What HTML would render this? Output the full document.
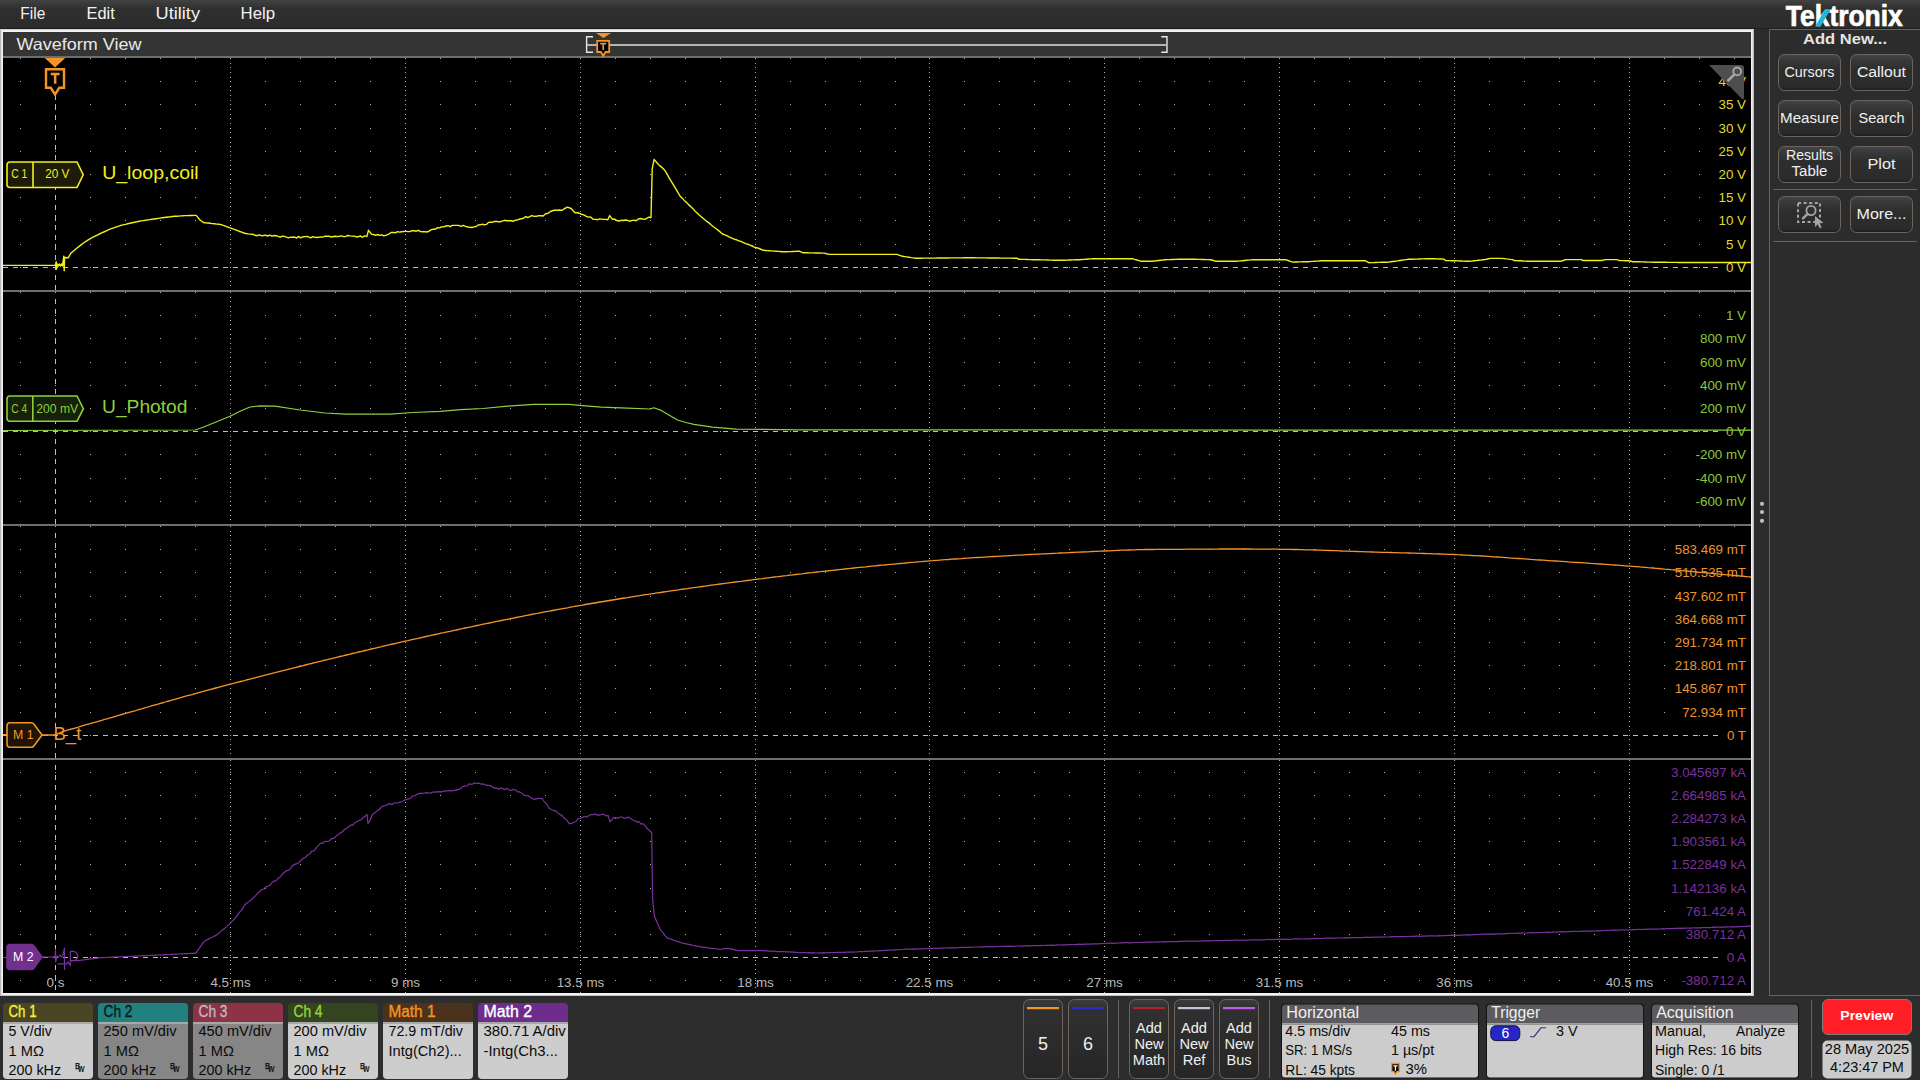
<!DOCTYPE html><html><head><meta charset="utf-8"><title>Waveform View</title><style>html,body{margin:0;padding:0;width:1920px;height:1080px;overflow:hidden;background:#2c2c2c}svg{display:block;font-family:"Liberation Sans",sans-serif}</style></head><body><svg width="1920" height="1080" viewBox="0 0 1920 1080"><defs>
<linearGradient id="gMenu" x1="0" y1="0" x2="0" y2="1"><stop offset="0" stop-color="#424242"/><stop offset="0.32" stop-color="#2f2f2f"/><stop offset="1" stop-color="#2c2c2c"/></linearGradient>
<linearGradient id="gBtn" x1="0" y1="0" x2="0" y2="1"><stop offset="0" stop-color="#45464a"/><stop offset="0.12" stop-color="#3a3b3d"/><stop offset="0.4" stop-color="#2e2e2e"/><stop offset="0.9" stop-color="#2b2b2b"/><stop offset="1" stop-color="#1d1d1d"/></linearGradient>
<linearGradient id="gBtn2" x1="0" y1="0" x2="0" y2="1"><stop offset="0" stop-color="#3c3c3c"/><stop offset="0.12" stop-color="#303030"/><stop offset="1" stop-color="#262626"/></linearGradient>
</defs><rect x="0" y="0" width="1920" height="1080" fill="#2c2c2c"/><rect x="0" y="0" width="1920" height="28" fill="url(#gMenu)"/><rect x="0" y="28" width="1920" height="1" fill="#1f1f1f"/><rect x="0" y="29" width="1754" height="967" fill="#f2f2f4"/><rect x="0" y="29" width="1" height="967" fill="#b9b9bd"/><rect x="1" y="29" width="1" height="967" fill="#e2e2e6"/><rect x="0" y="29" width="1754" height="1" fill="#d0d0d4"/><rect x="1752" y="29" width="1" height="967" fill="#e2e2e6"/><rect x="1753" y="29" width="1" height="967" fill="#b9b9bd"/><rect x="0" y="995" width="1754" height="1" fill="#c4c4c8"/><rect x="3" y="32" width="1748" height="24" fill="#343434"/><rect x="3" y="56" width="1748" height="2" fill="#6e6e6e"/><rect x="3" y="58" width="1748" height="935" fill="#000"/><path d="M20 58h1v1h-1zM55 58h1v1h-1zM90 58h1v1h-1zM125 58h1v1h-1zM160 58h1v1h-1zM195 58h1v1h-1zM230 58h1v1h-1zM265 58h1v1h-1zM300 58h1v1h-1zM335 58h1v1h-1zM370 58h1v1h-1zM405 58h1v1h-1zM440 58h1v1h-1zM475 58h1v1h-1zM510 58h1v1h-1zM545 58h1v1h-1zM580 58h1v1h-1zM615 58h1v1h-1zM650 58h1v1h-1zM685 58h1v1h-1zM720 58h1v1h-1zM755 58h1v1h-1zM790 58h1v1h-1zM825 58h1v1h-1zM860 58h1v1h-1zM895 58h1v1h-1zM929 58h1v1h-1zM964 58h1v1h-1zM999 58h1v1h-1zM1034 58h1v1h-1zM1069 58h1v1h-1zM1104 58h1v1h-1zM1139 58h1v1h-1zM1174 58h1v1h-1zM1209 58h1v1h-1zM1244 58h1v1h-1zM1279 58h1v1h-1zM1314 58h1v1h-1zM1349 58h1v1h-1zM1384 58h1v1h-1zM1419 58h1v1h-1zM1454 58h1v1h-1zM1489 58h1v1h-1zM1524 58h1v1h-1zM1559 58h1v1h-1zM1594 58h1v1h-1zM1629 58h1v1h-1zM1664 58h1v1h-1zM1699 58h1v1h-1zM1734 58h1v1h-1zM20 81h1v1h-1zM55 81h1v1h-1zM90 81h1v1h-1zM125 81h1v1h-1zM160 81h1v1h-1zM195 81h1v1h-1zM230 81h1v1h-1zM265 81h1v1h-1zM300 81h1v1h-1zM335 81h1v1h-1zM370 81h1v1h-1zM405 81h1v1h-1zM440 81h1v1h-1zM475 81h1v1h-1zM510 81h1v1h-1zM545 81h1v1h-1zM580 81h1v1h-1zM615 81h1v1h-1zM650 81h1v1h-1zM685 81h1v1h-1zM720 81h1v1h-1zM755 81h1v1h-1zM790 81h1v1h-1zM825 81h1v1h-1zM860 81h1v1h-1zM895 81h1v1h-1zM929 81h1v1h-1zM964 81h1v1h-1zM999 81h1v1h-1zM1034 81h1v1h-1zM1069 81h1v1h-1zM1104 81h1v1h-1zM1139 81h1v1h-1zM1174 81h1v1h-1zM1209 81h1v1h-1zM1244 81h1v1h-1zM1279 81h1v1h-1zM1314 81h1v1h-1zM1349 81h1v1h-1zM1384 81h1v1h-1zM1419 81h1v1h-1zM1454 81h1v1h-1zM1489 81h1v1h-1zM1524 81h1v1h-1zM1559 81h1v1h-1zM1594 81h1v1h-1zM1629 81h1v1h-1zM1664 81h1v1h-1zM1699 81h1v1h-1zM1734 81h1v1h-1zM20 104h1v1h-1zM55 104h1v1h-1zM90 104h1v1h-1zM125 104h1v1h-1zM160 104h1v1h-1zM195 104h1v1h-1zM230 104h1v1h-1zM265 104h1v1h-1zM300 104h1v1h-1zM335 104h1v1h-1zM370 104h1v1h-1zM405 104h1v1h-1zM440 104h1v1h-1zM475 104h1v1h-1zM510 104h1v1h-1zM545 104h1v1h-1zM580 104h1v1h-1zM615 104h1v1h-1zM650 104h1v1h-1zM685 104h1v1h-1zM720 104h1v1h-1zM755 104h1v1h-1zM790 104h1v1h-1zM825 104h1v1h-1zM860 104h1v1h-1zM895 104h1v1h-1zM929 104h1v1h-1zM964 104h1v1h-1zM999 104h1v1h-1zM1034 104h1v1h-1zM1069 104h1v1h-1zM1104 104h1v1h-1zM1139 104h1v1h-1zM1174 104h1v1h-1zM1209 104h1v1h-1zM1244 104h1v1h-1zM1279 104h1v1h-1zM1314 104h1v1h-1zM1349 104h1v1h-1zM1384 104h1v1h-1zM1419 104h1v1h-1zM1454 104h1v1h-1zM1489 104h1v1h-1zM1524 104h1v1h-1zM1559 104h1v1h-1zM1594 104h1v1h-1zM1629 104h1v1h-1zM1664 104h1v1h-1zM1699 104h1v1h-1zM1734 104h1v1h-1zM20 128h1v1h-1zM55 128h1v1h-1zM90 128h1v1h-1zM125 128h1v1h-1zM160 128h1v1h-1zM195 128h1v1h-1zM230 128h1v1h-1zM265 128h1v1h-1zM300 128h1v1h-1zM335 128h1v1h-1zM370 128h1v1h-1zM405 128h1v1h-1zM440 128h1v1h-1zM475 128h1v1h-1zM510 128h1v1h-1zM545 128h1v1h-1zM580 128h1v1h-1zM615 128h1v1h-1zM650 128h1v1h-1zM685 128h1v1h-1zM720 128h1v1h-1zM755 128h1v1h-1zM790 128h1v1h-1zM825 128h1v1h-1zM860 128h1v1h-1zM895 128h1v1h-1zM929 128h1v1h-1zM964 128h1v1h-1zM999 128h1v1h-1zM1034 128h1v1h-1zM1069 128h1v1h-1zM1104 128h1v1h-1zM1139 128h1v1h-1zM1174 128h1v1h-1zM1209 128h1v1h-1zM1244 128h1v1h-1zM1279 128h1v1h-1zM1314 128h1v1h-1zM1349 128h1v1h-1zM1384 128h1v1h-1zM1419 128h1v1h-1zM1454 128h1v1h-1zM1489 128h1v1h-1zM1524 128h1v1h-1zM1559 128h1v1h-1zM1594 128h1v1h-1zM1629 128h1v1h-1zM1664 128h1v1h-1zM1699 128h1v1h-1zM1734 128h1v1h-1zM20 151h1v1h-1zM55 151h1v1h-1zM90 151h1v1h-1zM125 151h1v1h-1zM160 151h1v1h-1zM195 151h1v1h-1zM230 151h1v1h-1zM265 151h1v1h-1zM300 151h1v1h-1zM335 151h1v1h-1zM370 151h1v1h-1zM405 151h1v1h-1zM440 151h1v1h-1zM475 151h1v1h-1zM510 151h1v1h-1zM545 151h1v1h-1zM580 151h1v1h-1zM615 151h1v1h-1zM650 151h1v1h-1zM685 151h1v1h-1zM720 151h1v1h-1zM755 151h1v1h-1zM790 151h1v1h-1zM825 151h1v1h-1zM860 151h1v1h-1zM895 151h1v1h-1zM929 151h1v1h-1zM964 151h1v1h-1zM999 151h1v1h-1zM1034 151h1v1h-1zM1069 151h1v1h-1zM1104 151h1v1h-1zM1139 151h1v1h-1zM1174 151h1v1h-1zM1209 151h1v1h-1zM1244 151h1v1h-1zM1279 151h1v1h-1zM1314 151h1v1h-1zM1349 151h1v1h-1zM1384 151h1v1h-1zM1419 151h1v1h-1zM1454 151h1v1h-1zM1489 151h1v1h-1zM1524 151h1v1h-1zM1559 151h1v1h-1zM1594 151h1v1h-1zM1629 151h1v1h-1zM1664 151h1v1h-1zM1699 151h1v1h-1zM1734 151h1v1h-1zM20 174h1v1h-1zM55 174h1v1h-1zM90 174h1v1h-1zM125 174h1v1h-1zM160 174h1v1h-1zM195 174h1v1h-1zM230 174h1v1h-1zM265 174h1v1h-1zM300 174h1v1h-1zM335 174h1v1h-1zM370 174h1v1h-1zM405 174h1v1h-1zM440 174h1v1h-1zM475 174h1v1h-1zM510 174h1v1h-1zM545 174h1v1h-1zM580 174h1v1h-1zM615 174h1v1h-1zM650 174h1v1h-1zM685 174h1v1h-1zM720 174h1v1h-1zM755 174h1v1h-1zM790 174h1v1h-1zM825 174h1v1h-1zM860 174h1v1h-1zM895 174h1v1h-1zM929 174h1v1h-1zM964 174h1v1h-1zM999 174h1v1h-1zM1034 174h1v1h-1zM1069 174h1v1h-1zM1104 174h1v1h-1zM1139 174h1v1h-1zM1174 174h1v1h-1zM1209 174h1v1h-1zM1244 174h1v1h-1zM1279 174h1v1h-1zM1314 174h1v1h-1zM1349 174h1v1h-1zM1384 174h1v1h-1zM1419 174h1v1h-1zM1454 174h1v1h-1zM1489 174h1v1h-1zM1524 174h1v1h-1zM1559 174h1v1h-1zM1594 174h1v1h-1zM1629 174h1v1h-1zM1664 174h1v1h-1zM1699 174h1v1h-1zM1734 174h1v1h-1zM20 197h1v1h-1zM55 197h1v1h-1zM90 197h1v1h-1zM125 197h1v1h-1zM160 197h1v1h-1zM195 197h1v1h-1zM230 197h1v1h-1zM265 197h1v1h-1zM300 197h1v1h-1zM335 197h1v1h-1zM370 197h1v1h-1zM405 197h1v1h-1zM440 197h1v1h-1zM475 197h1v1h-1zM510 197h1v1h-1zM545 197h1v1h-1zM580 197h1v1h-1zM615 197h1v1h-1zM650 197h1v1h-1zM685 197h1v1h-1zM720 197h1v1h-1zM755 197h1v1h-1zM790 197h1v1h-1zM825 197h1v1h-1zM860 197h1v1h-1zM895 197h1v1h-1zM929 197h1v1h-1zM964 197h1v1h-1zM999 197h1v1h-1zM1034 197h1v1h-1zM1069 197h1v1h-1zM1104 197h1v1h-1zM1139 197h1v1h-1zM1174 197h1v1h-1zM1209 197h1v1h-1zM1244 197h1v1h-1zM1279 197h1v1h-1zM1314 197h1v1h-1zM1349 197h1v1h-1zM1384 197h1v1h-1zM1419 197h1v1h-1zM1454 197h1v1h-1zM1489 197h1v1h-1zM1524 197h1v1h-1zM1559 197h1v1h-1zM1594 197h1v1h-1zM1629 197h1v1h-1zM1664 197h1v1h-1zM1699 197h1v1h-1zM1734 197h1v1h-1zM20 220h1v1h-1zM55 220h1v1h-1zM90 220h1v1h-1zM125 220h1v1h-1zM160 220h1v1h-1zM195 220h1v1h-1zM230 220h1v1h-1zM265 220h1v1h-1zM300 220h1v1h-1zM335 220h1v1h-1zM370 220h1v1h-1zM405 220h1v1h-1zM440 220h1v1h-1zM475 220h1v1h-1zM510 220h1v1h-1zM545 220h1v1h-1zM580 220h1v1h-1zM615 220h1v1h-1zM650 220h1v1h-1zM685 220h1v1h-1zM720 220h1v1h-1zM755 220h1v1h-1zM790 220h1v1h-1zM825 220h1v1h-1zM860 220h1v1h-1zM895 220h1v1h-1zM929 220h1v1h-1zM964 220h1v1h-1zM999 220h1v1h-1zM1034 220h1v1h-1zM1069 220h1v1h-1zM1104 220h1v1h-1zM1139 220h1v1h-1zM1174 220h1v1h-1zM1209 220h1v1h-1zM1244 220h1v1h-1zM1279 220h1v1h-1zM1314 220h1v1h-1zM1349 220h1v1h-1zM1384 220h1v1h-1zM1419 220h1v1h-1zM1454 220h1v1h-1zM1489 220h1v1h-1zM1524 220h1v1h-1zM1559 220h1v1h-1zM1594 220h1v1h-1zM1629 220h1v1h-1zM1664 220h1v1h-1zM1699 220h1v1h-1zM1734 220h1v1h-1zM20 244h1v1h-1zM55 244h1v1h-1zM90 244h1v1h-1zM125 244h1v1h-1zM160 244h1v1h-1zM195 244h1v1h-1zM230 244h1v1h-1zM265 244h1v1h-1zM300 244h1v1h-1zM335 244h1v1h-1zM370 244h1v1h-1zM405 244h1v1h-1zM440 244h1v1h-1zM475 244h1v1h-1zM510 244h1v1h-1zM545 244h1v1h-1zM580 244h1v1h-1zM615 244h1v1h-1zM650 244h1v1h-1zM685 244h1v1h-1zM720 244h1v1h-1zM755 244h1v1h-1zM790 244h1v1h-1zM825 244h1v1h-1zM860 244h1v1h-1zM895 244h1v1h-1zM929 244h1v1h-1zM964 244h1v1h-1zM999 244h1v1h-1zM1034 244h1v1h-1zM1069 244h1v1h-1zM1104 244h1v1h-1zM1139 244h1v1h-1zM1174 244h1v1h-1zM1209 244h1v1h-1zM1244 244h1v1h-1zM1279 244h1v1h-1zM1314 244h1v1h-1zM1349 244h1v1h-1zM1384 244h1v1h-1zM1419 244h1v1h-1zM1454 244h1v1h-1zM1489 244h1v1h-1zM1524 244h1v1h-1zM1559 244h1v1h-1zM1594 244h1v1h-1zM1629 244h1v1h-1zM1664 244h1v1h-1zM1699 244h1v1h-1zM1734 244h1v1h-1zM20 267h1v1h-1zM55 267h1v1h-1zM90 267h1v1h-1zM125 267h1v1h-1zM160 267h1v1h-1zM195 267h1v1h-1zM230 267h1v1h-1zM265 267h1v1h-1zM300 267h1v1h-1zM335 267h1v1h-1zM370 267h1v1h-1zM405 267h1v1h-1zM440 267h1v1h-1zM475 267h1v1h-1zM510 267h1v1h-1zM545 267h1v1h-1zM580 267h1v1h-1zM615 267h1v1h-1zM650 267h1v1h-1zM685 267h1v1h-1zM720 267h1v1h-1zM755 267h1v1h-1zM790 267h1v1h-1zM825 267h1v1h-1zM860 267h1v1h-1zM895 267h1v1h-1zM929 267h1v1h-1zM964 267h1v1h-1zM999 267h1v1h-1zM1034 267h1v1h-1zM1069 267h1v1h-1zM1104 267h1v1h-1zM1139 267h1v1h-1zM1174 267h1v1h-1zM1209 267h1v1h-1zM1244 267h1v1h-1zM1279 267h1v1h-1zM1314 267h1v1h-1zM1349 267h1v1h-1zM1384 267h1v1h-1zM1419 267h1v1h-1zM1454 267h1v1h-1zM1489 267h1v1h-1zM1524 267h1v1h-1zM1559 267h1v1h-1zM1594 267h1v1h-1zM1629 267h1v1h-1zM1664 267h1v1h-1zM1699 267h1v1h-1zM1734 267h1v1h-1zM20 292h1v1h-1zM55 292h1v1h-1zM90 292h1v1h-1zM125 292h1v1h-1zM160 292h1v1h-1zM195 292h1v1h-1zM230 292h1v1h-1zM265 292h1v1h-1zM300 292h1v1h-1zM335 292h1v1h-1zM370 292h1v1h-1zM405 292h1v1h-1zM440 292h1v1h-1zM475 292h1v1h-1zM510 292h1v1h-1zM545 292h1v1h-1zM580 292h1v1h-1zM615 292h1v1h-1zM650 292h1v1h-1zM685 292h1v1h-1zM720 292h1v1h-1zM755 292h1v1h-1zM790 292h1v1h-1zM825 292h1v1h-1zM860 292h1v1h-1zM895 292h1v1h-1zM929 292h1v1h-1zM964 292h1v1h-1zM999 292h1v1h-1zM1034 292h1v1h-1zM1069 292h1v1h-1zM1104 292h1v1h-1zM1139 292h1v1h-1zM1174 292h1v1h-1zM1209 292h1v1h-1zM1244 292h1v1h-1zM1279 292h1v1h-1zM1314 292h1v1h-1zM1349 292h1v1h-1zM1384 292h1v1h-1zM1419 292h1v1h-1zM1454 292h1v1h-1zM1489 292h1v1h-1zM1524 292h1v1h-1zM1559 292h1v1h-1zM1594 292h1v1h-1zM1629 292h1v1h-1zM1664 292h1v1h-1zM1699 292h1v1h-1zM1734 292h1v1h-1zM20 315h1v1h-1zM55 315h1v1h-1zM90 315h1v1h-1zM125 315h1v1h-1zM160 315h1v1h-1zM195 315h1v1h-1zM230 315h1v1h-1zM265 315h1v1h-1zM300 315h1v1h-1zM335 315h1v1h-1zM370 315h1v1h-1zM405 315h1v1h-1zM440 315h1v1h-1zM475 315h1v1h-1zM510 315h1v1h-1zM545 315h1v1h-1zM580 315h1v1h-1zM615 315h1v1h-1zM650 315h1v1h-1zM685 315h1v1h-1zM720 315h1v1h-1zM755 315h1v1h-1zM790 315h1v1h-1zM825 315h1v1h-1zM860 315h1v1h-1zM895 315h1v1h-1zM929 315h1v1h-1zM964 315h1v1h-1zM999 315h1v1h-1zM1034 315h1v1h-1zM1069 315h1v1h-1zM1104 315h1v1h-1zM1139 315h1v1h-1zM1174 315h1v1h-1zM1209 315h1v1h-1zM1244 315h1v1h-1zM1279 315h1v1h-1zM1314 315h1v1h-1zM1349 315h1v1h-1zM1384 315h1v1h-1zM1419 315h1v1h-1zM1454 315h1v1h-1zM1489 315h1v1h-1zM1524 315h1v1h-1zM1559 315h1v1h-1zM1594 315h1v1h-1zM1629 315h1v1h-1zM1664 315h1v1h-1zM1699 315h1v1h-1zM1734 315h1v1h-1zM20 338h1v1h-1zM55 338h1v1h-1zM90 338h1v1h-1zM125 338h1v1h-1zM160 338h1v1h-1zM195 338h1v1h-1zM230 338h1v1h-1zM265 338h1v1h-1zM300 338h1v1h-1zM335 338h1v1h-1zM370 338h1v1h-1zM405 338h1v1h-1zM440 338h1v1h-1zM475 338h1v1h-1zM510 338h1v1h-1zM545 338h1v1h-1zM580 338h1v1h-1zM615 338h1v1h-1zM650 338h1v1h-1zM685 338h1v1h-1zM720 338h1v1h-1zM755 338h1v1h-1zM790 338h1v1h-1zM825 338h1v1h-1zM860 338h1v1h-1zM895 338h1v1h-1zM929 338h1v1h-1zM964 338h1v1h-1zM999 338h1v1h-1zM1034 338h1v1h-1zM1069 338h1v1h-1zM1104 338h1v1h-1zM1139 338h1v1h-1zM1174 338h1v1h-1zM1209 338h1v1h-1zM1244 338h1v1h-1zM1279 338h1v1h-1zM1314 338h1v1h-1zM1349 338h1v1h-1zM1384 338h1v1h-1zM1419 338h1v1h-1zM1454 338h1v1h-1zM1489 338h1v1h-1zM1524 338h1v1h-1zM1559 338h1v1h-1zM1594 338h1v1h-1zM1629 338h1v1h-1zM1664 338h1v1h-1zM1699 338h1v1h-1zM1734 338h1v1h-1zM20 362h1v1h-1zM55 362h1v1h-1zM90 362h1v1h-1zM125 362h1v1h-1zM160 362h1v1h-1zM195 362h1v1h-1zM230 362h1v1h-1zM265 362h1v1h-1zM300 362h1v1h-1zM335 362h1v1h-1zM370 362h1v1h-1zM405 362h1v1h-1zM440 362h1v1h-1zM475 362h1v1h-1zM510 362h1v1h-1zM545 362h1v1h-1zM580 362h1v1h-1zM615 362h1v1h-1zM650 362h1v1h-1zM685 362h1v1h-1zM720 362h1v1h-1zM755 362h1v1h-1zM790 362h1v1h-1zM825 362h1v1h-1zM860 362h1v1h-1zM895 362h1v1h-1zM929 362h1v1h-1zM964 362h1v1h-1zM999 362h1v1h-1zM1034 362h1v1h-1zM1069 362h1v1h-1zM1104 362h1v1h-1zM1139 362h1v1h-1zM1174 362h1v1h-1zM1209 362h1v1h-1zM1244 362h1v1h-1zM1279 362h1v1h-1zM1314 362h1v1h-1zM1349 362h1v1h-1zM1384 362h1v1h-1zM1419 362h1v1h-1zM1454 362h1v1h-1zM1489 362h1v1h-1zM1524 362h1v1h-1zM1559 362h1v1h-1zM1594 362h1v1h-1zM1629 362h1v1h-1zM1664 362h1v1h-1zM1699 362h1v1h-1zM1734 362h1v1h-1zM20 385h1v1h-1zM55 385h1v1h-1zM90 385h1v1h-1zM125 385h1v1h-1zM160 385h1v1h-1zM195 385h1v1h-1zM230 385h1v1h-1zM265 385h1v1h-1zM300 385h1v1h-1zM335 385h1v1h-1zM370 385h1v1h-1zM405 385h1v1h-1zM440 385h1v1h-1zM475 385h1v1h-1zM510 385h1v1h-1zM545 385h1v1h-1zM580 385h1v1h-1zM615 385h1v1h-1zM650 385h1v1h-1zM685 385h1v1h-1zM720 385h1v1h-1zM755 385h1v1h-1zM790 385h1v1h-1zM825 385h1v1h-1zM860 385h1v1h-1zM895 385h1v1h-1zM929 385h1v1h-1zM964 385h1v1h-1zM999 385h1v1h-1zM1034 385h1v1h-1zM1069 385h1v1h-1zM1104 385h1v1h-1zM1139 385h1v1h-1zM1174 385h1v1h-1zM1209 385h1v1h-1zM1244 385h1v1h-1zM1279 385h1v1h-1zM1314 385h1v1h-1zM1349 385h1v1h-1zM1384 385h1v1h-1zM1419 385h1v1h-1zM1454 385h1v1h-1zM1489 385h1v1h-1zM1524 385h1v1h-1zM1559 385h1v1h-1zM1594 385h1v1h-1zM1629 385h1v1h-1zM1664 385h1v1h-1zM1699 385h1v1h-1zM1734 385h1v1h-1zM20 408h1v1h-1zM55 408h1v1h-1zM90 408h1v1h-1zM125 408h1v1h-1zM160 408h1v1h-1zM195 408h1v1h-1zM230 408h1v1h-1zM265 408h1v1h-1zM300 408h1v1h-1zM335 408h1v1h-1zM370 408h1v1h-1zM405 408h1v1h-1zM440 408h1v1h-1zM475 408h1v1h-1zM510 408h1v1h-1zM545 408h1v1h-1zM580 408h1v1h-1zM615 408h1v1h-1zM650 408h1v1h-1zM685 408h1v1h-1zM720 408h1v1h-1zM755 408h1v1h-1zM790 408h1v1h-1zM825 408h1v1h-1zM860 408h1v1h-1zM895 408h1v1h-1zM929 408h1v1h-1zM964 408h1v1h-1zM999 408h1v1h-1zM1034 408h1v1h-1zM1069 408h1v1h-1zM1104 408h1v1h-1zM1139 408h1v1h-1zM1174 408h1v1h-1zM1209 408h1v1h-1zM1244 408h1v1h-1zM1279 408h1v1h-1zM1314 408h1v1h-1zM1349 408h1v1h-1zM1384 408h1v1h-1zM1419 408h1v1h-1zM1454 408h1v1h-1zM1489 408h1v1h-1zM1524 408h1v1h-1zM1559 408h1v1h-1zM1594 408h1v1h-1zM1629 408h1v1h-1zM1664 408h1v1h-1zM1699 408h1v1h-1zM1734 408h1v1h-1zM20 431h1v1h-1zM55 431h1v1h-1zM90 431h1v1h-1zM125 431h1v1h-1zM160 431h1v1h-1zM195 431h1v1h-1zM230 431h1v1h-1zM265 431h1v1h-1zM300 431h1v1h-1zM335 431h1v1h-1zM370 431h1v1h-1zM405 431h1v1h-1zM440 431h1v1h-1zM475 431h1v1h-1zM510 431h1v1h-1zM545 431h1v1h-1zM580 431h1v1h-1zM615 431h1v1h-1zM650 431h1v1h-1zM685 431h1v1h-1zM720 431h1v1h-1zM755 431h1v1h-1zM790 431h1v1h-1zM825 431h1v1h-1zM860 431h1v1h-1zM895 431h1v1h-1zM929 431h1v1h-1zM964 431h1v1h-1zM999 431h1v1h-1zM1034 431h1v1h-1zM1069 431h1v1h-1zM1104 431h1v1h-1zM1139 431h1v1h-1zM1174 431h1v1h-1zM1209 431h1v1h-1zM1244 431h1v1h-1zM1279 431h1v1h-1zM1314 431h1v1h-1zM1349 431h1v1h-1zM1384 431h1v1h-1zM1419 431h1v1h-1zM1454 431h1v1h-1zM1489 431h1v1h-1zM1524 431h1v1h-1zM1559 431h1v1h-1zM1594 431h1v1h-1zM1629 431h1v1h-1zM1664 431h1v1h-1zM1699 431h1v1h-1zM1734 431h1v1h-1zM20 454h1v1h-1zM55 454h1v1h-1zM90 454h1v1h-1zM125 454h1v1h-1zM160 454h1v1h-1zM195 454h1v1h-1zM230 454h1v1h-1zM265 454h1v1h-1zM300 454h1v1h-1zM335 454h1v1h-1zM370 454h1v1h-1zM405 454h1v1h-1zM440 454h1v1h-1zM475 454h1v1h-1zM510 454h1v1h-1zM545 454h1v1h-1zM580 454h1v1h-1zM615 454h1v1h-1zM650 454h1v1h-1zM685 454h1v1h-1zM720 454h1v1h-1zM755 454h1v1h-1zM790 454h1v1h-1zM825 454h1v1h-1zM860 454h1v1h-1zM895 454h1v1h-1zM929 454h1v1h-1zM964 454h1v1h-1zM999 454h1v1h-1zM1034 454h1v1h-1zM1069 454h1v1h-1zM1104 454h1v1h-1zM1139 454h1v1h-1zM1174 454h1v1h-1zM1209 454h1v1h-1zM1244 454h1v1h-1zM1279 454h1v1h-1zM1314 454h1v1h-1zM1349 454h1v1h-1zM1384 454h1v1h-1zM1419 454h1v1h-1zM1454 454h1v1h-1zM1489 454h1v1h-1zM1524 454h1v1h-1zM1559 454h1v1h-1zM1594 454h1v1h-1zM1629 454h1v1h-1zM1664 454h1v1h-1zM1699 454h1v1h-1zM1734 454h1v1h-1zM20 478h1v1h-1zM55 478h1v1h-1zM90 478h1v1h-1zM125 478h1v1h-1zM160 478h1v1h-1zM195 478h1v1h-1zM230 478h1v1h-1zM265 478h1v1h-1zM300 478h1v1h-1zM335 478h1v1h-1zM370 478h1v1h-1zM405 478h1v1h-1zM440 478h1v1h-1zM475 478h1v1h-1zM510 478h1v1h-1zM545 478h1v1h-1zM580 478h1v1h-1zM615 478h1v1h-1zM650 478h1v1h-1zM685 478h1v1h-1zM720 478h1v1h-1zM755 478h1v1h-1zM790 478h1v1h-1zM825 478h1v1h-1zM860 478h1v1h-1zM895 478h1v1h-1zM929 478h1v1h-1zM964 478h1v1h-1zM999 478h1v1h-1zM1034 478h1v1h-1zM1069 478h1v1h-1zM1104 478h1v1h-1zM1139 478h1v1h-1zM1174 478h1v1h-1zM1209 478h1v1h-1zM1244 478h1v1h-1zM1279 478h1v1h-1zM1314 478h1v1h-1zM1349 478h1v1h-1zM1384 478h1v1h-1zM1419 478h1v1h-1zM1454 478h1v1h-1zM1489 478h1v1h-1zM1524 478h1v1h-1zM1559 478h1v1h-1zM1594 478h1v1h-1zM1629 478h1v1h-1zM1664 478h1v1h-1zM1699 478h1v1h-1zM1734 478h1v1h-1zM20 501h1v1h-1zM55 501h1v1h-1zM90 501h1v1h-1zM125 501h1v1h-1zM160 501h1v1h-1zM195 501h1v1h-1zM230 501h1v1h-1zM265 501h1v1h-1zM300 501h1v1h-1zM335 501h1v1h-1zM370 501h1v1h-1zM405 501h1v1h-1zM440 501h1v1h-1zM475 501h1v1h-1zM510 501h1v1h-1zM545 501h1v1h-1zM580 501h1v1h-1zM615 501h1v1h-1zM650 501h1v1h-1zM685 501h1v1h-1zM720 501h1v1h-1zM755 501h1v1h-1zM790 501h1v1h-1zM825 501h1v1h-1zM860 501h1v1h-1zM895 501h1v1h-1zM929 501h1v1h-1zM964 501h1v1h-1zM999 501h1v1h-1zM1034 501h1v1h-1zM1069 501h1v1h-1zM1104 501h1v1h-1zM1139 501h1v1h-1zM1174 501h1v1h-1zM1209 501h1v1h-1zM1244 501h1v1h-1zM1279 501h1v1h-1zM1314 501h1v1h-1zM1349 501h1v1h-1zM1384 501h1v1h-1zM1419 501h1v1h-1zM1454 501h1v1h-1zM1489 501h1v1h-1zM1524 501h1v1h-1zM1559 501h1v1h-1zM1594 501h1v1h-1zM1629 501h1v1h-1zM1664 501h1v1h-1zM1699 501h1v1h-1zM1734 501h1v1h-1zM20 526h1v1h-1zM55 526h1v1h-1zM90 526h1v1h-1zM125 526h1v1h-1zM160 526h1v1h-1zM195 526h1v1h-1zM230 526h1v1h-1zM265 526h1v1h-1zM300 526h1v1h-1zM335 526h1v1h-1zM370 526h1v1h-1zM405 526h1v1h-1zM440 526h1v1h-1zM475 526h1v1h-1zM510 526h1v1h-1zM545 526h1v1h-1zM580 526h1v1h-1zM615 526h1v1h-1zM650 526h1v1h-1zM685 526h1v1h-1zM720 526h1v1h-1zM755 526h1v1h-1zM790 526h1v1h-1zM825 526h1v1h-1zM860 526h1v1h-1zM895 526h1v1h-1zM929 526h1v1h-1zM964 526h1v1h-1zM999 526h1v1h-1zM1034 526h1v1h-1zM1069 526h1v1h-1zM1104 526h1v1h-1zM1139 526h1v1h-1zM1174 526h1v1h-1zM1209 526h1v1h-1zM1244 526h1v1h-1zM1279 526h1v1h-1zM1314 526h1v1h-1zM1349 526h1v1h-1zM1384 526h1v1h-1zM1419 526h1v1h-1zM1454 526h1v1h-1zM1489 526h1v1h-1zM1524 526h1v1h-1zM1559 526h1v1h-1zM1594 526h1v1h-1zM1629 526h1v1h-1zM1664 526h1v1h-1zM1699 526h1v1h-1zM1734 526h1v1h-1zM20 549h1v1h-1zM55 549h1v1h-1zM90 549h1v1h-1zM125 549h1v1h-1zM160 549h1v1h-1zM195 549h1v1h-1zM230 549h1v1h-1zM265 549h1v1h-1zM300 549h1v1h-1zM335 549h1v1h-1zM370 549h1v1h-1zM405 549h1v1h-1zM440 549h1v1h-1zM475 549h1v1h-1zM510 549h1v1h-1zM545 549h1v1h-1zM580 549h1v1h-1zM615 549h1v1h-1zM650 549h1v1h-1zM685 549h1v1h-1zM720 549h1v1h-1zM755 549h1v1h-1zM790 549h1v1h-1zM825 549h1v1h-1zM860 549h1v1h-1zM895 549h1v1h-1zM929 549h1v1h-1zM964 549h1v1h-1zM999 549h1v1h-1zM1034 549h1v1h-1zM1069 549h1v1h-1zM1104 549h1v1h-1zM1139 549h1v1h-1zM1174 549h1v1h-1zM1209 549h1v1h-1zM1244 549h1v1h-1zM1279 549h1v1h-1zM1314 549h1v1h-1zM1349 549h1v1h-1zM1384 549h1v1h-1zM1419 549h1v1h-1zM1454 549h1v1h-1zM1489 549h1v1h-1zM1524 549h1v1h-1zM1559 549h1v1h-1zM1594 549h1v1h-1zM1629 549h1v1h-1zM1664 549h1v1h-1zM1699 549h1v1h-1zM1734 549h1v1h-1zM20 572h1v1h-1zM55 572h1v1h-1zM90 572h1v1h-1zM125 572h1v1h-1zM160 572h1v1h-1zM195 572h1v1h-1zM230 572h1v1h-1zM265 572h1v1h-1zM300 572h1v1h-1zM335 572h1v1h-1zM370 572h1v1h-1zM405 572h1v1h-1zM440 572h1v1h-1zM475 572h1v1h-1zM510 572h1v1h-1zM545 572h1v1h-1zM580 572h1v1h-1zM615 572h1v1h-1zM650 572h1v1h-1zM685 572h1v1h-1zM720 572h1v1h-1zM755 572h1v1h-1zM790 572h1v1h-1zM825 572h1v1h-1zM860 572h1v1h-1zM895 572h1v1h-1zM929 572h1v1h-1zM964 572h1v1h-1zM999 572h1v1h-1zM1034 572h1v1h-1zM1069 572h1v1h-1zM1104 572h1v1h-1zM1139 572h1v1h-1zM1174 572h1v1h-1zM1209 572h1v1h-1zM1244 572h1v1h-1zM1279 572h1v1h-1zM1314 572h1v1h-1zM1349 572h1v1h-1zM1384 572h1v1h-1zM1419 572h1v1h-1zM1454 572h1v1h-1zM1489 572h1v1h-1zM1524 572h1v1h-1zM1559 572h1v1h-1zM1594 572h1v1h-1zM1629 572h1v1h-1zM1664 572h1v1h-1zM1699 572h1v1h-1zM1734 572h1v1h-1zM20 596h1v1h-1zM55 596h1v1h-1zM90 596h1v1h-1zM125 596h1v1h-1zM160 596h1v1h-1zM195 596h1v1h-1zM230 596h1v1h-1zM265 596h1v1h-1zM300 596h1v1h-1zM335 596h1v1h-1zM370 596h1v1h-1zM405 596h1v1h-1zM440 596h1v1h-1zM475 596h1v1h-1zM510 596h1v1h-1zM545 596h1v1h-1zM580 596h1v1h-1zM615 596h1v1h-1zM650 596h1v1h-1zM685 596h1v1h-1zM720 596h1v1h-1zM755 596h1v1h-1zM790 596h1v1h-1zM825 596h1v1h-1zM860 596h1v1h-1zM895 596h1v1h-1zM929 596h1v1h-1zM964 596h1v1h-1zM999 596h1v1h-1zM1034 596h1v1h-1zM1069 596h1v1h-1zM1104 596h1v1h-1zM1139 596h1v1h-1zM1174 596h1v1h-1zM1209 596h1v1h-1zM1244 596h1v1h-1zM1279 596h1v1h-1zM1314 596h1v1h-1zM1349 596h1v1h-1zM1384 596h1v1h-1zM1419 596h1v1h-1zM1454 596h1v1h-1zM1489 596h1v1h-1zM1524 596h1v1h-1zM1559 596h1v1h-1zM1594 596h1v1h-1zM1629 596h1v1h-1zM1664 596h1v1h-1zM1699 596h1v1h-1zM1734 596h1v1h-1zM20 619h1v1h-1zM55 619h1v1h-1zM90 619h1v1h-1zM125 619h1v1h-1zM160 619h1v1h-1zM195 619h1v1h-1zM230 619h1v1h-1zM265 619h1v1h-1zM300 619h1v1h-1zM335 619h1v1h-1zM370 619h1v1h-1zM405 619h1v1h-1zM440 619h1v1h-1zM475 619h1v1h-1zM510 619h1v1h-1zM545 619h1v1h-1zM580 619h1v1h-1zM615 619h1v1h-1zM650 619h1v1h-1zM685 619h1v1h-1zM720 619h1v1h-1zM755 619h1v1h-1zM790 619h1v1h-1zM825 619h1v1h-1zM860 619h1v1h-1zM895 619h1v1h-1zM929 619h1v1h-1zM964 619h1v1h-1zM999 619h1v1h-1zM1034 619h1v1h-1zM1069 619h1v1h-1zM1104 619h1v1h-1zM1139 619h1v1h-1zM1174 619h1v1h-1zM1209 619h1v1h-1zM1244 619h1v1h-1zM1279 619h1v1h-1zM1314 619h1v1h-1zM1349 619h1v1h-1zM1384 619h1v1h-1zM1419 619h1v1h-1zM1454 619h1v1h-1zM1489 619h1v1h-1zM1524 619h1v1h-1zM1559 619h1v1h-1zM1594 619h1v1h-1zM1629 619h1v1h-1zM1664 619h1v1h-1zM1699 619h1v1h-1zM1734 619h1v1h-1zM20 642h1v1h-1zM55 642h1v1h-1zM90 642h1v1h-1zM125 642h1v1h-1zM160 642h1v1h-1zM195 642h1v1h-1zM230 642h1v1h-1zM265 642h1v1h-1zM300 642h1v1h-1zM335 642h1v1h-1zM370 642h1v1h-1zM405 642h1v1h-1zM440 642h1v1h-1zM475 642h1v1h-1zM510 642h1v1h-1zM545 642h1v1h-1zM580 642h1v1h-1zM615 642h1v1h-1zM650 642h1v1h-1zM685 642h1v1h-1zM720 642h1v1h-1zM755 642h1v1h-1zM790 642h1v1h-1zM825 642h1v1h-1zM860 642h1v1h-1zM895 642h1v1h-1zM929 642h1v1h-1zM964 642h1v1h-1zM999 642h1v1h-1zM1034 642h1v1h-1zM1069 642h1v1h-1zM1104 642h1v1h-1zM1139 642h1v1h-1zM1174 642h1v1h-1zM1209 642h1v1h-1zM1244 642h1v1h-1zM1279 642h1v1h-1zM1314 642h1v1h-1zM1349 642h1v1h-1zM1384 642h1v1h-1zM1419 642h1v1h-1zM1454 642h1v1h-1zM1489 642h1v1h-1zM1524 642h1v1h-1zM1559 642h1v1h-1zM1594 642h1v1h-1zM1629 642h1v1h-1zM1664 642h1v1h-1zM1699 642h1v1h-1zM1734 642h1v1h-1zM20 665h1v1h-1zM55 665h1v1h-1zM90 665h1v1h-1zM125 665h1v1h-1zM160 665h1v1h-1zM195 665h1v1h-1zM230 665h1v1h-1zM265 665h1v1h-1zM300 665h1v1h-1zM335 665h1v1h-1zM370 665h1v1h-1zM405 665h1v1h-1zM440 665h1v1h-1zM475 665h1v1h-1zM510 665h1v1h-1zM545 665h1v1h-1zM580 665h1v1h-1zM615 665h1v1h-1zM650 665h1v1h-1zM685 665h1v1h-1zM720 665h1v1h-1zM755 665h1v1h-1zM790 665h1v1h-1zM825 665h1v1h-1zM860 665h1v1h-1zM895 665h1v1h-1zM929 665h1v1h-1zM964 665h1v1h-1zM999 665h1v1h-1zM1034 665h1v1h-1zM1069 665h1v1h-1zM1104 665h1v1h-1zM1139 665h1v1h-1zM1174 665h1v1h-1zM1209 665h1v1h-1zM1244 665h1v1h-1zM1279 665h1v1h-1zM1314 665h1v1h-1zM1349 665h1v1h-1zM1384 665h1v1h-1zM1419 665h1v1h-1zM1454 665h1v1h-1zM1489 665h1v1h-1zM1524 665h1v1h-1zM1559 665h1v1h-1zM1594 665h1v1h-1zM1629 665h1v1h-1zM1664 665h1v1h-1zM1699 665h1v1h-1zM1734 665h1v1h-1zM20 688h1v1h-1zM55 688h1v1h-1zM90 688h1v1h-1zM125 688h1v1h-1zM160 688h1v1h-1zM195 688h1v1h-1zM230 688h1v1h-1zM265 688h1v1h-1zM300 688h1v1h-1zM335 688h1v1h-1zM370 688h1v1h-1zM405 688h1v1h-1zM440 688h1v1h-1zM475 688h1v1h-1zM510 688h1v1h-1zM545 688h1v1h-1zM580 688h1v1h-1zM615 688h1v1h-1zM650 688h1v1h-1zM685 688h1v1h-1zM720 688h1v1h-1zM755 688h1v1h-1zM790 688h1v1h-1zM825 688h1v1h-1zM860 688h1v1h-1zM895 688h1v1h-1zM929 688h1v1h-1zM964 688h1v1h-1zM999 688h1v1h-1zM1034 688h1v1h-1zM1069 688h1v1h-1zM1104 688h1v1h-1zM1139 688h1v1h-1zM1174 688h1v1h-1zM1209 688h1v1h-1zM1244 688h1v1h-1zM1279 688h1v1h-1zM1314 688h1v1h-1zM1349 688h1v1h-1zM1384 688h1v1h-1zM1419 688h1v1h-1zM1454 688h1v1h-1zM1489 688h1v1h-1zM1524 688h1v1h-1zM1559 688h1v1h-1zM1594 688h1v1h-1zM1629 688h1v1h-1zM1664 688h1v1h-1zM1699 688h1v1h-1zM1734 688h1v1h-1zM20 712h1v1h-1zM55 712h1v1h-1zM90 712h1v1h-1zM125 712h1v1h-1zM160 712h1v1h-1zM195 712h1v1h-1zM230 712h1v1h-1zM265 712h1v1h-1zM300 712h1v1h-1zM335 712h1v1h-1zM370 712h1v1h-1zM405 712h1v1h-1zM440 712h1v1h-1zM475 712h1v1h-1zM510 712h1v1h-1zM545 712h1v1h-1zM580 712h1v1h-1zM615 712h1v1h-1zM650 712h1v1h-1zM685 712h1v1h-1zM720 712h1v1h-1zM755 712h1v1h-1zM790 712h1v1h-1zM825 712h1v1h-1zM860 712h1v1h-1zM895 712h1v1h-1zM929 712h1v1h-1zM964 712h1v1h-1zM999 712h1v1h-1zM1034 712h1v1h-1zM1069 712h1v1h-1zM1104 712h1v1h-1zM1139 712h1v1h-1zM1174 712h1v1h-1zM1209 712h1v1h-1zM1244 712h1v1h-1zM1279 712h1v1h-1zM1314 712h1v1h-1zM1349 712h1v1h-1zM1384 712h1v1h-1zM1419 712h1v1h-1zM1454 712h1v1h-1zM1489 712h1v1h-1zM1524 712h1v1h-1zM1559 712h1v1h-1zM1594 712h1v1h-1zM1629 712h1v1h-1zM1664 712h1v1h-1zM1699 712h1v1h-1zM1734 712h1v1h-1zM20 735h1v1h-1zM55 735h1v1h-1zM90 735h1v1h-1zM125 735h1v1h-1zM160 735h1v1h-1zM195 735h1v1h-1zM230 735h1v1h-1zM265 735h1v1h-1zM300 735h1v1h-1zM335 735h1v1h-1zM370 735h1v1h-1zM405 735h1v1h-1zM440 735h1v1h-1zM475 735h1v1h-1zM510 735h1v1h-1zM545 735h1v1h-1zM580 735h1v1h-1zM615 735h1v1h-1zM650 735h1v1h-1zM685 735h1v1h-1zM720 735h1v1h-1zM755 735h1v1h-1zM790 735h1v1h-1zM825 735h1v1h-1zM860 735h1v1h-1zM895 735h1v1h-1zM929 735h1v1h-1zM964 735h1v1h-1zM999 735h1v1h-1zM1034 735h1v1h-1zM1069 735h1v1h-1zM1104 735h1v1h-1zM1139 735h1v1h-1zM1174 735h1v1h-1zM1209 735h1v1h-1zM1244 735h1v1h-1zM1279 735h1v1h-1zM1314 735h1v1h-1zM1349 735h1v1h-1zM1384 735h1v1h-1zM1419 735h1v1h-1zM1454 735h1v1h-1zM1489 735h1v1h-1zM1524 735h1v1h-1zM1559 735h1v1h-1zM1594 735h1v1h-1zM1629 735h1v1h-1zM1664 735h1v1h-1zM1699 735h1v1h-1zM1734 735h1v1h-1zM20 772h1v1h-1zM55 772h1v1h-1zM90 772h1v1h-1zM125 772h1v1h-1zM160 772h1v1h-1zM195 772h1v1h-1zM230 772h1v1h-1zM265 772h1v1h-1zM300 772h1v1h-1zM335 772h1v1h-1zM370 772h1v1h-1zM405 772h1v1h-1zM440 772h1v1h-1zM475 772h1v1h-1zM510 772h1v1h-1zM545 772h1v1h-1zM580 772h1v1h-1zM615 772h1v1h-1zM650 772h1v1h-1zM685 772h1v1h-1zM720 772h1v1h-1zM755 772h1v1h-1zM790 772h1v1h-1zM825 772h1v1h-1zM860 772h1v1h-1zM895 772h1v1h-1zM929 772h1v1h-1zM964 772h1v1h-1zM999 772h1v1h-1zM1034 772h1v1h-1zM1069 772h1v1h-1zM1104 772h1v1h-1zM1139 772h1v1h-1zM1174 772h1v1h-1zM1209 772h1v1h-1zM1244 772h1v1h-1zM1279 772h1v1h-1zM1314 772h1v1h-1zM1349 772h1v1h-1zM1384 772h1v1h-1zM1419 772h1v1h-1zM1454 772h1v1h-1zM1489 772h1v1h-1zM1524 772h1v1h-1zM1559 772h1v1h-1zM1594 772h1v1h-1zM1629 772h1v1h-1zM1664 772h1v1h-1zM1699 772h1v1h-1zM1734 772h1v1h-1zM20 795h1v1h-1zM55 795h1v1h-1zM90 795h1v1h-1zM125 795h1v1h-1zM160 795h1v1h-1zM195 795h1v1h-1zM230 795h1v1h-1zM265 795h1v1h-1zM300 795h1v1h-1zM335 795h1v1h-1zM370 795h1v1h-1zM405 795h1v1h-1zM440 795h1v1h-1zM475 795h1v1h-1zM510 795h1v1h-1zM545 795h1v1h-1zM580 795h1v1h-1zM615 795h1v1h-1zM650 795h1v1h-1zM685 795h1v1h-1zM720 795h1v1h-1zM755 795h1v1h-1zM790 795h1v1h-1zM825 795h1v1h-1zM860 795h1v1h-1zM895 795h1v1h-1zM929 795h1v1h-1zM964 795h1v1h-1zM999 795h1v1h-1zM1034 795h1v1h-1zM1069 795h1v1h-1zM1104 795h1v1h-1zM1139 795h1v1h-1zM1174 795h1v1h-1zM1209 795h1v1h-1zM1244 795h1v1h-1zM1279 795h1v1h-1zM1314 795h1v1h-1zM1349 795h1v1h-1zM1384 795h1v1h-1zM1419 795h1v1h-1zM1454 795h1v1h-1zM1489 795h1v1h-1zM1524 795h1v1h-1zM1559 795h1v1h-1zM1594 795h1v1h-1zM1629 795h1v1h-1zM1664 795h1v1h-1zM1699 795h1v1h-1zM1734 795h1v1h-1zM20 818h1v1h-1zM55 818h1v1h-1zM90 818h1v1h-1zM125 818h1v1h-1zM160 818h1v1h-1zM195 818h1v1h-1zM230 818h1v1h-1zM265 818h1v1h-1zM300 818h1v1h-1zM335 818h1v1h-1zM370 818h1v1h-1zM405 818h1v1h-1zM440 818h1v1h-1zM475 818h1v1h-1zM510 818h1v1h-1zM545 818h1v1h-1zM580 818h1v1h-1zM615 818h1v1h-1zM650 818h1v1h-1zM685 818h1v1h-1zM720 818h1v1h-1zM755 818h1v1h-1zM790 818h1v1h-1zM825 818h1v1h-1zM860 818h1v1h-1zM895 818h1v1h-1zM929 818h1v1h-1zM964 818h1v1h-1zM999 818h1v1h-1zM1034 818h1v1h-1zM1069 818h1v1h-1zM1104 818h1v1h-1zM1139 818h1v1h-1zM1174 818h1v1h-1zM1209 818h1v1h-1zM1244 818h1v1h-1zM1279 818h1v1h-1zM1314 818h1v1h-1zM1349 818h1v1h-1zM1384 818h1v1h-1zM1419 818h1v1h-1zM1454 818h1v1h-1zM1489 818h1v1h-1zM1524 818h1v1h-1zM1559 818h1v1h-1zM1594 818h1v1h-1zM1629 818h1v1h-1zM1664 818h1v1h-1zM1699 818h1v1h-1zM1734 818h1v1h-1zM20 841h1v1h-1zM55 841h1v1h-1zM90 841h1v1h-1zM125 841h1v1h-1zM160 841h1v1h-1zM195 841h1v1h-1zM230 841h1v1h-1zM265 841h1v1h-1zM300 841h1v1h-1zM335 841h1v1h-1zM370 841h1v1h-1zM405 841h1v1h-1zM440 841h1v1h-1zM475 841h1v1h-1zM510 841h1v1h-1zM545 841h1v1h-1zM580 841h1v1h-1zM615 841h1v1h-1zM650 841h1v1h-1zM685 841h1v1h-1zM720 841h1v1h-1zM755 841h1v1h-1zM790 841h1v1h-1zM825 841h1v1h-1zM860 841h1v1h-1zM895 841h1v1h-1zM929 841h1v1h-1zM964 841h1v1h-1zM999 841h1v1h-1zM1034 841h1v1h-1zM1069 841h1v1h-1zM1104 841h1v1h-1zM1139 841h1v1h-1zM1174 841h1v1h-1zM1209 841h1v1h-1zM1244 841h1v1h-1zM1279 841h1v1h-1zM1314 841h1v1h-1zM1349 841h1v1h-1zM1384 841h1v1h-1zM1419 841h1v1h-1zM1454 841h1v1h-1zM1489 841h1v1h-1zM1524 841h1v1h-1zM1559 841h1v1h-1zM1594 841h1v1h-1zM1629 841h1v1h-1zM1664 841h1v1h-1zM1699 841h1v1h-1zM1734 841h1v1h-1zM20 864h1v1h-1zM55 864h1v1h-1zM90 864h1v1h-1zM125 864h1v1h-1zM160 864h1v1h-1zM195 864h1v1h-1zM230 864h1v1h-1zM265 864h1v1h-1zM300 864h1v1h-1zM335 864h1v1h-1zM370 864h1v1h-1zM405 864h1v1h-1zM440 864h1v1h-1zM475 864h1v1h-1zM510 864h1v1h-1zM545 864h1v1h-1zM580 864h1v1h-1zM615 864h1v1h-1zM650 864h1v1h-1zM685 864h1v1h-1zM720 864h1v1h-1zM755 864h1v1h-1zM790 864h1v1h-1zM825 864h1v1h-1zM860 864h1v1h-1zM895 864h1v1h-1zM929 864h1v1h-1zM964 864h1v1h-1zM999 864h1v1h-1zM1034 864h1v1h-1zM1069 864h1v1h-1zM1104 864h1v1h-1zM1139 864h1v1h-1zM1174 864h1v1h-1zM1209 864h1v1h-1zM1244 864h1v1h-1zM1279 864h1v1h-1zM1314 864h1v1h-1zM1349 864h1v1h-1zM1384 864h1v1h-1zM1419 864h1v1h-1zM1454 864h1v1h-1zM1489 864h1v1h-1zM1524 864h1v1h-1zM1559 864h1v1h-1zM1594 864h1v1h-1zM1629 864h1v1h-1zM1664 864h1v1h-1zM1699 864h1v1h-1zM1734 864h1v1h-1zM20 888h1v1h-1zM55 888h1v1h-1zM90 888h1v1h-1zM125 888h1v1h-1zM160 888h1v1h-1zM195 888h1v1h-1zM230 888h1v1h-1zM265 888h1v1h-1zM300 888h1v1h-1zM335 888h1v1h-1zM370 888h1v1h-1zM405 888h1v1h-1zM440 888h1v1h-1zM475 888h1v1h-1zM510 888h1v1h-1zM545 888h1v1h-1zM580 888h1v1h-1zM615 888h1v1h-1zM650 888h1v1h-1zM685 888h1v1h-1zM720 888h1v1h-1zM755 888h1v1h-1zM790 888h1v1h-1zM825 888h1v1h-1zM860 888h1v1h-1zM895 888h1v1h-1zM929 888h1v1h-1zM964 888h1v1h-1zM999 888h1v1h-1zM1034 888h1v1h-1zM1069 888h1v1h-1zM1104 888h1v1h-1zM1139 888h1v1h-1zM1174 888h1v1h-1zM1209 888h1v1h-1zM1244 888h1v1h-1zM1279 888h1v1h-1zM1314 888h1v1h-1zM1349 888h1v1h-1zM1384 888h1v1h-1zM1419 888h1v1h-1zM1454 888h1v1h-1zM1489 888h1v1h-1zM1524 888h1v1h-1zM1559 888h1v1h-1zM1594 888h1v1h-1zM1629 888h1v1h-1zM1664 888h1v1h-1zM1699 888h1v1h-1zM1734 888h1v1h-1zM20 911h1v1h-1zM55 911h1v1h-1zM90 911h1v1h-1zM125 911h1v1h-1zM160 911h1v1h-1zM195 911h1v1h-1zM230 911h1v1h-1zM265 911h1v1h-1zM300 911h1v1h-1zM335 911h1v1h-1zM370 911h1v1h-1zM405 911h1v1h-1zM440 911h1v1h-1zM475 911h1v1h-1zM510 911h1v1h-1zM545 911h1v1h-1zM580 911h1v1h-1zM615 911h1v1h-1zM650 911h1v1h-1zM685 911h1v1h-1zM720 911h1v1h-1zM755 911h1v1h-1zM790 911h1v1h-1zM825 911h1v1h-1zM860 911h1v1h-1zM895 911h1v1h-1zM929 911h1v1h-1zM964 911h1v1h-1zM999 911h1v1h-1zM1034 911h1v1h-1zM1069 911h1v1h-1zM1104 911h1v1h-1zM1139 911h1v1h-1zM1174 911h1v1h-1zM1209 911h1v1h-1zM1244 911h1v1h-1zM1279 911h1v1h-1zM1314 911h1v1h-1zM1349 911h1v1h-1zM1384 911h1v1h-1zM1419 911h1v1h-1zM1454 911h1v1h-1zM1489 911h1v1h-1zM1524 911h1v1h-1zM1559 911h1v1h-1zM1594 911h1v1h-1zM1629 911h1v1h-1zM1664 911h1v1h-1zM1699 911h1v1h-1zM1734 911h1v1h-1zM20 934h1v1h-1zM55 934h1v1h-1zM90 934h1v1h-1zM125 934h1v1h-1zM160 934h1v1h-1zM195 934h1v1h-1zM230 934h1v1h-1zM265 934h1v1h-1zM300 934h1v1h-1zM335 934h1v1h-1zM370 934h1v1h-1zM405 934h1v1h-1zM440 934h1v1h-1zM475 934h1v1h-1zM510 934h1v1h-1zM545 934h1v1h-1zM580 934h1v1h-1zM615 934h1v1h-1zM650 934h1v1h-1zM685 934h1v1h-1zM720 934h1v1h-1zM755 934h1v1h-1zM790 934h1v1h-1zM825 934h1v1h-1zM860 934h1v1h-1zM895 934h1v1h-1zM929 934h1v1h-1zM964 934h1v1h-1zM999 934h1v1h-1zM1034 934h1v1h-1zM1069 934h1v1h-1zM1104 934h1v1h-1zM1139 934h1v1h-1zM1174 934h1v1h-1zM1209 934h1v1h-1zM1244 934h1v1h-1zM1279 934h1v1h-1zM1314 934h1v1h-1zM1349 934h1v1h-1zM1384 934h1v1h-1zM1419 934h1v1h-1zM1454 934h1v1h-1zM1489 934h1v1h-1zM1524 934h1v1h-1zM1559 934h1v1h-1zM1594 934h1v1h-1zM1629 934h1v1h-1zM1664 934h1v1h-1zM1699 934h1v1h-1zM1734 934h1v1h-1zM20 957h1v1h-1zM55 957h1v1h-1zM90 957h1v1h-1zM125 957h1v1h-1zM160 957h1v1h-1zM195 957h1v1h-1zM230 957h1v1h-1zM265 957h1v1h-1zM300 957h1v1h-1zM335 957h1v1h-1zM370 957h1v1h-1zM405 957h1v1h-1zM440 957h1v1h-1zM475 957h1v1h-1zM510 957h1v1h-1zM545 957h1v1h-1zM580 957h1v1h-1zM615 957h1v1h-1zM650 957h1v1h-1zM685 957h1v1h-1zM720 957h1v1h-1zM755 957h1v1h-1zM790 957h1v1h-1zM825 957h1v1h-1zM860 957h1v1h-1zM895 957h1v1h-1zM929 957h1v1h-1zM964 957h1v1h-1zM999 957h1v1h-1zM1034 957h1v1h-1zM1069 957h1v1h-1zM1104 957h1v1h-1zM1139 957h1v1h-1zM1174 957h1v1h-1zM1209 957h1v1h-1zM1244 957h1v1h-1zM1279 957h1v1h-1zM1314 957h1v1h-1zM1349 957h1v1h-1zM1384 957h1v1h-1zM1419 957h1v1h-1zM1454 957h1v1h-1zM1489 957h1v1h-1zM1524 957h1v1h-1zM1559 957h1v1h-1zM1594 957h1v1h-1zM1629 957h1v1h-1zM1664 957h1v1h-1zM1699 957h1v1h-1zM1734 957h1v1h-1zM20 980h1v1h-1zM55 980h1v1h-1zM90 980h1v1h-1zM125 980h1v1h-1zM160 980h1v1h-1zM195 980h1v1h-1zM230 980h1v1h-1zM265 980h1v1h-1zM300 980h1v1h-1zM335 980h1v1h-1zM370 980h1v1h-1zM405 980h1v1h-1zM440 980h1v1h-1zM475 980h1v1h-1zM510 980h1v1h-1zM545 980h1v1h-1zM580 980h1v1h-1zM615 980h1v1h-1zM650 980h1v1h-1zM685 980h1v1h-1zM720 980h1v1h-1zM755 980h1v1h-1zM790 980h1v1h-1zM825 980h1v1h-1zM860 980h1v1h-1zM895 980h1v1h-1zM929 980h1v1h-1zM964 980h1v1h-1zM999 980h1v1h-1zM1034 980h1v1h-1zM1069 980h1v1h-1zM1104 980h1v1h-1zM1139 980h1v1h-1zM1174 980h1v1h-1zM1209 980h1v1h-1zM1244 980h1v1h-1zM1279 980h1v1h-1zM1314 980h1v1h-1zM1349 980h1v1h-1zM1384 980h1v1h-1zM1419 980h1v1h-1zM1454 980h1v1h-1zM1489 980h1v1h-1zM1524 980h1v1h-1zM1559 980h1v1h-1zM1594 980h1v1h-1zM1629 980h1v1h-1zM1664 980h1v1h-1zM1699 980h1v1h-1zM1734 980h1v1h-1z" fill="#b0b0b0" shape-rendering="crispEdges"/><path d="M230 58h1v1h-1zM230 63h1v1h-1zM230 67h1v1h-1zM230 72h1v1h-1zM230 77h1v1h-1zM230 81h1v1h-1zM230 86h1v1h-1zM230 90h1v1h-1zM230 95h1v1h-1zM230 100h1v1h-1zM230 104h1v1h-1zM230 109h1v1h-1zM230 114h1v1h-1zM230 118h1v1h-1zM230 123h1v1h-1zM230 128h1v1h-1zM230 132h1v1h-1zM230 137h1v1h-1zM230 142h1v1h-1zM230 146h1v1h-1zM230 151h1v1h-1zM230 155h1v1h-1zM230 160h1v1h-1zM230 165h1v1h-1zM230 169h1v1h-1zM230 174h1v1h-1zM230 179h1v1h-1zM230 183h1v1h-1zM230 188h1v1h-1zM230 193h1v1h-1zM230 197h1v1h-1zM230 202h1v1h-1zM230 206h1v1h-1zM230 211h1v1h-1zM230 216h1v1h-1zM230 220h1v1h-1zM230 225h1v1h-1zM230 230h1v1h-1zM230 234h1v1h-1zM230 239h1v1h-1zM230 244h1v1h-1zM230 248h1v1h-1zM230 253h1v1h-1zM230 258h1v1h-1zM230 262h1v1h-1zM230 267h1v1h-1zM230 271h1v1h-1zM230 276h1v1h-1zM230 281h1v1h-1zM230 285h1v1h-1zM230 292h1v1h-1zM230 297h1v1h-1zM230 301h1v1h-1zM230 306h1v1h-1zM230 311h1v1h-1zM230 315h1v1h-1zM230 320h1v1h-1zM230 324h1v1h-1zM230 329h1v1h-1zM230 334h1v1h-1zM230 338h1v1h-1zM230 343h1v1h-1zM230 348h1v1h-1zM230 352h1v1h-1zM230 357h1v1h-1zM230 362h1v1h-1zM230 366h1v1h-1zM230 371h1v1h-1zM230 376h1v1h-1zM230 380h1v1h-1zM230 385h1v1h-1zM230 389h1v1h-1zM230 394h1v1h-1zM230 399h1v1h-1zM230 403h1v1h-1zM230 408h1v1h-1zM230 413h1v1h-1zM230 417h1v1h-1zM230 422h1v1h-1zM230 427h1v1h-1zM230 431h1v1h-1zM230 436h1v1h-1zM230 440h1v1h-1zM230 445h1v1h-1zM230 450h1v1h-1zM230 454h1v1h-1zM230 459h1v1h-1zM230 464h1v1h-1zM230 468h1v1h-1zM230 473h1v1h-1zM230 478h1v1h-1zM230 482h1v1h-1zM230 487h1v1h-1zM230 492h1v1h-1zM230 496h1v1h-1zM230 501h1v1h-1zM230 505h1v1h-1zM230 510h1v1h-1zM230 515h1v1h-1zM230 519h1v1h-1zM230 526h1v1h-1zM230 531h1v1h-1zM230 535h1v1h-1zM230 540h1v1h-1zM230 545h1v1h-1zM230 549h1v1h-1zM230 554h1v1h-1zM230 558h1v1h-1zM230 563h1v1h-1zM230 568h1v1h-1zM230 572h1v1h-1zM230 577h1v1h-1zM230 582h1v1h-1zM230 586h1v1h-1zM230 591h1v1h-1zM230 596h1v1h-1zM230 600h1v1h-1zM230 605h1v1h-1zM230 610h1v1h-1zM230 614h1v1h-1zM230 619h1v1h-1zM230 623h1v1h-1zM230 628h1v1h-1zM230 633h1v1h-1zM230 637h1v1h-1zM230 642h1v1h-1zM230 647h1v1h-1zM230 651h1v1h-1zM230 656h1v1h-1zM230 661h1v1h-1zM230 665h1v1h-1zM230 670h1v1h-1zM230 674h1v1h-1zM230 679h1v1h-1zM230 684h1v1h-1zM230 688h1v1h-1zM230 693h1v1h-1zM230 698h1v1h-1zM230 702h1v1h-1zM230 707h1v1h-1zM230 712h1v1h-1zM230 716h1v1h-1zM230 721h1v1h-1zM230 726h1v1h-1zM230 730h1v1h-1zM230 735h1v1h-1zM230 739h1v1h-1zM230 744h1v1h-1zM230 749h1v1h-1zM230 753h1v1h-1zM230 760h1v1h-1zM230 765h1v1h-1zM230 769h1v1h-1zM230 774h1v1h-1zM230 779h1v1h-1zM230 783h1v1h-1zM230 788h1v1h-1zM230 792h1v1h-1zM230 797h1v1h-1zM230 802h1v1h-1zM230 806h1v1h-1zM230 811h1v1h-1zM230 816h1v1h-1zM230 820h1v1h-1zM230 825h1v1h-1zM230 830h1v1h-1zM230 834h1v1h-1zM230 839h1v1h-1zM230 844h1v1h-1zM230 848h1v1h-1zM230 853h1v1h-1zM230 857h1v1h-1zM230 862h1v1h-1zM230 867h1v1h-1zM230 871h1v1h-1zM230 876h1v1h-1zM230 881h1v1h-1zM230 885h1v1h-1zM230 890h1v1h-1zM230 895h1v1h-1zM230 899h1v1h-1zM230 904h1v1h-1zM230 908h1v1h-1zM230 913h1v1h-1zM230 918h1v1h-1zM230 922h1v1h-1zM230 927h1v1h-1zM230 932h1v1h-1zM230 936h1v1h-1zM230 941h1v1h-1zM230 946h1v1h-1zM230 950h1v1h-1zM230 955h1v1h-1zM230 960h1v1h-1zM230 964h1v1h-1zM230 969h1v1h-1zM230 973h1v1h-1zM230 978h1v1h-1zM230 983h1v1h-1zM230 987h1v1h-1zM230 992h1v1h-1zM405 58h1v1h-1zM405 63h1v1h-1zM405 67h1v1h-1zM405 72h1v1h-1zM405 77h1v1h-1zM405 81h1v1h-1zM405 86h1v1h-1zM405 90h1v1h-1zM405 95h1v1h-1zM405 100h1v1h-1zM405 104h1v1h-1zM405 109h1v1h-1zM405 114h1v1h-1zM405 118h1v1h-1zM405 123h1v1h-1zM405 128h1v1h-1zM405 132h1v1h-1zM405 137h1v1h-1zM405 142h1v1h-1zM405 146h1v1h-1zM405 151h1v1h-1zM405 155h1v1h-1zM405 160h1v1h-1zM405 165h1v1h-1zM405 169h1v1h-1zM405 174h1v1h-1zM405 179h1v1h-1zM405 183h1v1h-1zM405 188h1v1h-1zM405 193h1v1h-1zM405 197h1v1h-1zM405 202h1v1h-1zM405 206h1v1h-1zM405 211h1v1h-1zM405 216h1v1h-1zM405 220h1v1h-1zM405 225h1v1h-1zM405 230h1v1h-1zM405 234h1v1h-1zM405 239h1v1h-1zM405 244h1v1h-1zM405 248h1v1h-1zM405 253h1v1h-1zM405 258h1v1h-1zM405 262h1v1h-1zM405 267h1v1h-1zM405 271h1v1h-1zM405 276h1v1h-1zM405 281h1v1h-1zM405 285h1v1h-1zM405 292h1v1h-1zM405 297h1v1h-1zM405 301h1v1h-1zM405 306h1v1h-1zM405 311h1v1h-1zM405 315h1v1h-1zM405 320h1v1h-1zM405 324h1v1h-1zM405 329h1v1h-1zM405 334h1v1h-1zM405 338h1v1h-1zM405 343h1v1h-1zM405 348h1v1h-1zM405 352h1v1h-1zM405 357h1v1h-1zM405 362h1v1h-1zM405 366h1v1h-1zM405 371h1v1h-1zM405 376h1v1h-1zM405 380h1v1h-1zM405 385h1v1h-1zM405 389h1v1h-1zM405 394h1v1h-1zM405 399h1v1h-1zM405 403h1v1h-1zM405 408h1v1h-1zM405 413h1v1h-1zM405 417h1v1h-1zM405 422h1v1h-1zM405 427h1v1h-1zM405 431h1v1h-1zM405 436h1v1h-1zM405 440h1v1h-1zM405 445h1v1h-1zM405 450h1v1h-1zM405 454h1v1h-1zM405 459h1v1h-1zM405 464h1v1h-1zM405 468h1v1h-1zM405 473h1v1h-1zM405 478h1v1h-1zM405 482h1v1h-1zM405 487h1v1h-1zM405 492h1v1h-1zM405 496h1v1h-1zM405 501h1v1h-1zM405 505h1v1h-1zM405 510h1v1h-1zM405 515h1v1h-1zM405 519h1v1h-1zM405 526h1v1h-1zM405 531h1v1h-1zM405 535h1v1h-1zM405 540h1v1h-1zM405 545h1v1h-1zM405 549h1v1h-1zM405 554h1v1h-1zM405 558h1v1h-1zM405 563h1v1h-1zM405 568h1v1h-1zM405 572h1v1h-1zM405 577h1v1h-1zM405 582h1v1h-1zM405 586h1v1h-1zM405 591h1v1h-1zM405 596h1v1h-1zM405 600h1v1h-1zM405 605h1v1h-1zM405 610h1v1h-1zM405 614h1v1h-1zM405 619h1v1h-1zM405 623h1v1h-1zM405 628h1v1h-1zM405 633h1v1h-1zM405 637h1v1h-1zM405 642h1v1h-1zM405 647h1v1h-1zM405 651h1v1h-1zM405 656h1v1h-1zM405 661h1v1h-1zM405 665h1v1h-1zM405 670h1v1h-1zM405 674h1v1h-1zM405 679h1v1h-1zM405 684h1v1h-1zM405 688h1v1h-1zM405 693h1v1h-1zM405 698h1v1h-1zM405 702h1v1h-1zM405 707h1v1h-1zM405 712h1v1h-1zM405 716h1v1h-1zM405 721h1v1h-1zM405 726h1v1h-1zM405 730h1v1h-1zM405 735h1v1h-1zM405 739h1v1h-1zM405 744h1v1h-1zM405 749h1v1h-1zM405 753h1v1h-1zM405 760h1v1h-1zM405 765h1v1h-1zM405 769h1v1h-1zM405 774h1v1h-1zM405 779h1v1h-1zM405 783h1v1h-1zM405 788h1v1h-1zM405 792h1v1h-1zM405 797h1v1h-1zM405 802h1v1h-1zM405 806h1v1h-1zM405 811h1v1h-1zM405 816h1v1h-1zM405 820h1v1h-1zM405 825h1v1h-1zM405 830h1v1h-1zM405 834h1v1h-1zM405 839h1v1h-1zM405 844h1v1h-1zM405 848h1v1h-1zM405 853h1v1h-1zM405 857h1v1h-1zM405 862h1v1h-1zM405 867h1v1h-1zM405 871h1v1h-1zM405 876h1v1h-1zM405 881h1v1h-1zM405 885h1v1h-1zM405 890h1v1h-1zM405 895h1v1h-1zM405 899h1v1h-1zM405 904h1v1h-1zM405 908h1v1h-1zM405 913h1v1h-1zM405 918h1v1h-1zM405 922h1v1h-1zM405 927h1v1h-1zM405 932h1v1h-1zM405 936h1v1h-1zM405 941h1v1h-1zM405 946h1v1h-1zM405 950h1v1h-1zM405 955h1v1h-1zM405 960h1v1h-1zM405 964h1v1h-1zM405 969h1v1h-1zM405 973h1v1h-1zM405 978h1v1h-1zM405 983h1v1h-1zM405 987h1v1h-1zM405 992h1v1h-1zM580 58h1v1h-1zM580 63h1v1h-1zM580 67h1v1h-1zM580 72h1v1h-1zM580 77h1v1h-1zM580 81h1v1h-1zM580 86h1v1h-1zM580 90h1v1h-1zM580 95h1v1h-1zM580 100h1v1h-1zM580 104h1v1h-1zM580 109h1v1h-1zM580 114h1v1h-1zM580 118h1v1h-1zM580 123h1v1h-1zM580 128h1v1h-1zM580 132h1v1h-1zM580 137h1v1h-1zM580 142h1v1h-1zM580 146h1v1h-1zM580 151h1v1h-1zM580 155h1v1h-1zM580 160h1v1h-1zM580 165h1v1h-1zM580 169h1v1h-1zM580 174h1v1h-1zM580 179h1v1h-1zM580 183h1v1h-1zM580 188h1v1h-1zM580 193h1v1h-1zM580 197h1v1h-1zM580 202h1v1h-1zM580 206h1v1h-1zM580 211h1v1h-1zM580 216h1v1h-1zM580 220h1v1h-1zM580 225h1v1h-1zM580 230h1v1h-1zM580 234h1v1h-1zM580 239h1v1h-1zM580 244h1v1h-1zM580 248h1v1h-1zM580 253h1v1h-1zM580 258h1v1h-1zM580 262h1v1h-1zM580 267h1v1h-1zM580 271h1v1h-1zM580 276h1v1h-1zM580 281h1v1h-1zM580 285h1v1h-1zM580 292h1v1h-1zM580 297h1v1h-1zM580 301h1v1h-1zM580 306h1v1h-1zM580 311h1v1h-1zM580 315h1v1h-1zM580 320h1v1h-1zM580 324h1v1h-1zM580 329h1v1h-1zM580 334h1v1h-1zM580 338h1v1h-1zM580 343h1v1h-1zM580 348h1v1h-1zM580 352h1v1h-1zM580 357h1v1h-1zM580 362h1v1h-1zM580 366h1v1h-1zM580 371h1v1h-1zM580 376h1v1h-1zM580 380h1v1h-1zM580 385h1v1h-1zM580 389h1v1h-1zM580 394h1v1h-1zM580 399h1v1h-1zM580 403h1v1h-1zM580 408h1v1h-1zM580 413h1v1h-1zM580 417h1v1h-1zM580 422h1v1h-1zM580 427h1v1h-1zM580 431h1v1h-1zM580 436h1v1h-1zM580 440h1v1h-1zM580 445h1v1h-1zM580 450h1v1h-1zM580 454h1v1h-1zM580 459h1v1h-1zM580 464h1v1h-1zM580 468h1v1h-1zM580 473h1v1h-1zM580 478h1v1h-1zM580 482h1v1h-1zM580 487h1v1h-1zM580 492h1v1h-1zM580 496h1v1h-1zM580 501h1v1h-1zM580 505h1v1h-1zM580 510h1v1h-1zM580 515h1v1h-1zM580 519h1v1h-1zM580 526h1v1h-1zM580 531h1v1h-1zM580 535h1v1h-1zM580 540h1v1h-1zM580 545h1v1h-1zM580 549h1v1h-1zM580 554h1v1h-1zM580 558h1v1h-1zM580 563h1v1h-1zM580 568h1v1h-1zM580 572h1v1h-1zM580 577h1v1h-1zM580 582h1v1h-1zM580 586h1v1h-1zM580 591h1v1h-1zM580 596h1v1h-1zM580 600h1v1h-1zM580 605h1v1h-1zM580 610h1v1h-1zM580 614h1v1h-1zM580 619h1v1h-1zM580 623h1v1h-1zM580 628h1v1h-1zM580 633h1v1h-1zM580 637h1v1h-1zM580 642h1v1h-1zM580 647h1v1h-1zM580 651h1v1h-1zM580 656h1v1h-1zM580 661h1v1h-1zM580 665h1v1h-1zM580 670h1v1h-1zM580 674h1v1h-1zM580 679h1v1h-1zM580 684h1v1h-1zM580 688h1v1h-1zM580 693h1v1h-1zM580 698h1v1h-1zM580 702h1v1h-1zM580 707h1v1h-1zM580 712h1v1h-1zM580 716h1v1h-1zM580 721h1v1h-1zM580 726h1v1h-1zM580 730h1v1h-1zM580 735h1v1h-1zM580 739h1v1h-1zM580 744h1v1h-1zM580 749h1v1h-1zM580 753h1v1h-1zM580 760h1v1h-1zM580 765h1v1h-1zM580 769h1v1h-1zM580 774h1v1h-1zM580 779h1v1h-1zM580 783h1v1h-1zM580 788h1v1h-1zM580 792h1v1h-1zM580 797h1v1h-1zM580 802h1v1h-1zM580 806h1v1h-1zM580 811h1v1h-1zM580 816h1v1h-1zM580 820h1v1h-1zM580 825h1v1h-1zM580 830h1v1h-1zM580 834h1v1h-1zM580 839h1v1h-1zM580 844h1v1h-1zM580 848h1v1h-1zM580 853h1v1h-1zM580 857h1v1h-1zM580 862h1v1h-1zM580 867h1v1h-1zM580 871h1v1h-1zM580 876h1v1h-1zM580 881h1v1h-1zM580 885h1v1h-1zM580 890h1v1h-1zM580 895h1v1h-1zM580 899h1v1h-1zM580 904h1v1h-1zM580 908h1v1h-1zM580 913h1v1h-1zM580 918h1v1h-1zM580 922h1v1h-1zM580 927h1v1h-1zM580 932h1v1h-1zM580 936h1v1h-1zM580 941h1v1h-1zM580 946h1v1h-1zM580 950h1v1h-1zM580 955h1v1h-1zM580 960h1v1h-1zM580 964h1v1h-1zM580 969h1v1h-1zM580 973h1v1h-1zM580 978h1v1h-1zM580 983h1v1h-1zM580 987h1v1h-1zM580 992h1v1h-1zM755 58h1v1h-1zM755 63h1v1h-1zM755 67h1v1h-1zM755 72h1v1h-1zM755 77h1v1h-1zM755 81h1v1h-1zM755 86h1v1h-1zM755 90h1v1h-1zM755 95h1v1h-1zM755 100h1v1h-1zM755 104h1v1h-1zM755 109h1v1h-1zM755 114h1v1h-1zM755 118h1v1h-1zM755 123h1v1h-1zM755 128h1v1h-1zM755 132h1v1h-1zM755 137h1v1h-1zM755 142h1v1h-1zM755 146h1v1h-1zM755 151h1v1h-1zM755 155h1v1h-1zM755 160h1v1h-1zM755 165h1v1h-1zM755 169h1v1h-1zM755 174h1v1h-1zM755 179h1v1h-1zM755 183h1v1h-1zM755 188h1v1h-1zM755 193h1v1h-1zM755 197h1v1h-1zM755 202h1v1h-1zM755 206h1v1h-1zM755 211h1v1h-1zM755 216h1v1h-1zM755 220h1v1h-1zM755 225h1v1h-1zM755 230h1v1h-1zM755 234h1v1h-1zM755 239h1v1h-1zM755 244h1v1h-1zM755 248h1v1h-1zM755 253h1v1h-1zM755 258h1v1h-1zM755 262h1v1h-1zM755 267h1v1h-1zM755 271h1v1h-1zM755 276h1v1h-1zM755 281h1v1h-1zM755 285h1v1h-1zM755 292h1v1h-1zM755 297h1v1h-1zM755 301h1v1h-1zM755 306h1v1h-1zM755 311h1v1h-1zM755 315h1v1h-1zM755 320h1v1h-1zM755 324h1v1h-1zM755 329h1v1h-1zM755 334h1v1h-1zM755 338h1v1h-1zM755 343h1v1h-1zM755 348h1v1h-1zM755 352h1v1h-1zM755 357h1v1h-1zM755 362h1v1h-1zM755 366h1v1h-1zM755 371h1v1h-1zM755 376h1v1h-1zM755 380h1v1h-1zM755 385h1v1h-1zM755 389h1v1h-1zM755 394h1v1h-1zM755 399h1v1h-1zM755 403h1v1h-1zM755 408h1v1h-1zM755 413h1v1h-1zM755 417h1v1h-1zM755 422h1v1h-1zM755 427h1v1h-1zM755 431h1v1h-1zM755 436h1v1h-1zM755 440h1v1h-1zM755 445h1v1h-1zM755 450h1v1h-1zM755 454h1v1h-1zM755 459h1v1h-1zM755 464h1v1h-1zM755 468h1v1h-1zM755 473h1v1h-1zM755 478h1v1h-1zM755 482h1v1h-1zM755 487h1v1h-1zM755 492h1v1h-1zM755 496h1v1h-1zM755 501h1v1h-1zM755 505h1v1h-1zM755 510h1v1h-1zM755 515h1v1h-1zM755 519h1v1h-1zM755 526h1v1h-1zM755 531h1v1h-1zM755 535h1v1h-1zM755 540h1v1h-1zM755 545h1v1h-1zM755 549h1v1h-1zM755 554h1v1h-1zM755 558h1v1h-1zM755 563h1v1h-1zM755 568h1v1h-1zM755 572h1v1h-1zM755 577h1v1h-1zM755 582h1v1h-1zM755 586h1v1h-1zM755 591h1v1h-1zM755 596h1v1h-1zM755 600h1v1h-1zM755 605h1v1h-1zM755 610h1v1h-1zM755 614h1v1h-1zM755 619h1v1h-1zM755 623h1v1h-1zM755 628h1v1h-1zM755 633h1v1h-1zM755 637h1v1h-1zM755 642h1v1h-1zM755 647h1v1h-1zM755 651h1v1h-1zM755 656h1v1h-1zM755 661h1v1h-1zM755 665h1v1h-1zM755 670h1v1h-1zM755 674h1v1h-1zM755 679h1v1h-1zM755 684h1v1h-1zM755 688h1v1h-1zM755 693h1v1h-1zM755 698h1v1h-1zM755 702h1v1h-1zM755 707h1v1h-1zM755 712h1v1h-1zM755 716h1v1h-1zM755 721h1v1h-1zM755 726h1v1h-1zM755 730h1v1h-1zM755 735h1v1h-1zM755 739h1v1h-1zM755 744h1v1h-1zM755 749h1v1h-1zM755 753h1v1h-1zM755 760h1v1h-1zM755 765h1v1h-1zM755 769h1v1h-1zM755 774h1v1h-1zM755 779h1v1h-1zM755 783h1v1h-1zM755 788h1v1h-1zM755 792h1v1h-1zM755 797h1v1h-1zM755 802h1v1h-1zM755 806h1v1h-1zM755 811h1v1h-1zM755 816h1v1h-1zM755 820h1v1h-1zM755 825h1v1h-1zM755 830h1v1h-1zM755 834h1v1h-1zM755 839h1v1h-1zM755 844h1v1h-1zM755 848h1v1h-1zM755 853h1v1h-1zM755 857h1v1h-1zM755 862h1v1h-1zM755 867h1v1h-1zM755 871h1v1h-1zM755 876h1v1h-1zM755 881h1v1h-1zM755 885h1v1h-1zM755 890h1v1h-1zM755 895h1v1h-1zM755 899h1v1h-1zM755 904h1v1h-1zM755 908h1v1h-1zM755 913h1v1h-1zM755 918h1v1h-1zM755 922h1v1h-1zM755 927h1v1h-1zM755 932h1v1h-1zM755 936h1v1h-1zM755 941h1v1h-1zM755 946h1v1h-1zM755 950h1v1h-1zM755 955h1v1h-1zM755 960h1v1h-1zM755 964h1v1h-1zM755 969h1v1h-1zM755 973h1v1h-1zM755 978h1v1h-1zM755 983h1v1h-1zM755 987h1v1h-1zM755 992h1v1h-1zM929 58h1v1h-1zM929 63h1v1h-1zM929 67h1v1h-1zM929 72h1v1h-1zM929 77h1v1h-1zM929 81h1v1h-1zM929 86h1v1h-1zM929 90h1v1h-1zM929 95h1v1h-1zM929 100h1v1h-1zM929 104h1v1h-1zM929 109h1v1h-1zM929 114h1v1h-1zM929 118h1v1h-1zM929 123h1v1h-1zM929 128h1v1h-1zM929 132h1v1h-1zM929 137h1v1h-1zM929 142h1v1h-1zM929 146h1v1h-1zM929 151h1v1h-1zM929 155h1v1h-1zM929 160h1v1h-1zM929 165h1v1h-1zM929 169h1v1h-1zM929 174h1v1h-1zM929 179h1v1h-1zM929 183h1v1h-1zM929 188h1v1h-1zM929 193h1v1h-1zM929 197h1v1h-1zM929 202h1v1h-1zM929 206h1v1h-1zM929 211h1v1h-1zM929 216h1v1h-1zM929 220h1v1h-1zM929 225h1v1h-1zM929 230h1v1h-1zM929 234h1v1h-1zM929 239h1v1h-1zM929 244h1v1h-1zM929 248h1v1h-1zM929 253h1v1h-1zM929 258h1v1h-1zM929 262h1v1h-1zM929 267h1v1h-1zM929 271h1v1h-1zM929 276h1v1h-1zM929 281h1v1h-1zM929 285h1v1h-1zM929 292h1v1h-1zM929 297h1v1h-1zM929 301h1v1h-1zM929 306h1v1h-1zM929 311h1v1h-1zM929 315h1v1h-1zM929 320h1v1h-1zM929 324h1v1h-1zM929 329h1v1h-1zM929 334h1v1h-1zM929 338h1v1h-1zM929 343h1v1h-1zM929 348h1v1h-1zM929 352h1v1h-1zM929 357h1v1h-1zM929 362h1v1h-1zM929 366h1v1h-1zM929 371h1v1h-1zM929 376h1v1h-1zM929 380h1v1h-1zM929 385h1v1h-1zM929 389h1v1h-1zM929 394h1v1h-1zM929 399h1v1h-1zM929 403h1v1h-1zM929 408h1v1h-1zM929 413h1v1h-1zM929 417h1v1h-1zM929 422h1v1h-1zM929 427h1v1h-1zM929 431h1v1h-1zM929 436h1v1h-1zM929 440h1v1h-1zM929 445h1v1h-1zM929 450h1v1h-1zM929 454h1v1h-1zM929 459h1v1h-1zM929 464h1v1h-1zM929 468h1v1h-1zM929 473h1v1h-1zM929 478h1v1h-1zM929 482h1v1h-1zM929 487h1v1h-1zM929 492h1v1h-1zM929 496h1v1h-1zM929 501h1v1h-1zM929 505h1v1h-1zM929 510h1v1h-1zM929 515h1v1h-1zM929 519h1v1h-1zM929 526h1v1h-1zM929 531h1v1h-1zM929 535h1v1h-1zM929 540h1v1h-1zM929 545h1v1h-1zM929 549h1v1h-1zM929 554h1v1h-1zM929 558h1v1h-1zM929 563h1v1h-1zM929 568h1v1h-1zM929 572h1v1h-1zM929 577h1v1h-1zM929 582h1v1h-1zM929 586h1v1h-1zM929 591h1v1h-1zM929 596h1v1h-1zM929 600h1v1h-1zM929 605h1v1h-1zM929 610h1v1h-1zM929 614h1v1h-1zM929 619h1v1h-1zM929 623h1v1h-1zM929 628h1v1h-1zM929 633h1v1h-1zM929 637h1v1h-1zM929 642h1v1h-1zM929 647h1v1h-1zM929 651h1v1h-1zM929 656h1v1h-1zM929 661h1v1h-1zM929 665h1v1h-1zM929 670h1v1h-1zM929 674h1v1h-1zM929 679h1v1h-1zM929 684h1v1h-1zM929 688h1v1h-1zM929 693h1v1h-1zM929 698h1v1h-1zM929 702h1v1h-1zM929 707h1v1h-1zM929 712h1v1h-1zM929 716h1v1h-1zM929 721h1v1h-1zM929 726h1v1h-1zM929 730h1v1h-1zM929 735h1v1h-1zM929 739h1v1h-1zM929 744h1v1h-1zM929 749h1v1h-1zM929 753h1v1h-1zM929 760h1v1h-1zM929 765h1v1h-1zM929 769h1v1h-1zM929 774h1v1h-1zM929 779h1v1h-1zM929 783h1v1h-1zM929 788h1v1h-1zM929 792h1v1h-1zM929 797h1v1h-1zM929 802h1v1h-1zM929 806h1v1h-1zM929 811h1v1h-1zM929 816h1v1h-1zM929 820h1v1h-1zM929 825h1v1h-1zM929 830h1v1h-1zM929 834h1v1h-1zM929 839h1v1h-1zM929 844h1v1h-1zM929 848h1v1h-1zM929 853h1v1h-1zM929 857h1v1h-1zM929 862h1v1h-1zM929 867h1v1h-1zM929 871h1v1h-1zM929 876h1v1h-1zM929 881h1v1h-1zM929 885h1v1h-1zM929 890h1v1h-1zM929 895h1v1h-1zM929 899h1v1h-1zM929 904h1v1h-1zM929 908h1v1h-1zM929 913h1v1h-1zM929 918h1v1h-1zM929 922h1v1h-1zM929 927h1v1h-1zM929 932h1v1h-1zM929 936h1v1h-1zM929 941h1v1h-1zM929 946h1v1h-1zM929 950h1v1h-1zM929 955h1v1h-1zM929 960h1v1h-1zM929 964h1v1h-1zM929 969h1v1h-1zM929 973h1v1h-1zM929 978h1v1h-1zM929 983h1v1h-1zM929 987h1v1h-1zM929 992h1v1h-1zM1104 58h1v1h-1zM1104 63h1v1h-1zM1104 67h1v1h-1zM1104 72h1v1h-1zM1104 77h1v1h-1zM1104 81h1v1h-1zM1104 86h1v1h-1zM1104 90h1v1h-1zM1104 95h1v1h-1zM1104 100h1v1h-1zM1104 104h1v1h-1zM1104 109h1v1h-1zM1104 114h1v1h-1zM1104 118h1v1h-1zM1104 123h1v1h-1zM1104 128h1v1h-1zM1104 132h1v1h-1zM1104 137h1v1h-1zM1104 142h1v1h-1zM1104 146h1v1h-1zM1104 151h1v1h-1zM1104 155h1v1h-1zM1104 160h1v1h-1zM1104 165h1v1h-1zM1104 169h1v1h-1zM1104 174h1v1h-1zM1104 179h1v1h-1zM1104 183h1v1h-1zM1104 188h1v1h-1zM1104 193h1v1h-1zM1104 197h1v1h-1zM1104 202h1v1h-1zM1104 206h1v1h-1zM1104 211h1v1h-1zM1104 216h1v1h-1zM1104 220h1v1h-1zM1104 225h1v1h-1zM1104 230h1v1h-1zM1104 234h1v1h-1zM1104 239h1v1h-1zM1104 244h1v1h-1zM1104 248h1v1h-1zM1104 253h1v1h-1zM1104 258h1v1h-1zM1104 262h1v1h-1zM1104 267h1v1h-1zM1104 271h1v1h-1zM1104 276h1v1h-1zM1104 281h1v1h-1zM1104 285h1v1h-1zM1104 292h1v1h-1zM1104 297h1v1h-1zM1104 301h1v1h-1zM1104 306h1v1h-1zM1104 311h1v1h-1zM1104 315h1v1h-1zM1104 320h1v1h-1zM1104 324h1v1h-1zM1104 329h1v1h-1zM1104 334h1v1h-1zM1104 338h1v1h-1zM1104 343h1v1h-1zM1104 348h1v1h-1zM1104 352h1v1h-1zM1104 357h1v1h-1zM1104 362h1v1h-1zM1104 366h1v1h-1zM1104 371h1v1h-1zM1104 376h1v1h-1zM1104 380h1v1h-1zM1104 385h1v1h-1zM1104 389h1v1h-1zM1104 394h1v1h-1zM1104 399h1v1h-1zM1104 403h1v1h-1zM1104 408h1v1h-1zM1104 413h1v1h-1zM1104 417h1v1h-1zM1104 422h1v1h-1zM1104 427h1v1h-1zM1104 431h1v1h-1zM1104 436h1v1h-1zM1104 440h1v1h-1zM1104 445h1v1h-1zM1104 450h1v1h-1zM1104 454h1v1h-1zM1104 459h1v1h-1zM1104 464h1v1h-1zM1104 468h1v1h-1zM1104 473h1v1h-1zM1104 478h1v1h-1zM1104 482h1v1h-1zM1104 487h1v1h-1zM1104 492h1v1h-1zM1104 496h1v1h-1zM1104 501h1v1h-1zM1104 505h1v1h-1zM1104 510h1v1h-1zM1104 515h1v1h-1zM1104 519h1v1h-1zM1104 526h1v1h-1zM1104 531h1v1h-1zM1104 535h1v1h-1zM1104 540h1v1h-1zM1104 545h1v1h-1zM1104 549h1v1h-1zM1104 554h1v1h-1zM1104 558h1v1h-1zM1104 563h1v1h-1zM1104 568h1v1h-1zM1104 572h1v1h-1zM1104 577h1v1h-1zM1104 582h1v1h-1zM1104 586h1v1h-1zM1104 591h1v1h-1zM1104 596h1v1h-1zM1104 600h1v1h-1zM1104 605h1v1h-1zM1104 610h1v1h-1zM1104 614h1v1h-1zM1104 619h1v1h-1zM1104 623h1v1h-1zM1104 628h1v1h-1zM1104 633h1v1h-1zM1104 637h1v1h-1zM1104 642h1v1h-1zM1104 647h1v1h-1zM1104 651h1v1h-1zM1104 656h1v1h-1zM1104 661h1v1h-1zM1104 665h1v1h-1zM1104 670h1v1h-1zM1104 674h1v1h-1zM1104 679h1v1h-1zM1104 684h1v1h-1zM1104 688h1v1h-1zM1104 693h1v1h-1zM1104 698h1v1h-1zM1104 702h1v1h-1zM1104 707h1v1h-1zM1104 712h1v1h-1zM1104 716h1v1h-1zM1104 721h1v1h-1zM1104 726h1v1h-1zM1104 730h1v1h-1zM1104 735h1v1h-1zM1104 739h1v1h-1zM1104 744h1v1h-1zM1104 749h1v1h-1zM1104 753h1v1h-1zM1104 760h1v1h-1zM1104 765h1v1h-1zM1104 769h1v1h-1zM1104 774h1v1h-1zM1104 779h1v1h-1zM1104 783h1v1h-1zM1104 788h1v1h-1zM1104 792h1v1h-1zM1104 797h1v1h-1zM1104 802h1v1h-1zM1104 806h1v1h-1zM1104 811h1v1h-1zM1104 816h1v1h-1zM1104 820h1v1h-1zM1104 825h1v1h-1zM1104 830h1v1h-1zM1104 834h1v1h-1zM1104 839h1v1h-1zM1104 844h1v1h-1zM1104 848h1v1h-1zM1104 853h1v1h-1zM1104 857h1v1h-1zM1104 862h1v1h-1zM1104 867h1v1h-1zM1104 871h1v1h-1zM1104 876h1v1h-1zM1104 881h1v1h-1zM1104 885h1v1h-1zM1104 890h1v1h-1zM1104 895h1v1h-1zM1104 899h1v1h-1zM1104 904h1v1h-1zM1104 908h1v1h-1zM1104 913h1v1h-1zM1104 918h1v1h-1zM1104 922h1v1h-1zM1104 927h1v1h-1zM1104 932h1v1h-1zM1104 936h1v1h-1zM1104 941h1v1h-1zM1104 946h1v1h-1zM1104 950h1v1h-1zM1104 955h1v1h-1zM1104 960h1v1h-1zM1104 964h1v1h-1zM1104 969h1v1h-1zM1104 973h1v1h-1zM1104 978h1v1h-1zM1104 983h1v1h-1zM1104 987h1v1h-1zM1104 992h1v1h-1zM1279 58h1v1h-1zM1279 63h1v1h-1zM1279 67h1v1h-1zM1279 72h1v1h-1zM1279 77h1v1h-1zM1279 81h1v1h-1zM1279 86h1v1h-1zM1279 90h1v1h-1zM1279 95h1v1h-1zM1279 100h1v1h-1zM1279 104h1v1h-1zM1279 109h1v1h-1zM1279 114h1v1h-1zM1279 118h1v1h-1zM1279 123h1v1h-1zM1279 128h1v1h-1zM1279 132h1v1h-1zM1279 137h1v1h-1zM1279 142h1v1h-1zM1279 146h1v1h-1zM1279 151h1v1h-1zM1279 155h1v1h-1zM1279 160h1v1h-1zM1279 165h1v1h-1zM1279 169h1v1h-1zM1279 174h1v1h-1zM1279 179h1v1h-1zM1279 183h1v1h-1zM1279 188h1v1h-1zM1279 193h1v1h-1zM1279 197h1v1h-1zM1279 202h1v1h-1zM1279 206h1v1h-1zM1279 211h1v1h-1zM1279 216h1v1h-1zM1279 220h1v1h-1zM1279 225h1v1h-1zM1279 230h1v1h-1zM1279 234h1v1h-1zM1279 239h1v1h-1zM1279 244h1v1h-1zM1279 248h1v1h-1zM1279 253h1v1h-1zM1279 258h1v1h-1zM1279 262h1v1h-1zM1279 267h1v1h-1zM1279 271h1v1h-1zM1279 276h1v1h-1zM1279 281h1v1h-1zM1279 285h1v1h-1zM1279 292h1v1h-1zM1279 297h1v1h-1zM1279 301h1v1h-1zM1279 306h1v1h-1zM1279 311h1v1h-1zM1279 315h1v1h-1zM1279 320h1v1h-1zM1279 324h1v1h-1zM1279 329h1v1h-1zM1279 334h1v1h-1zM1279 338h1v1h-1zM1279 343h1v1h-1zM1279 348h1v1h-1zM1279 352h1v1h-1zM1279 357h1v1h-1zM1279 362h1v1h-1zM1279 366h1v1h-1zM1279 371h1v1h-1zM1279 376h1v1h-1zM1279 380h1v1h-1zM1279 385h1v1h-1zM1279 389h1v1h-1zM1279 394h1v1h-1zM1279 399h1v1h-1zM1279 403h1v1h-1zM1279 408h1v1h-1zM1279 413h1v1h-1zM1279 417h1v1h-1zM1279 422h1v1h-1zM1279 427h1v1h-1zM1279 431h1v1h-1zM1279 436h1v1h-1zM1279 440h1v1h-1zM1279 445h1v1h-1zM1279 450h1v1h-1zM1279 454h1v1h-1zM1279 459h1v1h-1zM1279 464h1v1h-1zM1279 468h1v1h-1zM1279 473h1v1h-1zM1279 478h1v1h-1zM1279 482h1v1h-1zM1279 487h1v1h-1zM1279 492h1v1h-1zM1279 496h1v1h-1zM1279 501h1v1h-1zM1279 505h1v1h-1zM1279 510h1v1h-1zM1279 515h1v1h-1zM1279 519h1v1h-1zM1279 526h1v1h-1zM1279 531h1v1h-1zM1279 535h1v1h-1zM1279 540h1v1h-1zM1279 545h1v1h-1zM1279 549h1v1h-1zM1279 554h1v1h-1zM1279 558h1v1h-1zM1279 563h1v1h-1zM1279 568h1v1h-1zM1279 572h1v1h-1zM1279 577h1v1h-1zM1279 582h1v1h-1zM1279 586h1v1h-1zM1279 591h1v1h-1zM1279 596h1v1h-1zM1279 600h1v1h-1zM1279 605h1v1h-1zM1279 610h1v1h-1zM1279 614h1v1h-1zM1279 619h1v1h-1zM1279 623h1v1h-1zM1279 628h1v1h-1zM1279 633h1v1h-1zM1279 637h1v1h-1zM1279 642h1v1h-1zM1279 647h1v1h-1zM1279 651h1v1h-1zM1279 656h1v1h-1zM1279 661h1v1h-1zM1279 665h1v1h-1zM1279 670h1v1h-1zM1279 674h1v1h-1zM1279 679h1v1h-1zM1279 684h1v1h-1zM1279 688h1v1h-1zM1279 693h1v1h-1zM1279 698h1v1h-1zM1279 702h1v1h-1zM1279 707h1v1h-1zM1279 712h1v1h-1zM1279 716h1v1h-1zM1279 721h1v1h-1zM1279 726h1v1h-1zM1279 730h1v1h-1zM1279 735h1v1h-1zM1279 739h1v1h-1zM1279 744h1v1h-1zM1279 749h1v1h-1zM1279 753h1v1h-1zM1279 760h1v1h-1zM1279 765h1v1h-1zM1279 769h1v1h-1zM1279 774h1v1h-1zM1279 779h1v1h-1zM1279 783h1v1h-1zM1279 788h1v1h-1zM1279 792h1v1h-1zM1279 797h1v1h-1zM1279 802h1v1h-1zM1279 806h1v1h-1zM1279 811h1v1h-1zM1279 816h1v1h-1zM1279 820h1v1h-1zM1279 825h1v1h-1zM1279 830h1v1h-1zM1279 834h1v1h-1zM1279 839h1v1h-1zM1279 844h1v1h-1zM1279 848h1v1h-1zM1279 853h1v1h-1zM1279 857h1v1h-1zM1279 862h1v1h-1zM1279 867h1v1h-1zM1279 871h1v1h-1zM1279 876h1v1h-1zM1279 881h1v1h-1zM1279 885h1v1h-1zM1279 890h1v1h-1zM1279 895h1v1h-1zM1279 899h1v1h-1zM1279 904h1v1h-1zM1279 908h1v1h-1zM1279 913h1v1h-1zM1279 918h1v1h-1zM1279 922h1v1h-1zM1279 927h1v1h-1zM1279 932h1v1h-1zM1279 936h1v1h-1zM1279 941h1v1h-1zM1279 946h1v1h-1zM1279 950h1v1h-1zM1279 955h1v1h-1zM1279 960h1v1h-1zM1279 964h1v1h-1zM1279 969h1v1h-1zM1279 973h1v1h-1zM1279 978h1v1h-1zM1279 983h1v1h-1zM1279 987h1v1h-1zM1279 992h1v1h-1zM1454 58h1v1h-1zM1454 63h1v1h-1zM1454 67h1v1h-1zM1454 72h1v1h-1zM1454 77h1v1h-1zM1454 81h1v1h-1zM1454 86h1v1h-1zM1454 90h1v1h-1zM1454 95h1v1h-1zM1454 100h1v1h-1zM1454 104h1v1h-1zM1454 109h1v1h-1zM1454 114h1v1h-1zM1454 118h1v1h-1zM1454 123h1v1h-1zM1454 128h1v1h-1zM1454 132h1v1h-1zM1454 137h1v1h-1zM1454 142h1v1h-1zM1454 146h1v1h-1zM1454 151h1v1h-1zM1454 155h1v1h-1zM1454 160h1v1h-1zM1454 165h1v1h-1zM1454 169h1v1h-1zM1454 174h1v1h-1zM1454 179h1v1h-1zM1454 183h1v1h-1zM1454 188h1v1h-1zM1454 193h1v1h-1zM1454 197h1v1h-1zM1454 202h1v1h-1zM1454 206h1v1h-1zM1454 211h1v1h-1zM1454 216h1v1h-1zM1454 220h1v1h-1zM1454 225h1v1h-1zM1454 230h1v1h-1zM1454 234h1v1h-1zM1454 239h1v1h-1zM1454 244h1v1h-1zM1454 248h1v1h-1zM1454 253h1v1h-1zM1454 258h1v1h-1zM1454 262h1v1h-1zM1454 267h1v1h-1zM1454 271h1v1h-1zM1454 276h1v1h-1zM1454 281h1v1h-1zM1454 285h1v1h-1zM1454 292h1v1h-1zM1454 297h1v1h-1zM1454 301h1v1h-1zM1454 306h1v1h-1zM1454 311h1v1h-1zM1454 315h1v1h-1zM1454 320h1v1h-1zM1454 324h1v1h-1zM1454 329h1v1h-1zM1454 334h1v1h-1zM1454 338h1v1h-1zM1454 343h1v1h-1zM1454 348h1v1h-1zM1454 352h1v1h-1zM1454 357h1v1h-1zM1454 362h1v1h-1zM1454 366h1v1h-1zM1454 371h1v1h-1zM1454 376h1v1h-1zM1454 380h1v1h-1zM1454 385h1v1h-1zM1454 389h1v1h-1zM1454 394h1v1h-1zM1454 399h1v1h-1zM1454 403h1v1h-1zM1454 408h1v1h-1zM1454 413h1v1h-1zM1454 417h1v1h-1zM1454 422h1v1h-1zM1454 427h1v1h-1zM1454 431h1v1h-1zM1454 436h1v1h-1zM1454 440h1v1h-1zM1454 445h1v1h-1zM1454 450h1v1h-1zM1454 454h1v1h-1zM1454 459h1v1h-1zM1454 464h1v1h-1zM1454 468h1v1h-1zM1454 473h1v1h-1zM1454 478h1v1h-1zM1454 482h1v1h-1zM1454 487h1v1h-1zM1454 492h1v1h-1zM1454 496h1v1h-1zM1454 501h1v1h-1zM1454 505h1v1h-1zM1454 510h1v1h-1zM1454 515h1v1h-1zM1454 519h1v1h-1zM1454 526h1v1h-1zM1454 531h1v1h-1zM1454 535h1v1h-1zM1454 540h1v1h-1zM1454 545h1v1h-1zM1454 549h1v1h-1zM1454 554h1v1h-1zM1454 558h1v1h-1zM1454 563h1v1h-1zM1454 568h1v1h-1zM1454 572h1v1h-1zM1454 577h1v1h-1zM1454 582h1v1h-1zM1454 586h1v1h-1zM1454 591h1v1h-1zM1454 596h1v1h-1zM1454 600h1v1h-1zM1454 605h1v1h-1zM1454 610h1v1h-1zM1454 614h1v1h-1zM1454 619h1v1h-1zM1454 623h1v1h-1zM1454 628h1v1h-1zM1454 633h1v1h-1zM1454 637h1v1h-1zM1454 642h1v1h-1zM1454 647h1v1h-1zM1454 651h1v1h-1zM1454 656h1v1h-1zM1454 661h1v1h-1zM1454 665h1v1h-1zM1454 670h1v1h-1zM1454 674h1v1h-1zM1454 679h1v1h-1zM1454 684h1v1h-1zM1454 688h1v1h-1zM1454 693h1v1h-1zM1454 698h1v1h-1zM1454 702h1v1h-1zM1454 707h1v1h-1zM1454 712h1v1h-1zM1454 716h1v1h-1zM1454 721h1v1h-1zM1454 726h1v1h-1zM1454 730h1v1h-1zM1454 735h1v1h-1zM1454 739h1v1h-1zM1454 744h1v1h-1zM1454 749h1v1h-1zM1454 753h1v1h-1zM1454 760h1v1h-1zM1454 765h1v1h-1zM1454 769h1v1h-1zM1454 774h1v1h-1zM1454 779h1v1h-1zM1454 783h1v1h-1zM1454 788h1v1h-1zM1454 792h1v1h-1zM1454 797h1v1h-1zM1454 802h1v1h-1zM1454 806h1v1h-1zM1454 811h1v1h-1zM1454 816h1v1h-1zM1454 820h1v1h-1zM1454 825h1v1h-1zM1454 830h1v1h-1zM1454 834h1v1h-1zM1454 839h1v1h-1zM1454 844h1v1h-1zM1454 848h1v1h-1zM1454 853h1v1h-1zM1454 857h1v1h-1zM1454 862h1v1h-1zM1454 867h1v1h-1zM1454 871h1v1h-1zM1454 876h1v1h-1zM1454 881h1v1h-1zM1454 885h1v1h-1zM1454 890h1v1h-1zM1454 895h1v1h-1zM1454 899h1v1h-1zM1454 904h1v1h-1zM1454 908h1v1h-1zM1454 913h1v1h-1zM1454 918h1v1h-1zM1454 922h1v1h-1zM1454 927h1v1h-1zM1454 932h1v1h-1zM1454 936h1v1h-1zM1454 941h1v1h-1zM1454 946h1v1h-1zM1454 950h1v1h-1zM1454 955h1v1h-1zM1454 960h1v1h-1zM1454 964h1v1h-1zM1454 969h1v1h-1zM1454 973h1v1h-1zM1454 978h1v1h-1zM1454 983h1v1h-1zM1454 987h1v1h-1zM1454 992h1v1h-1zM1629 58h1v1h-1zM1629 63h1v1h-1zM1629 67h1v1h-1zM1629 72h1v1h-1zM1629 77h1v1h-1zM1629 81h1v1h-1zM1629 86h1v1h-1zM1629 90h1v1h-1zM1629 95h1v1h-1zM1629 100h1v1h-1zM1629 104h1v1h-1zM1629 109h1v1h-1zM1629 114h1v1h-1zM1629 118h1v1h-1zM1629 123h1v1h-1zM1629 128h1v1h-1zM1629 132h1v1h-1zM1629 137h1v1h-1zM1629 142h1v1h-1zM1629 146h1v1h-1zM1629 151h1v1h-1zM1629 155h1v1h-1zM1629 160h1v1h-1zM1629 165h1v1h-1zM1629 169h1v1h-1zM1629 174h1v1h-1zM1629 179h1v1h-1zM1629 183h1v1h-1zM1629 188h1v1h-1zM1629 193h1v1h-1zM1629 197h1v1h-1zM1629 202h1v1h-1zM1629 206h1v1h-1zM1629 211h1v1h-1zM1629 216h1v1h-1zM1629 220h1v1h-1zM1629 225h1v1h-1zM1629 230h1v1h-1zM1629 234h1v1h-1zM1629 239h1v1h-1zM1629 244h1v1h-1zM1629 248h1v1h-1zM1629 253h1v1h-1zM1629 258h1v1h-1zM1629 262h1v1h-1zM1629 267h1v1h-1zM1629 271h1v1h-1zM1629 276h1v1h-1zM1629 281h1v1h-1zM1629 285h1v1h-1zM1629 292h1v1h-1zM1629 297h1v1h-1zM1629 301h1v1h-1zM1629 306h1v1h-1zM1629 311h1v1h-1zM1629 315h1v1h-1zM1629 320h1v1h-1zM1629 324h1v1h-1zM1629 329h1v1h-1zM1629 334h1v1h-1zM1629 338h1v1h-1zM1629 343h1v1h-1zM1629 348h1v1h-1zM1629 352h1v1h-1zM1629 357h1v1h-1zM1629 362h1v1h-1zM1629 366h1v1h-1zM1629 371h1v1h-1zM1629 376h1v1h-1zM1629 380h1v1h-1zM1629 385h1v1h-1zM1629 389h1v1h-1zM1629 394h1v1h-1zM1629 399h1v1h-1zM1629 403h1v1h-1zM1629 408h1v1h-1zM1629 413h1v1h-1zM1629 417h1v1h-1zM1629 422h1v1h-1zM1629 427h1v1h-1zM1629 431h1v1h-1zM1629 436h1v1h-1zM1629 440h1v1h-1zM1629 445h1v1h-1zM1629 450h1v1h-1zM1629 454h1v1h-1zM1629 459h1v1h-1zM1629 464h1v1h-1zM1629 468h1v1h-1zM1629 473h1v1h-1zM1629 478h1v1h-1zM1629 482h1v1h-1zM1629 487h1v1h-1zM1629 492h1v1h-1zM1629 496h1v1h-1zM1629 501h1v1h-1zM1629 505h1v1h-1zM1629 510h1v1h-1zM1629 515h1v1h-1zM1629 519h1v1h-1zM1629 526h1v1h-1zM1629 531h1v1h-1zM1629 535h1v1h-1zM1629 540h1v1h-1zM1629 545h1v1h-1zM1629 549h1v1h-1zM1629 554h1v1h-1zM1629 558h1v1h-1zM1629 563h1v1h-1zM1629 568h1v1h-1zM1629 572h1v1h-1zM1629 577h1v1h-1zM1629 582h1v1h-1zM1629 586h1v1h-1zM1629 591h1v1h-1zM1629 596h1v1h-1zM1629 600h1v1h-1zM1629 605h1v1h-1zM1629 610h1v1h-1zM1629 614h1v1h-1zM1629 619h1v1h-1zM1629 623h1v1h-1zM1629 628h1v1h-1zM1629 633h1v1h-1zM1629 637h1v1h-1zM1629 642h1v1h-1zM1629 647h1v1h-1zM1629 651h1v1h-1zM1629 656h1v1h-1zM1629 661h1v1h-1zM1629 665h1v1h-1zM1629 670h1v1h-1zM1629 674h1v1h-1zM1629 679h1v1h-1zM1629 684h1v1h-1zM1629 688h1v1h-1zM1629 693h1v1h-1zM1629 698h1v1h-1zM1629 702h1v1h-1zM1629 707h1v1h-1zM1629 712h1v1h-1zM1629 716h1v1h-1zM1629 721h1v1h-1zM1629 726h1v1h-1zM1629 730h1v1h-1zM1629 735h1v1h-1zM1629 739h1v1h-1zM1629 744h1v1h-1zM1629 749h1v1h-1zM1629 753h1v1h-1zM1629 760h1v1h-1zM1629 765h1v1h-1zM1629 769h1v1h-1zM1629 774h1v1h-1zM1629 779h1v1h-1zM1629 783h1v1h-1zM1629 788h1v1h-1zM1629 792h1v1h-1zM1629 797h1v1h-1zM1629 802h1v1h-1zM1629 806h1v1h-1zM1629 811h1v1h-1zM1629 816h1v1h-1zM1629 820h1v1h-1zM1629 825h1v1h-1zM1629 830h1v1h-1zM1629 834h1v1h-1zM1629 839h1v1h-1zM1629 844h1v1h-1zM1629 848h1v1h-1zM1629 853h1v1h-1zM1629 857h1v1h-1zM1629 862h1v1h-1zM1629 867h1v1h-1zM1629 871h1v1h-1zM1629 876h1v1h-1zM1629 881h1v1h-1zM1629 885h1v1h-1zM1629 890h1v1h-1zM1629 895h1v1h-1zM1629 899h1v1h-1zM1629 904h1v1h-1zM1629 908h1v1h-1zM1629 913h1v1h-1zM1629 918h1v1h-1zM1629 922h1v1h-1zM1629 927h1v1h-1zM1629 932h1v1h-1zM1629 936h1v1h-1zM1629 941h1v1h-1zM1629 946h1v1h-1zM1629 950h1v1h-1zM1629 955h1v1h-1zM1629 960h1v1h-1zM1629 964h1v1h-1zM1629 969h1v1h-1zM1629 973h1v1h-1zM1629 978h1v1h-1zM1629 983h1v1h-1zM1629 987h1v1h-1zM1629 992h1v1h-1z" fill="#b0b0b0" shape-rendering="crispEdges"/><rect x="3" y="290" width="1748" height="2" fill="#707070"/><rect x="3" y="524" width="1748" height="2" fill="#707070"/><rect x="3" y="758" width="1748" height="2" fill="#707070"/><path d="M3 267.5H1719" stroke="#bebebe" stroke-width="1" stroke-dasharray="5 5" shape-rendering="crispEdges"/><path d="M3 431.5H1719" stroke="#bebebe" stroke-width="1" stroke-dasharray="5 5" shape-rendering="crispEdges"/><path d="M3 735.5H1719" stroke="#bebebe" stroke-width="1" stroke-dasharray="5 5" shape-rendering="crispEdges"/><path d="M3 957.5H1719" stroke="#bebebe" stroke-width="1" stroke-dasharray="5 5" shape-rendering="crispEdges"/><path d="M55.5 95V290M55.5 299V524M55.5 533V758M55.5 765V993" stroke="#bebebe" stroke-width="1" stroke-dasharray="5 5" shape-rendering="crispEdges"/><rect x="1710.5" y="73.2" width="35.5" height="16" fill="#000"/><text x="1746" y="85.6" font-size="12.6" fill="#e4da2e" text-anchor="end" textLength="27.47" lengthAdjust="spacingAndGlyphs">40 V</text><rect x="1710.5" y="96.4" width="35.5" height="16" fill="#000"/><text x="1746" y="108.6" font-size="12.6" fill="#e4da2e" text-anchor="end" textLength="27.47" lengthAdjust="spacingAndGlyphs">35 V</text><rect x="1710.5" y="119.6" width="35.5" height="16" fill="#000"/><text x="1746" y="132.6" font-size="12.6" fill="#e4da2e" text-anchor="end" textLength="27.47" lengthAdjust="spacingAndGlyphs">30 V</text><rect x="1710.5" y="142.8" width="35.5" height="16" fill="#000"/><text x="1746" y="155.6" font-size="12.6" fill="#e4da2e" text-anchor="end" textLength="27.47" lengthAdjust="spacingAndGlyphs">25 V</text><rect x="1710.5" y="166.0" width="35.5" height="16" fill="#000"/><text x="1746" y="178.6" font-size="12.6" fill="#e4da2e" text-anchor="end" textLength="27.47" lengthAdjust="spacingAndGlyphs">20 V</text><rect x="1710.5" y="189.2" width="35.5" height="16" fill="#000"/><text x="1746" y="201.6" font-size="12.6" fill="#e4da2e" text-anchor="end" textLength="27.47" lengthAdjust="spacingAndGlyphs">15 V</text><rect x="1710.5" y="212.4" width="35.5" height="16" fill="#000"/><text x="1746" y="224.6" font-size="12.6" fill="#e4da2e" text-anchor="end" textLength="27.47" lengthAdjust="spacingAndGlyphs">10 V</text><rect x="1718.0" y="235.6" width="28.0" height="16" fill="#000"/><text x="1746" y="248.6" font-size="12.6" fill="#e4da2e" text-anchor="end" textLength="20.05" lengthAdjust="spacingAndGlyphs">5 V</text><rect x="1718.0" y="258.8" width="28.0" height="16" fill="#000"/><text x="1746" y="271.6" font-size="12.6" fill="#e4da2e" text-anchor="end" textLength="20.05" lengthAdjust="spacingAndGlyphs">0 V</text><rect x="1718.0" y="307.2" width="28.0" height="16" fill="#000"/><text x="1746" y="319.6" font-size="12.6" fill="#8ac83a" text-anchor="end" textLength="20.05" lengthAdjust="spacingAndGlyphs">1 V</text><rect x="1692.0" y="330.4" width="54.0" height="16" fill="#000"/><text x="1746" y="342.6" font-size="12.6" fill="#8ac83a" text-anchor="end" textLength="46.03" lengthAdjust="spacingAndGlyphs">800 mV</text><rect x="1692.0" y="353.6" width="54.0" height="16" fill="#000"/><text x="1746" y="366.6" font-size="12.6" fill="#8ac83a" text-anchor="end" textLength="46.03" lengthAdjust="spacingAndGlyphs">600 mV</text><rect x="1692.0" y="376.8" width="54.0" height="16" fill="#000"/><text x="1746" y="389.6" font-size="12.6" fill="#8ac83a" text-anchor="end" textLength="46.03" lengthAdjust="spacingAndGlyphs">400 mV</text><rect x="1692.0" y="400.0" width="54.0" height="16" fill="#000"/><text x="1746" y="412.6" font-size="12.6" fill="#8ac83a" text-anchor="end" textLength="46.03" lengthAdjust="spacingAndGlyphs">200 mV</text><rect x="1718.0" y="423.2" width="28.0" height="16" fill="#000"/><text x="1746" y="435.6" font-size="12.6" fill="#8ac83a" text-anchor="end" textLength="20.05" lengthAdjust="spacingAndGlyphs">0 V</text><rect x="1687.5" y="446.4" width="58.5" height="16" fill="#000"/><text x="1746" y="458.6" font-size="12.6" fill="#8ac83a" text-anchor="end" textLength="50.47" lengthAdjust="spacingAndGlyphs">-200 mV</text><rect x="1687.5" y="469.6" width="58.5" height="16" fill="#000"/><text x="1746" y="482.6" font-size="12.6" fill="#8ac83a" text-anchor="end" textLength="50.47" lengthAdjust="spacingAndGlyphs">-400 mV</text><rect x="1687.5" y="492.8" width="58.5" height="16" fill="#000"/><text x="1746" y="505.6" font-size="12.6" fill="#8ac83a" text-anchor="end" textLength="50.47" lengthAdjust="spacingAndGlyphs">-600 mV</text><rect x="1666.7" y="541.2" width="79.3" height="16" fill="#000"/><text x="1746" y="553.6" font-size="12.6" fill="#ec9330" text-anchor="end" textLength="71.27" lengthAdjust="spacingAndGlyphs">583.469 mT</text><rect x="1666.7" y="564.4" width="79.3" height="16" fill="#000"/><text x="1746" y="576.6" font-size="12.6" fill="#ec9330" text-anchor="end" textLength="71.27" lengthAdjust="spacingAndGlyphs">510.535 mT</text><rect x="1666.7" y="587.6" width="79.3" height="16" fill="#000"/><text x="1746" y="600.6" font-size="12.6" fill="#ec9330" text-anchor="end" textLength="71.27" lengthAdjust="spacingAndGlyphs">437.602 mT</text><rect x="1666.7" y="610.8" width="79.3" height="16" fill="#000"/><text x="1746" y="623.6" font-size="12.6" fill="#ec9330" text-anchor="end" textLength="71.27" lengthAdjust="spacingAndGlyphs">364.668 mT</text><rect x="1666.7" y="634.0" width="79.3" height="16" fill="#000"/><text x="1746" y="646.6" font-size="12.6" fill="#ec9330" text-anchor="end" textLength="71.27" lengthAdjust="spacingAndGlyphs">291.734 mT</text><rect x="1666.7" y="657.2" width="79.3" height="16" fill="#000"/><text x="1746" y="669.6" font-size="12.6" fill="#ec9330" text-anchor="end" textLength="71.27" lengthAdjust="spacingAndGlyphs">218.801 mT</text><rect x="1666.7" y="680.4" width="79.3" height="16" fill="#000"/><text x="1746" y="692.6" font-size="12.6" fill="#ec9330" text-anchor="end" textLength="71.27" lengthAdjust="spacingAndGlyphs">145.867 mT</text><rect x="1674.2" y="703.6" width="71.8" height="16" fill="#000"/><text x="1746" y="716.6" font-size="12.6" fill="#ec9330" text-anchor="end" textLength="63.84" lengthAdjust="spacingAndGlyphs">72.934 mT</text><rect x="1718.9" y="726.8" width="27.1" height="16" fill="#000"/><text x="1746" y="739.6" font-size="12.6" fill="#ec9330" text-anchor="end" textLength="19.05" lengthAdjust="spacingAndGlyphs">0 T</text><rect x="1663.0" y="763.6" width="83.0" height="16" fill="#000"/><text x="1746" y="776.6" font-size="12.6" fill="#78329c" text-anchor="end" textLength="75.0" lengthAdjust="spacingAndGlyphs">3.045697 kA</text><rect x="1663.0" y="786.8" width="83.0" height="16" fill="#000"/><text x="1746" y="799.6" font-size="12.6" fill="#78329c" text-anchor="end" textLength="75.0" lengthAdjust="spacingAndGlyphs">2.664985 kA</text><rect x="1663.0" y="810.0" width="83.0" height="16" fill="#000"/><text x="1746" y="822.6" font-size="12.6" fill="#78329c" text-anchor="end" textLength="75.0" lengthAdjust="spacingAndGlyphs">2.284273 kA</text><rect x="1663.0" y="833.2" width="83.0" height="16" fill="#000"/><text x="1746" y="845.6" font-size="12.6" fill="#78329c" text-anchor="end" textLength="75.0" lengthAdjust="spacingAndGlyphs">1.903561 kA</text><rect x="1663.0" y="856.4" width="83.0" height="16" fill="#000"/><text x="1746" y="868.6" font-size="12.6" fill="#78329c" text-anchor="end" textLength="75.0" lengthAdjust="spacingAndGlyphs">1.522849 kA</text><rect x="1663.0" y="879.6" width="83.0" height="16" fill="#000"/><text x="1746" y="892.6" font-size="12.6" fill="#78329c" text-anchor="end" textLength="75.0" lengthAdjust="spacingAndGlyphs">1.142136 kA</text><rect x="1677.8" y="902.8" width="68.2" height="16" fill="#000"/><text x="1746" y="915.6" font-size="12.6" fill="#78329c" text-anchor="end" textLength="60.16" lengthAdjust="spacingAndGlyphs">761.424 A</text><rect x="1677.8" y="926.0" width="68.2" height="16" fill="#000"/><text x="1746" y="938.6" font-size="12.6" fill="#78329c" text-anchor="end" textLength="60.16" lengthAdjust="spacingAndGlyphs">380.712 A</text><rect x="1718.7" y="949.2" width="27.3" height="16" fill="#000"/><text x="1746" y="961.6" font-size="12.6" fill="#78329c" text-anchor="end" textLength="19.31" lengthAdjust="spacingAndGlyphs">0 A</text><rect x="1673.4" y="972.4" width="72.6" height="16" fill="#000"/><text x="1746" y="984.6" font-size="12.6" fill="#78329c" text-anchor="end" textLength="64.6" lengthAdjust="spacingAndGlyphs">-380.712 A</text><text x="55.5" y="987" font-size="13" fill="#b8b8b8" text-anchor="middle" textLength="17.86" lengthAdjust="spacingAndGlyphs">0 s</text><text x="230.5" y="987" font-size="13" fill="#b8b8b8" text-anchor="middle" textLength="40.18" lengthAdjust="spacingAndGlyphs">4.5 ms</text><text x="405.5" y="987" font-size="13" fill="#b8b8b8" text-anchor="middle" textLength="29.01" lengthAdjust="spacingAndGlyphs">9 ms</text><text x="580.5" y="987" font-size="13" fill="#b8b8b8" text-anchor="middle" textLength="47.63" lengthAdjust="spacingAndGlyphs">13.5 ms</text><text x="755.5" y="987" font-size="13" fill="#b8b8b8" text-anchor="middle" textLength="36.46" lengthAdjust="spacingAndGlyphs">18 ms</text><text x="929.5" y="987" font-size="13" fill="#b8b8b8" text-anchor="middle" textLength="47.63" lengthAdjust="spacingAndGlyphs">22.5 ms</text><text x="1104.5" y="987" font-size="13" fill="#b8b8b8" text-anchor="middle" textLength="36.46" lengthAdjust="spacingAndGlyphs">27 ms</text><text x="1279.5" y="987" font-size="13" fill="#b8b8b8" text-anchor="middle" textLength="47.63" lengthAdjust="spacingAndGlyphs">31.5 ms</text><text x="1454.5" y="987" font-size="13" fill="#b8b8b8" text-anchor="middle" textLength="36.46" lengthAdjust="spacingAndGlyphs">36 ms</text><text x="1629.5" y="987" font-size="13" fill="#b8b8b8" text-anchor="middle" textLength="47.63" lengthAdjust="spacingAndGlyphs">40.5 ms</text><polyline points="3.0,265.4 5.0,265.4 7.0,265.4 9.0,265.4 11.1,265.4 13.1,265.4 15.1,265.4 17.1,265.4 19.1,265.4 21.1,265.4 23.2,265.4 25.2,265.4 27.2,265.4 29.2,265.4 31.2,265.4 33.2,265.4 35.2,265.4 37.3,265.4 39.3,265.4 41.3,265.4 43.3,265.4 45.3,265.4 47.3,265.4 49.4,265.4 51.4,265.4 53.4,265.4 55.4,265.4 56.2,261.7 56.4,269.2 57.5,264.0 58.5,266.0 59.5,264.0 60.5,266.0 61.5,264.0 62.5,266.0 63.8,256.2 64.2,270.8 64.6,257.5 68.3,257.7 70.8,253.3 73.8,250.8 76.7,248.3 79.2,246.4 81.7,244.4 84.2,242.5 86.4,241.1 88.6,239.7 90.8,238.3 93.0,237.2 95.2,236.1 97.3,235.1 99.5,234.0 101.7,232.9 103.8,232.0 105.8,231.1 107.9,230.1 110.0,229.2 112.2,228.4 114.3,227.7 116.5,226.9 118.6,226.2 120.8,225.4 123.1,224.9 125.4,224.4 127.7,223.8 130.0,223.3 132.3,222.8 134.6,222.3 136.9,221.8 139.2,221.2 141.4,220.9 143.5,220.6 145.7,220.3 147.8,219.9 150.0,219.6 152.0,219.3 154.1,219.0 156.1,218.7 158.1,218.4 160.1,218.1 162.2,217.8 164.2,217.5 166.3,217.2 168.3,217.0 170.4,216.8 172.5,216.5 174.6,216.3 176.7,216.2 178.8,216.1 180.8,215.9 182.9,215.8 185.0,215.6 187.2,215.6 189.5,215.5 191.8,215.5 194.0,215.4 196.2,215.4 200.0,220.0 203.3,222.5 205.5,222.8 207.8,223.0 210.0,223.3 212.2,223.6 214.5,223.8 216.8,224.1 219.0,224.3 221.2,224.6 223.3,225.4 225.3,226.1 227.4,226.9 229.4,227.7 231.5,228.4 233.5,229.2 235.6,229.9 237.6,230.7 239.7,231.5 241.7,232.2 243.8,233.0 246.0,233.5 248.2,233.9 250.5,234.1 252.8,234.2 255.0,235.3 257.1,235.7 259.2,234.8 261.3,235.7 263.4,235.5 265.5,235.1 267.6,236.0 269.7,235.2 271.8,236.1 273.8,235.5 275.9,235.7 278.0,236.4 280.1,237.2 282.2,236.1 284.3,236.4 286.4,237.2 288.5,237.9 290.6,237.2 292.6,237.3 294.6,237.0 296.6,238.1 298.6,236.4 300.7,237.8 302.7,236.8 304.7,236.6 306.7,236.5 308.7,236.9 310.7,237.8 312.7,236.6 314.7,237.3 316.7,237.5 318.8,237.2 320.8,236.9 322.9,237.1 325.0,236.2 327.1,236.1 329.2,236.2 331.2,237.0 333.3,236.5 335.4,236.2 337.5,236.6 339.6,236.2 341.7,235.9 343.8,236.7 345.8,236.4 347.9,235.5 350.0,235.9 352.1,236.1 354.2,236.1 356.3,236.8 358.4,236.7 360.6,236.0 362.7,237.3 364.8,235.8 366.9,236.6 368.4,230.3 371.6,234.4 373.6,234.5 375.7,235.4 377.7,234.5 379.7,235.4 381.7,234.8 383.8,235.9 386.2,235.1 388.8,234.1 391.2,232.5 393.3,232.4 395.4,232.8 397.4,231.6 399.5,232.1 401.6,231.7 403.6,231.5 405.7,231.1 407.8,231.6 409.8,231.6 411.9,230.6 414.1,230.7 416.3,231.2 418.4,230.3 420.6,231.6 422.8,231.7 425.0,231.6 427.1,232.0 429.2,231.1 431.2,229.6 433.3,229.3 435.4,229.3 437.5,227.6 439.6,227.9 441.7,226.8 443.8,226.9 445.9,226.0 448.0,225.7 450.2,226.7 452.3,225.4 454.5,225.4 456.6,225.4 458.8,225.4 461.0,226.4 463.2,225.4 465.5,226.4 467.8,227.0 470.0,227.2 472.0,227.5 474.1,226.9 476.1,226.5 478.2,225.0 480.2,224.8 482.3,224.2 484.3,224.7 486.4,224.4 488.4,222.5 490.5,222.1 492.5,222.2 494.5,221.5 496.6,221.4 498.6,221.7 500.7,221.7 502.7,220.9 504.8,220.3 506.8,220.8 508.9,220.6 510.9,220.8 513.0,221.3 515.0,220.3 517.1,220.1 519.2,219.2 521.3,218.7 523.5,218.3 525.6,216.6 527.7,217.5 529.8,216.7 531.9,215.6 534.1,216.4 536.4,216.3 538.6,215.6 540.9,215.7 543.1,216.0 545.6,213.8 548.1,213.2 550.6,211.5 552.9,210.5 555.1,210.3 557.4,210.3 559.6,210.0 561.9,210.4 564.7,208.5 567.5,207.2 571.2,208.5 575.0,212.8 577.2,212.7 579.4,213.3 581.5,214.3 583.7,214.9 585.9,216.1 588.1,217.1 590.6,217.0 593.1,219.3 595.6,219.4 597.6,219.7 599.7,218.9 601.7,219.1 603.7,219.4 605.8,219.4 607.8,219.8 609.7,215.6 612.5,219.4 614.6,219.0 616.7,220.5 618.8,221.0 621.0,220.3 623.1,220.5 625.2,220.0 627.3,220.3 629.4,221.2 631.6,220.6 633.8,220.1 636.0,220.7 638.1,219.1 640.3,218.5 642.5,219.0 644.6,219.4 646.8,218.3 648.9,217.2 651.0,217.5 652.2,168.8 654.1,159.4 657.5,163.5 660.0,165.9 662.5,167.9 665.0,170.6 667.1,174.2 669.3,178.1 671.4,181.7 673.6,185.2 675.7,188.6 677.9,192.3 680.0,196.0 682.1,197.9 684.2,200.4 686.3,202.3 688.5,204.6 690.6,206.4 692.7,208.4 694.8,210.9 696.9,212.8 698.9,214.8 701.0,216.5 703.0,218.2 705.1,220.0 707.1,221.7 709.2,223.1 711.2,225.0 713.5,226.8 715.8,228.5 718.0,230.1 720.2,231.9 722.5,234.0 724.9,234.9 727.2,235.9 729.5,237.2 731.9,238.1 734.2,239.2 736.6,239.8 738.9,240.9 741.2,241.5 743.4,242.7 745.6,243.6 747.8,244.2 750.0,245.1 752.2,246.0 754.4,247.1 756.7,247.7 759.1,248.5 761.4,249.5 763.8,250.3 765.8,250.5 767.9,250.6 769.9,250.8 772.0,250.9 774.1,251.1 776.1,251.2 778.2,251.4 780.3,251.5 782.3,251.7 784.4,251.8 786.5,251.7 788.7,251.6 790.8,251.6 793.0,251.5 795.1,251.4 797.3,251.3 799.4,251.2 803.1,252.8 805.2,252.8 807.2,252.8 809.3,252.9 811.4,252.9 813.4,252.9 815.5,253.0 817.6,253.0 819.6,253.0 821.7,253.1 823.8,253.1 826.6,253.8 829.4,254.4 831.4,254.4 833.5,254.4 835.5,254.4 837.6,254.4 839.6,254.4 841.7,254.4 843.7,254.4 845.8,254.4 847.8,254.4 849.9,254.4 851.9,254.4 853.9,254.4 856.0,254.4 858.0,254.4 860.1,254.4 862.1,254.4 864.2,254.4 866.2,254.4 868.3,254.4 870.3,254.4 872.4,254.4 874.4,254.4 876.4,254.4 878.5,254.4 880.5,254.4 882.6,254.4 884.6,254.4 886.7,254.4 888.7,254.4 890.8,254.4 892.8,254.4 894.9,254.4 896.9,254.4 899.7,255.4 902.5,256.3 904.7,256.6 906.9,256.9 909.0,257.2 911.2,257.6 913.4,257.9 915.6,258.2 917.6,258.2 919.6,258.2 921.6,258.2 923.7,258.1 925.7,258.1 927.7,258.1 929.7,258.1 931.7,258.1 933.7,258.1 935.7,258.1 937.8,258.0 939.8,258.0 941.8,258.0 943.8,258.0 945.8,258.0 947.8,258.0 949.9,257.9 951.9,257.9 953.9,257.9 955.9,257.9 957.9,257.9 959.9,257.9 961.9,257.9 964.0,257.8 966.0,257.8 968.0,257.8 970.0,257.8 972.0,257.8 974.1,257.8 976.1,257.9 978.2,257.9 980.2,257.9 982.2,257.9 984.3,257.9 986.3,257.9 988.4,258.0 990.4,258.0 992.4,258.0 994.5,258.0 996.5,258.0 998.5,258.0 1000.6,258.1 1002.6,258.1 1004.7,258.1 1006.7,258.1 1008.7,258.1 1010.8,258.1 1012.8,258.2 1014.9,258.2 1016.9,258.2 1018.8,259.3 1020.8,259.4 1022.9,259.4 1024.9,259.4 1027.0,259.5 1029.1,259.6 1031.1,259.6 1033.2,259.7 1035.2,259.7 1037.3,259.8 1039.4,259.8 1041.4,259.9 1043.5,259.9 1045.6,259.9 1047.6,260.0 1049.7,260.1 1051.8,260.1 1053.8,260.2 1055.9,260.2 1057.9,260.2 1060.0,260.3 1062.2,260.2 1064.4,260.2 1066.6,260.1 1068.8,260.0 1071.0,260.0 1073.2,259.9 1075.4,259.8 1077.6,259.8 1079.8,259.7 1082.0,259.5 1084.1,259.4 1086.2,259.2 1088.4,259.0 1090.5,258.9 1092.7,258.7 1094.8,258.7 1096.9,258.7 1099.0,258.7 1101.0,258.7 1103.1,258.7 1105.2,258.7 1107.3,258.7 1109.4,258.7 1111.5,258.7 1113.5,258.7 1115.6,258.7 1117.7,258.7 1119.8,258.7 1121.9,258.7 1124.0,258.7 1126.0,258.7 1128.1,258.7 1130.2,258.7 1132.3,258.7 1134.5,259.4 1136.8,260.0 1139.0,260.6 1141.2,261.3 1143.4,261.3 1145.5,261.3 1147.7,261.3 1149.8,261.3 1152.0,261.3 1154.2,261.0 1156.3,260.8 1158.5,260.5 1160.7,260.2 1162.8,260.0 1165.0,259.7 1167.2,259.6 1169.3,259.6 1171.5,259.5 1173.7,259.5 1175.8,259.4 1178.0,259.3 1180.2,259.3 1182.4,259.2 1184.5,259.2 1186.7,259.1 1188.9,259.2 1191.0,259.2 1193.2,259.3 1195.4,259.3 1197.5,259.4 1199.7,259.4 1201.8,259.5 1204.0,259.5 1206.2,259.6 1208.3,259.6 1210.5,259.7 1213.5,260.5 1216.4,261.3 1218.6,261.3 1220.8,261.3 1223.0,261.3 1225.2,261.3 1227.4,261.3 1229.6,261.3 1231.8,261.3 1234.0,261.3 1236.2,261.3 1238.3,261.1 1240.4,260.9 1242.5,260.7 1244.6,260.5 1246.7,260.3 1248.8,260.1 1250.9,259.9 1253.0,259.7 1255.0,259.7 1257.1,259.7 1259.1,259.7 1261.2,259.7 1263.2,259.7 1265.3,259.7 1267.3,259.7 1269.3,259.7 1271.4,259.7 1273.4,259.7 1275.5,259.7 1277.5,259.7 1279.6,259.7 1281.6,259.7 1283.7,259.7 1285.7,259.7 1288.0,260.5 1290.4,261.3 1292.7,262.1 1294.8,262.0 1296.9,262.0 1299.0,261.9 1301.2,261.9 1303.3,261.8 1305.4,261.8 1307.5,261.7 1309.8,261.6 1312.0,261.4 1314.3,261.3 1316.6,261.1 1318.9,261.0 1321.1,260.8 1323.4,260.7 1325.5,260.7 1327.6,260.7 1329.6,260.7 1331.7,260.7 1333.8,260.7 1335.9,260.7 1338.0,260.7 1340.0,260.7 1342.1,260.7 1344.2,260.7 1346.3,260.7 1348.4,260.7 1350.4,260.7 1352.5,260.7 1354.6,260.7 1356.7,260.7 1358.8,260.7 1360.8,260.7 1362.9,260.7 1365.0,260.7 1368.9,262.7 1371.1,262.6 1373.3,262.6 1375.5,262.5 1377.7,262.4 1379.9,262.4 1382.1,262.3 1384.3,262.2 1386.5,262.2 1388.7,262.1 1390.9,261.8 1393.1,261.5 1395.3,261.2 1397.5,260.9 1399.7,260.5 1401.9,260.2 1404.1,259.9 1406.3,259.6 1408.5,259.3 1410.7,259.2 1412.9,259.2 1415.0,259.1 1417.2,259.1 1419.4,259.0 1421.6,258.9 1423.8,258.9 1425.9,258.8 1428.1,258.8 1430.3,258.7 1432.5,258.8 1434.8,258.8 1437.0,258.9 1439.2,259.0 1441.5,259.0 1443.7,259.1 1445.5,260.5 1447.5,260.6 1449.5,260.6 1451.5,260.7 1453.5,260.8 1455.5,260.8 1457.5,260.9 1459.5,261.0 1461.5,261.0 1463.5,261.1 1465.5,261.2 1467.5,261.2 1469.5,261.3 1471.7,261.1 1473.9,260.8 1476.1,260.6 1478.4,260.3 1480.6,260.1 1482.8,259.8 1485.0,259.6 1487.5,259.0 1490.0,258.4 1492.0,258.4 1494.0,258.4 1496.0,258.4 1498.0,258.4 1500.0,258.4 1502.0,258.4 1504.1,258.6 1506.2,258.9 1508.3,259.1 1510.4,259.4 1512.5,259.6 1514.0,260.5 1516.2,260.6 1518.5,260.7 1520.7,260.8 1523.0,261.0 1525.2,261.1 1527.5,261.2 1529.7,261.3 1531.8,261.3 1533.8,261.3 1535.9,261.3 1537.9,261.3 1540.0,261.3 1542.1,261.3 1544.1,261.3 1546.2,261.3 1548.2,261.3 1550.3,261.3 1552.4,261.3 1554.4,261.3 1556.5,261.3 1558.5,261.3 1560.6,261.3 1563.2,260.5 1565.7,259.6 1567.9,259.6 1570.1,259.6 1572.3,259.6 1574.6,259.6 1576.8,259.6 1579.0,259.6 1581.2,259.6 1583.0,260.5 1585.1,260.5 1587.2,260.5 1589.3,260.5 1591.4,260.5 1593.4,260.5 1595.5,260.5 1597.6,260.5 1599.7,260.5 1601.8,260.5 1605.3,259.6 1607.3,259.6 1609.3,259.6 1611.3,259.6 1613.3,259.6 1615.3,259.6 1617.3,259.6 1619.0,260.5 1621.1,260.6 1623.1,260.6 1625.2,260.7 1627.2,260.7 1629.3,260.8 1632.7,261.7 1634.8,261.8 1636.8,261.8 1638.9,261.8 1641.0,261.9 1643.1,261.9 1645.1,262.0 1647.2,262.1 1649.3,262.1 1651.3,262.1 1653.4,262.2 1655.5,262.2 1657.6,262.2 1659.7,262.3 1661.7,262.3 1663.8,262.3 1665.9,262.3 1668.0,262.4 1670.1,262.4 1672.2,262.4 1674.3,262.4 1676.3,262.4 1678.4,262.5 1680.5,262.5 1682.6,262.5 1684.6,262.5 1686.6,262.5 1688.6,262.5 1690.6,262.5 1692.7,262.5 1694.7,262.5 1696.7,262.5 1698.7,262.5 1700.7,262.5 1702.7,262.5 1704.7,262.5 1706.7,262.5 1708.8,262.5 1710.8,262.5 1712.8,262.5 1714.8,262.5 1716.8,262.5 1718.8,262.5 1720.8,262.5 1722.8,262.5 1724.8,262.5 1726.9,262.5 1728.9,262.5 1730.9,262.5 1732.9,262.5 1734.9,262.5 1736.9,262.5 1738.9,262.5 1740.9,262.5 1743.0,262.5 1745.0,262.5 1747.0,262.5 1749.0,262.5 1751.0,262.5" fill="none" stroke="#f2ef1a" stroke-width="1.4" stroke-linejoin="round"/><polyline points="3.0,430.5 195.0,430.0 202.5,427.5 230.0,416.2 240.0,411.2 250.0,407.0 260.0,405.8 275.0,406.2 300.0,410.0 325.0,413.0 345.0,414.2 390.0,414.2 412.5,412.5 440.0,411.3 460.6,409.6 483.1,408.5 507.5,406.2 533.8,404.4 569.4,404.4 582.5,405.7 601.2,407.2 627.5,408.1 650.0,409.0 653.8,407.8 661.2,410.4 668.0,414.5 677.5,420.0 686.0,422.5 693.8,424.4 712.5,427.2 736.2,429.1 800.0,429.9 1751.0,430.2" fill="none" stroke="#8ccf3a" stroke-width="1.2" stroke-linejoin="round"/><polyline points="42.0,735.0 55.0,735.0 55.0,735.0 57.9,733.5 62.5,731.6 65.2,730.8 68.2,729.9 71.7,729.0 76.0,727.8 77.8,727.3 78.8,727.0 79.6,726.7 80.7,726.3 82.8,725.7 86.3,724.7 91.9,723.1 100.0,720.8 101.8,720.3 103.8,719.7 105.8,719.2 107.9,718.6 110.0,717.9 112.3,717.3 114.6,716.6 117.0,715.9 119.5,715.2 122.0,714.5 124.7,713.7 127.3,712.9 130.1,712.1 132.9,711.3 135.7,710.5 138.6,709.6 141.6,708.8 144.6,707.9 147.7,707.0 150.8,706.1 154.0,705.2 157.2,704.3 160.4,703.4 163.7,702.5 167.0,701.5 170.3,700.6 173.7,699.6 177.1,698.6 180.6,697.7 184.0,696.7 187.5,695.7 191.0,694.8 194.5,693.8 198.0,692.8 201.5,691.9 205.1,690.9 208.6,689.9 212.2,689.0 215.8,688.0 219.3,687.1 222.9,686.1 226.4,685.2 230.0,684.2 232.6,683.6 235.3,682.9 238.0,682.2 240.7,681.5 243.5,680.8 246.2,680.0 249.0,679.3 251.8,678.6 254.7,677.9 257.5,677.1 260.4,676.4 263.3,675.6 266.2,674.9 269.1,674.2 272.1,673.4 275.0,672.7 278.0,671.9 281.0,671.1 284.0,670.4 287.0,669.6 290.1,668.8 293.1,668.1 296.2,667.3 299.2,666.5 302.3,665.8 305.4,665.0 308.5,664.2 311.6,663.5 314.7,662.7 317.8,661.9 321.0,661.2 324.1,660.4 327.2,659.6 330.4,658.8 333.5,658.1 336.7,657.3 339.8,656.5 342.9,655.8 346.1,655.0 349.2,654.3 352.4,653.5 355.5,652.8 358.7,652.0 361.8,651.3 364.9,650.5 368.1,649.8 371.2,649.0 374.3,648.3 377.4,647.6 380.5,646.9 383.6,646.1 386.7,645.4 389.8,644.7 392.8,644.0 395.9,643.3 398.9,642.6 402.0,641.9 405.0,641.2 408.0,640.6 411.0,639.9 414.0,639.2 417.0,638.6 420.1,637.9 423.1,637.2 426.1,636.5 429.1,635.9 432.1,635.2 435.1,634.5 438.1,633.9 441.1,633.2 444.1,632.6 447.1,631.9 450.2,631.3 453.2,630.6 456.2,630.0 459.2,629.3 462.2,628.7 465.2,628.0 468.2,627.4 471.2,626.8 474.2,626.1 477.2,625.5 480.2,624.9 483.2,624.2 486.2,623.6 489.3,623.0 492.3,622.4 495.3,621.7 498.3,621.1 501.3,620.5 504.3,619.9 507.3,619.3 510.3,618.7 513.3,618.1 516.3,617.5 519.3,616.9 522.3,616.3 525.3,615.7 528.3,615.1 531.3,614.5 534.3,613.9 537.3,613.4 540.3,612.8 543.4,612.2 546.4,611.6 549.4,611.1 552.4,610.5 555.4,610.0 558.4,609.4 561.4,608.8 564.4,608.3 567.4,607.8 570.4,607.2 573.4,606.7 576.4,606.1 579.4,605.6 582.4,605.1 585.4,604.5 588.4,604.0 591.4,603.5 594.4,603.0 597.4,602.5 600.4,602.0 603.4,601.5 606.4,601.0 609.4,600.5 612.4,600.0 615.4,599.5 618.4,599.0 621.4,598.5 624.4,598.0 627.4,597.6 630.4,597.1 633.3,596.6 636.3,596.1 639.3,595.7 642.3,595.2 645.3,594.7 648.3,594.3 651.3,593.8 654.3,593.4 657.3,592.9 660.3,592.5 663.3,592.0 666.3,591.6 669.3,591.2 672.3,590.7 675.2,590.3 678.2,589.9 681.2,589.4 684.2,589.0 687.2,588.6 690.2,588.1 693.2,587.7 696.2,587.3 699.2,586.9 702.2,586.5 705.2,586.1 708.2,585.7 711.2,585.2 714.2,584.8 717.2,584.4 720.2,584.0 723.3,583.6 726.3,583.2 729.3,582.8 732.3,582.4 735.3,582.0 738.3,581.6 741.3,581.3 744.3,580.9 747.4,580.5 750.4,580.1 753.4,579.7 756.4,579.3 759.4,578.9 762.5,578.6 765.5,578.2 768.5,577.8 771.6,577.4 774.6,577.0 777.6,576.7 780.7,576.3 783.7,575.9 786.8,575.6 789.8,575.2 792.9,574.8 795.9,574.5 799.0,574.1 802.0,573.8 805.1,573.4 808.1,573.0 811.2,572.7 814.2,572.3 817.3,572.0 820.3,571.7 823.4,571.3 826.4,571.0 829.5,570.6 832.5,570.3 835.6,570.0 838.6,569.6 841.7,569.3 844.8,569.0 847.8,568.6 850.9,568.3 853.9,568.0 857.0,567.7 860.0,567.4 863.1,567.1 866.1,566.8 869.2,566.4 872.2,566.1 875.3,565.8 878.3,565.5 881.4,565.2 884.4,565.0 887.5,564.7 890.5,564.4 893.6,564.1 896.6,563.8 899.7,563.5 902.7,563.3 905.8,563.0 908.8,562.7 911.8,562.4 914.9,562.2 917.9,561.9 920.9,561.7 924.0,561.4 927.0,561.1 930.0,560.9 933.0,560.7 936.1,560.4 939.2,560.2 942.3,559.9 945.4,559.7 948.6,559.5 951.8,559.2 954.9,559.0 958.2,558.8 961.4,558.6 964.6,558.3 967.9,558.1 971.1,557.9 974.4,557.7 977.6,557.5 980.9,557.3 984.2,557.1 987.5,556.9 990.8,556.7 994.1,556.5 997.3,556.3 1000.6,556.1 1003.9,555.9 1007.2,555.8 1010.4,555.6 1013.7,555.4 1016.9,555.2 1020.2,555.1 1023.4,554.9 1026.6,554.7 1029.8,554.5 1032.9,554.4 1036.1,554.2 1039.2,554.1 1042.3,553.9 1045.4,553.8 1048.4,553.6 1051.5,553.5 1054.5,553.3 1057.4,553.2 1060.4,553.0 1063.3,552.9 1066.1,552.8 1069.0,552.6 1071.8,552.5 1074.5,552.4 1077.2,552.2 1079.9,552.1 1082.5,552.0 1085.1,551.9 1087.7,551.8 1090.1,551.6 1092.6,551.5 1095.0,551.4 1097.3,551.3 1099.6,551.2 1101.8,551.1 1104.0,551.0 1109.0,550.8 1113.6,550.6 1117.9,550.4 1121.8,550.2 1125.5,550.1 1128.9,550.0 1132.1,549.9 1135.1,549.8 1137.9,549.7 1140.6,549.6 1143.2,549.6 1145.6,549.5 1148.0,549.5 1150.4,549.5 1152.8,549.5 1155.2,549.4 1157.6,549.4 1160.1,549.4 1162.8,549.4 1165.6,549.4 1168.5,549.4 1171.6,549.4 1175.0,549.3 1178.6,549.3 1181.3,549.3 1184.0,549.3 1186.8,549.2 1189.7,549.2 1192.6,549.2 1195.5,549.2 1198.5,549.1 1201.5,549.1 1204.6,549.1 1207.7,549.1 1210.9,549.1 1214.1,549.1 1217.2,549.1 1220.5,549.0 1223.7,549.0 1226.9,549.0 1230.2,549.0 1233.5,549.0 1236.7,549.0 1240.0,549.0 1243.2,549.0 1246.5,549.0 1249.7,549.0 1252.9,549.1 1256.1,549.1 1259.3,549.1 1262.5,549.1 1265.6,549.1 1268.7,549.1 1271.7,549.2 1274.7,549.2 1277.7,549.2 1280.6,549.3 1283.5,549.3 1286.8,549.3 1290.1,549.4 1293.3,549.5 1296.5,549.5 1299.7,549.6 1302.9,549.7 1306.0,549.8 1309.1,549.8 1312.1,549.9 1315.2,550.0 1318.2,550.1 1321.2,550.2 1324.2,550.3 1327.2,550.4 1330.2,550.5 1333.1,550.6 1336.1,550.7 1339.1,550.8 1342.0,551.0 1345.0,551.1 1347.9,551.2 1350.9,551.3 1353.8,551.4 1356.8,551.5 1359.8,551.6 1362.7,551.7 1365.8,551.8 1368.8,551.9 1371.8,552.0 1374.8,552.1 1377.9,552.2 1381.0,552.3 1384.0,552.4 1387.1,552.4 1390.2,552.5 1393.3,552.6 1396.4,552.7 1399.5,552.8 1402.5,552.9 1405.6,552.9 1408.7,553.0 1411.8,553.1 1414.9,553.2 1418.0,553.3 1421.0,553.4 1424.1,553.5 1427.1,553.6 1430.2,553.7 1433.2,553.8 1436.3,553.9 1439.3,554.0 1442.3,554.1 1445.3,554.2 1448.3,554.3 1451.2,554.4 1454.2,554.5 1457.1,554.7 1460.0,554.8 1463.2,555.0 1466.4,555.1 1469.6,555.3 1472.7,555.5 1475.8,555.6 1478.9,555.8 1482.0,556.0 1485.1,556.2 1488.1,556.4 1491.1,556.6 1494.2,556.8 1497.2,557.0 1500.2,557.2 1503.2,557.4 1506.2,557.6 1509.2,557.9 1512.3,558.1 1515.3,558.3 1518.3,558.5 1521.4,558.7 1524.4,558.9 1527.5,559.1 1530.6,559.4 1533.7,559.6 1536.8,559.8 1540.0,560.0 1543.0,560.2 1546.0,560.4 1549.1,560.6 1552.2,560.8 1555.3,561.0 1558.5,561.2 1561.7,561.4 1564.9,561.6 1568.2,561.9 1571.4,562.1 1574.7,562.3 1577.9,562.5 1581.2,562.7 1584.4,562.9 1587.6,563.1 1590.8,563.4 1593.9,563.6 1597.0,563.8 1600.1,564.0 1603.1,564.2 1606.1,564.4 1609.0,564.6 1611.9,564.8 1614.7,565.0 1617.4,565.2 1620.0,565.4 1622.5,565.6 1625.0,565.8 1629.0,566.1 1632.7,566.3 1636.2,566.6 1639.4,566.9 1642.3,567.1 1645.2,567.3 1647.9,567.6 1650.6,567.8 1653.2,568.0 1655.9,568.3 1658.6,568.5 1661.5,568.8 1664.5,569.1 1667.7,569.3 1671.2,569.7 1675.0,570.0 1677.6,570.2 1680.4,570.5 1683.4,570.8 1686.5,571.0 1689.8,571.3 1693.1,571.6 1696.5,572.0 1700.0,572.3 1703.6,572.6 1707.2,572.9 1710.8,573.3 1714.3,573.6 1717.9,573.9 1721.4,574.3 1724.8,574.6 1728.2,574.9 1731.4,575.2 1734.5,575.5 1737.5,575.7 1740.2,576.0 1742.9,576.2 1745.2,576.5 1747.4,576.7 1749.3,576.8 1751.0,577.0" fill="none" stroke="#f39428" stroke-width="1.3" stroke-linejoin="round"/><rect x="3" y="734" width="4" height="1.3" fill="#f39428"/><polyline points="3.0,957.5 5.1,957.5 7.2,957.4 9.2,957.4 11.3,957.4 13.4,957.4 15.5,957.3 17.6,957.3 19.6,957.3 21.7,957.3 23.8,957.2 25.9,957.2 27.9,957.2 30.0,957.2 32.1,957.1 34.2,957.1 36.3,957.1 38.3,957.1 40.4,957.0 42.5,957.0 44.6,957.0 46.7,957.0 48.8,957.0 50.8,957.0 52.9,957.0 55.0,957.0 55.5,949.4 55.7,962.0 57.0,956.0 58.5,957.0 60.0,955.0 61.5,957.0 63.0,955.0 64.4,948.0 64.5,969.4 64.5,963.9 62.3,963.9 60.2,963.9 58.0,963.9 60.2,963.9 62.4,963.9 64.5,963.9 66.7,963.9 68.0,962.0 70.3,965.6 70.3,951.7 73.0,951.2 76.0,952.3 77.8,955.0 77.5,958.0 75.0,960.5 72.0,961.0 70.5,960.5 74.0,960.7 76.7,960.6 79.4,960.5 81.4,960.2 83.4,960.0 85.4,959.7 87.4,959.4 89.4,959.1 91.4,958.9 93.4,958.6 95.4,958.3 97.4,958.1 99.4,957.8 101.4,957.7 103.5,957.6 105.5,957.5 107.5,957.4 109.6,957.3 111.6,957.2 113.6,957.1 115.7,957.0 117.7,956.9 119.7,956.8 121.8,956.7 123.8,956.6 125.8,956.5 127.9,956.4 129.9,956.3 131.9,956.3 134.0,956.2 136.0,956.1 138.0,956.0 140.1,955.9 142.1,955.8 144.1,955.7 146.2,955.6 148.2,955.5 150.3,955.4 152.3,955.3 154.3,955.2 156.4,955.1 158.4,955.0 160.4,954.9 162.5,954.8 164.5,954.7 166.5,954.6 168.6,954.5 170.6,954.4 172.6,954.3 174.7,954.2 176.7,954.1 178.7,954.0 180.8,953.9 182.8,953.8 184.8,953.7 186.9,953.6 188.9,953.5 190.9,953.4 193.0,953.3 195.0,953.2 195.7,953.3 197.8,950.3 199.9,947.3 202.0,944.3 204.1,941.3 206.2,940.2 208.4,939.1 210.6,938.0 212.7,937.0 214.8,935.9 217.0,934.8 219.2,932.9 221.3,931.1 223.5,929.2 225.7,927.4 227.8,925.6 230.0,923.7 232.1,921.4 234.2,919.4 236.3,916.7 238.3,913.5 240.4,911.3 242.5,909.0 244.6,905.0 246.7,903.3 248.9,901.6 251.1,900.0 253.4,897.7 255.6,895.6 257.8,893.1 259.8,891.6 261.9,889.5 263.9,889.2 265.9,886.8 268.0,886.3 270.0,885.2 272.0,882.5 274.0,881.1 276.1,880.7 278.1,878.3 280.2,877.0 282.3,874.2 284.4,872.3 286.5,870.7 288.5,870.4 290.6,868.5 292.7,865.4 294.8,864.4 296.9,863.6 299.0,862.5 301.1,860.4 303.3,858.3 305.4,857.3 307.5,855.0 309.6,854.3 311.8,851.1 314.0,850.8 316.3,847.9 318.5,845.4 320.7,843.1 322.9,843.2 325.0,841.4 327.2,841.5 329.4,840.7 331.5,838.7 333.7,838.5 335.9,836.3 338.0,834.7 340.2,832.9 342.4,831.9 344.5,829.5 346.7,828.3 348.8,826.8 350.8,824.9 352.9,825.1 354.9,822.7 357.0,821.5 359.0,820.5 361.1,819.8 363.1,817.5 365.2,816.3 367.0,814.4 368.0,823.7 370.3,819.9 372.6,814.4 374.8,812.7 377.0,811.1 379.3,809.5 381.5,806.8 383.7,806.1 385.8,805.5 387.8,804.4 389.9,803.6 391.9,804.7 394.0,802.9 396.0,803.0 398.1,803.0 400.1,802.1 402.2,801.5 404.3,800.2 406.3,799.7 408.4,798.8 410.4,798.3 412.5,796.0 414.5,796.0 416.6,794.5 418.6,793.6 420.7,793.1 422.7,793.5 424.8,792.8 426.8,792.7 428.8,793.0 430.8,793.1 432.9,792.0 434.9,792.2 436.9,791.8 438.9,791.7 441.0,791.8 443.0,791.3 445.1,790.9 447.2,790.8 449.3,790.4 451.5,791.1 453.6,790.3 455.7,790.4 457.8,789.4 460.1,789.2 462.4,786.7 464.7,786.2 467.0,785.9 469.3,783.9 471.8,784.4 474.2,782.9 476.7,783.5 479.0,783.2 481.3,784.2 483.6,783.9 485.9,785.2 488.1,785.3 490.3,785.5 492.6,787.3 494.8,788.1 497.0,788.1 499.1,789.1 501.1,787.8 503.2,789.2 505.3,789.3 507.3,788.4 509.4,790.1 511.5,790.5 513.5,789.2 515.6,790.0 517.6,791.9 519.7,791.9 521.7,793.1 523.8,795.1 525.8,795.8 527.9,795.5 529.9,797.1 532.0,798.3 534.0,799.3 536.1,798.8 538.2,798.4 540.3,798.5 542.4,798.7 544.6,802.2 546.7,803.9 548.9,808.0 551.1,809.3 553.2,810.3 555.4,810.7 557.6,812.6 559.7,814.4 561.9,815.4 564.4,818.2 566.8,820.1 569.3,823.7 571.5,823.6 573.7,822.2 576.0,821.5 578.2,818.7 580.4,818.5 582.5,817.4 584.6,816.3 586.7,817.2 588.9,815.5 591.0,814.6 593.1,814.6 595.2,814.1 597.4,815.1 599.5,815.2 601.7,814.3 603.8,814.3 606.0,816.0 608.1,815.4 610.0,821.9 613.7,817.6 615.8,817.8 617.9,818.1 620.0,817.0 622.0,817.0 624.1,818.3 626.2,817.8 628.3,817.2 630.4,818.1 632.5,820.0 634.6,820.5 636.7,821.9 638.9,821.6 641.0,824.2 643.1,823.7 645.2,825.6 647.4,828.8 649.5,830.4 651.7,833.0 652.6,899.6 654.4,916.3 657.2,922.8 660.0,929.3 662.5,932.2 664.9,935.3 667.4,938.1 669.5,938.7 671.6,939.4 673.7,940.3 675.9,940.9 678.0,941.6 680.1,942.3 682.2,943.1 684.3,943.4 686.3,943.9 688.4,944.3 690.4,944.7 692.5,945.3 694.5,945.6 696.6,946.1 698.6,946.4 700.7,946.9 702.8,947.1 704.8,947.3 706.9,947.6 709.0,947.8 711.0,948.3 713.1,948.5 715.2,948.7 717.2,949.0 719.3,949.3 721.6,949.2 723.9,948.7 726.2,948.6 728.5,948.3 730.8,948.9 733.1,949.4 735.5,950.1 737.8,950.6 739.8,950.6 741.8,950.6 743.9,950.7 745.9,950.7 747.9,950.6 749.9,950.7 751.9,950.7 753.9,950.6 756.0,950.6 758.0,950.6 760.0,950.6 762.0,950.6 764.0,950.7 766.0,950.8 768.0,951.1 770.0,951.0 772.0,951.1 774.0,951.1 776.0,951.5 778.0,951.6 780.0,951.6 782.0,951.6 784.0,951.7 786.0,951.8 788.0,951.9 790.0,951.9 792.0,952.1 794.0,952.1 796.0,952.4 798.0,952.5 800.0,952.5 802.2,952.6 804.4,952.5 806.6,952.8 808.8,952.7 810.9,952.8 813.1,952.7 815.3,952.9 817.5,953.0 819.6,952.9 821.7,952.9 823.8,952.7 825.8,952.8 827.9,952.6 830.0,952.6 832.1,952.5 834.2,952.5 836.2,952.4 838.3,952.3 840.4,952.3 842.5,952.3 844.6,952.3 846.7,952.2 848.8,952.2 850.8,952.2 852.9,952.1 855.0,952.0 857.0,952.0 859.1,951.7 861.1,951.6 863.2,951.7 865.2,951.3 867.3,951.4 869.3,951.2 871.4,951.0 873.4,951.1 875.5,951.0 877.5,950.8 879.5,950.7 881.6,950.6 883.6,950.3 885.7,950.3 887.7,950.2 889.8,950.2 891.8,950.0 893.9,949.9 895.9,949.8 898.0,949.7 900.0,949.5 902.0,949.5 904.0,949.4 906.0,949.2 908.0,949.1 910.0,949.1 912.0,949.1 914.0,948.9 916.0,949.1 918.0,948.9 920.0,948.9 922.0,948.8 924.0,948.8 926.0,948.6 928.0,948.4 930.0,948.6 932.0,948.5 934.0,948.4 936.0,948.3 938.0,948.3 940.0,948.0 942.0,948.2 944.0,948.0 946.0,947.8 948.0,947.8 950.0,947.9 952.0,947.7 954.0,947.8 956.0,947.8 958.0,947.6 960.0,947.5 962.0,947.4 964.0,947.4 966.0,947.4 968.0,947.4 970.0,947.3 972.0,947.2 974.0,947.0 976.0,947.0 978.0,947.0 980.0,947.1 982.0,946.9 984.0,946.9 986.0,946.7 988.0,946.7 990.0,946.7 992.0,946.8 994.0,946.7 996.0,946.7 998.0,946.5 1000.0,946.5 1002.0,946.4 1004.0,946.4 1006.0,946.2 1008.0,946.4 1010.0,946.2 1012.0,946.3 1014.0,946.3 1016.0,946.0 1018.0,946.0 1020.0,946.1 1022.0,946.1 1024.0,945.9 1026.0,945.8 1028.0,945.7 1030.0,945.9 1032.0,945.6 1034.0,945.7 1036.0,945.5 1038.0,945.6 1040.0,945.6 1042.0,945.3 1044.0,945.5 1046.0,945.4 1048.0,945.4 1050.0,945.3 1052.0,945.1 1054.0,945.3 1056.0,945.1 1058.0,944.9 1060.0,945.0 1062.0,944.8 1064.1,944.9 1066.1,944.8 1068.1,944.7 1070.1,944.6 1072.2,944.5 1074.2,944.5 1076.2,944.6 1078.2,944.2 1080.3,944.4 1082.3,944.4 1084.3,944.1 1086.4,944.2 1088.4,944.1 1090.4,944.1 1092.4,943.9 1094.5,943.8 1096.5,943.8 1098.5,943.9 1100.5,943.7 1102.6,943.5 1104.6,943.5 1106.6,943.4 1108.6,943.2 1110.7,943.2 1112.7,943.3 1114.7,943.1 1116.8,943.2 1118.8,943.0 1120.8,942.9 1122.8,942.9 1124.9,942.7 1126.9,942.7 1128.9,942.8 1130.9,942.8 1133.0,942.7 1135.0,942.5 1137.0,942.5 1139.1,942.5 1141.1,942.5 1143.1,942.3 1145.1,942.3 1147.2,942.1 1149.2,942.2 1151.2,942.1 1153.2,942.2 1155.3,942.1 1157.3,941.9 1159.3,941.8 1161.4,942.0 1163.4,941.7 1165.4,941.8 1167.4,941.7 1169.5,941.6 1171.5,941.7 1173.5,941.7 1175.5,941.5 1177.6,941.6 1179.6,941.4 1181.6,941.4 1183.6,941.3 1185.7,941.2 1187.7,941.2 1189.7,941.1 1191.8,941.3 1193.8,941.1 1195.8,941.0 1197.8,941.2 1199.9,941.1 1201.9,940.9 1203.9,940.8 1205.9,940.8 1208.0,940.7 1210.0,940.8 1212.0,940.7 1214.1,940.5 1216.1,940.6 1218.1,940.5 1220.1,940.6 1222.2,940.6 1224.2,940.5 1226.2,940.4 1228.2,940.4 1230.3,940.4 1232.3,940.3 1234.3,940.2 1236.4,940.1 1238.4,940.1 1240.4,940.3 1242.4,940.0 1244.5,940.1 1246.5,940.1 1248.5,940.1 1250.5,939.9 1252.6,939.8 1254.6,939.8 1256.6,939.8 1258.6,939.8 1260.7,939.9 1262.7,939.8 1264.7,939.8 1266.8,939.5 1268.8,939.4 1270.8,939.6 1272.8,939.6 1274.9,939.4 1276.9,939.4 1278.9,939.2 1280.9,939.3 1283.0,939.4 1285.0,939.2 1287.0,939.3 1289.1,939.3 1291.1,939.2 1293.1,939.0 1295.1,938.9 1297.2,938.9 1299.2,938.9 1301.2,938.9 1303.2,939.0 1305.3,938.8 1307.3,938.8 1309.3,938.8 1311.4,938.6 1313.4,938.6 1315.4,938.4 1317.4,938.6 1319.5,938.4 1321.5,938.5 1323.5,938.4 1325.5,938.2 1327.6,938.1 1329.6,938.1 1331.6,938.2 1333.6,938.2 1335.7,938.0 1337.7,937.9 1339.7,938.0 1341.8,938.0 1343.8,937.8 1345.8,937.7 1347.8,937.8 1349.9,937.6 1351.9,937.6 1353.9,937.6 1355.9,937.7 1358.0,937.6 1360.0,937.5 1362.0,937.6 1364.0,937.4 1366.0,937.3 1368.0,937.2 1370.0,937.4 1372.0,937.3 1374.0,937.1 1376.0,937.0 1378.0,937.1 1380.0,937.1 1382.0,937.0 1384.0,936.9 1386.0,937.0 1388.0,937.0 1390.0,936.8 1392.0,936.7 1394.0,936.7 1396.0,936.7 1398.0,936.7 1400.0,936.5 1402.0,936.7 1404.0,936.6 1406.0,936.5 1408.0,936.4 1410.0,936.5 1412.0,936.3 1414.0,936.4 1416.0,936.2 1418.0,936.1 1420.0,936.3 1422.0,936.1 1424.0,936.2 1426.0,936.1 1428.0,935.9 1430.0,935.9 1432.0,935.9 1434.0,935.9 1436.0,936.0 1438.0,935.7 1440.0,935.8 1442.0,935.7 1444.0,935.5 1446.0,935.7 1448.0,935.4 1450.0,935.3 1452.0,935.2 1454.0,935.3 1456.0,935.3 1458.0,935.3 1460.0,935.2 1462.0,935.2 1464.0,935.1 1466.0,934.9 1468.0,934.7 1470.0,934.9 1472.0,934.8 1474.0,934.5 1476.0,934.6 1478.0,934.5 1480.0,934.4 1482.0,934.3 1484.0,934.2 1486.0,934.1 1488.0,934.1 1490.0,934.1 1492.0,934.2 1494.0,933.9 1496.0,934.1 1498.0,933.8 1500.0,933.8 1502.0,933.8 1504.0,933.8 1506.0,933.6 1508.0,933.4 1510.0,933.5 1512.0,933.4 1514.0,933.5 1516.0,933.2 1518.0,933.2 1520.0,933.3 1522.0,932.9 1524.0,933.0 1526.0,933.0 1528.0,933.0 1530.0,932.7 1532.0,932.6 1534.0,932.6 1536.0,932.8 1538.0,932.5 1540.0,932.5 1542.0,932.5 1544.0,932.5 1546.0,932.3 1548.0,932.2 1550.0,932.3 1552.0,932.2 1554.0,932.0 1556.0,932.1 1558.0,931.9 1560.0,931.8 1562.0,931.7 1564.0,931.9 1566.0,931.8 1568.0,931.7 1570.0,931.7 1572.0,931.4 1574.0,931.4 1576.0,931.4 1578.0,931.5 1580.0,931.4 1582.0,931.2 1584.0,931.1 1586.0,931.1 1588.0,931.1 1590.0,931.1 1592.0,930.8 1594.0,931.0 1596.0,930.9 1598.0,930.9 1600.0,930.8 1602.0,930.7 1604.0,930.5 1606.0,930.5 1608.0,930.4 1610.0,930.5 1612.0,930.2 1614.0,930.2 1616.0,930.3 1618.0,930.1 1620.0,930.0 1622.0,929.9 1624.0,930.0 1626.0,929.9 1628.0,930.0 1630.0,929.9 1632.0,929.9 1634.0,929.6 1636.0,929.5 1638.0,929.4 1640.0,929.5 1642.0,929.4 1644.0,929.4 1646.1,929.3 1648.1,929.2 1650.1,929.2 1652.1,929.2 1654.1,929.1 1656.1,929.1 1658.2,929.1 1660.2,929.0 1662.2,928.7 1664.2,928.9 1666.2,928.7 1668.3,928.7 1670.3,928.6 1672.3,928.6 1674.3,928.4 1676.3,928.4 1678.3,928.3 1680.4,928.2 1682.4,928.4 1684.4,928.2 1686.4,928.1 1688.4,928.1 1690.5,928.2 1692.5,928.0 1694.5,927.8 1696.5,927.9 1698.5,927.8 1700.5,927.9 1702.6,927.5 1704.6,927.6 1706.6,927.6 1708.6,927.6 1710.6,927.6 1712.7,927.2 1714.7,927.3 1716.7,927.1 1718.7,927.1 1720.7,927.3 1722.7,927.1 1724.8,927.1 1726.8,926.9 1728.8,927.0 1730.8,926.8 1732.8,926.7 1734.9,926.8 1736.9,926.8 1738.9,926.5 1740.9,926.6 1742.9,926.5 1744.9,926.3 1747.0,926.3 1749.0,926.2 1751.0,926.2" fill="none" stroke="#78329c" stroke-width="1.2" stroke-linejoin="round"/><path d="M10 162H77L83.2 174.75L77 187.5H10Q7 187.5 7 184.5V165Q7 162 10 162Z" fill="#1e1c08" stroke="#f2ef1a" stroke-width="1.6"/><rect x="32.2" y="162" width="1.6" height="25.5" fill="#f2ef1a"/><text x="11.3" y="178" font-size="12.5" fill="#f2ef1a" textLength="16" lengthAdjust="spacingAndGlyphs">C 1</text><text x="45.2" y="178" font-size="12.5" fill="#f2ef1a" textLength="24.2" lengthAdjust="spacingAndGlyphs">20 V</text><text x="102.2" y="179" font-size="18.5" fill="#f2ef1a" textLength="96.5" lengthAdjust="spacingAndGlyphs">U_loop,coil</text><path d="M10 396H77L83.4 408.65L77 421.3H10Q7 421.3 7 418.3V399Q7 396 10 396Z" fill="#16200a" stroke="#8ccf3a" stroke-width="1.6"/><rect x="32.0" y="396" width="1.6" height="25.30000000000001" fill="#8ccf3a"/><text x="11.3" y="412.5" font-size="12.5" fill="#8ccf3a" textLength="16" lengthAdjust="spacingAndGlyphs">C 4</text><text x="36.3" y="412.5" font-size="12.5" fill="#8ccf3a" textLength="41.8" lengthAdjust="spacingAndGlyphs">200 mV</text><text x="102" y="413" font-size="18.5" fill="#8ccf3a" textLength="85.5" lengthAdjust="spacingAndGlyphs">U_Photod</text><path d="M10 722.8H31.5Q33 722.8 34 724.3L42 735.05L34 745.8Q33 747.3 31.5 747.3H10Q7 747.3 7 744.3V725.8Q7 722.8 10 722.8Z" fill="#1f1408" stroke="#f39428" stroke-width="1.6" stroke-linejoin="round"/><text x="13" y="739" font-size="12.5" fill="#f39428" textLength="20.5" lengthAdjust="spacingAndGlyphs">M 1</text><text x="53.5" y="740" font-size="18.5" fill="#f39428" textLength="27.8" lengthAdjust="spacingAndGlyphs">B_t</text><path d="M10 944.5H31.5Q33 944.5 34 946.0L42 957.0L34 968.0Q33 969.5 31.5 969.5H10Q7 969.5 7 966.5V947.5Q7 944.5 10 944.5Z" fill="#71308d" stroke="#71308d" stroke-width="1.6" stroke-linejoin="round"/><text x="13" y="960.5" font-size="12.5" fill="#ffffff" textLength="20.5" lengthAdjust="spacingAndGlyphs">M 2</text><path d="M44.8 58H65.2L55 67.4Z" fill="#f39428"/><path d="M46 69.2H64V87.8H59.3L55 94.5L50.7 87.8H46Z" fill="#000" stroke="#f39428" stroke-width="2.4"/><path d="M50.7 72.8H59.6V75.3H56.4V83.7H53.9V75.3H50.7Z" fill="#f39428"/><path d="M1709 65H1741Q1744 65 1744 68V97.5Q1744 100.5 1741.5 98.5Z" fill="#4e4e4e"/><circle cx="1737.2" cy="71.4" r="3.9" fill="none" stroke="#a8a8a8" stroke-width="1.9"/><path d="M1734.3 74.4L1728.3 80.4" stroke="#a8a8a8" stroke-width="2.6" stroke-linecap="round"/><text x="16.4" y="49.7" font-size="16.5" fill="#e8e8e8" textLength="125.0" lengthAdjust="spacingAndGlyphs">Waveform View</text><path d="M593 36.7H586.6V52.3H593" fill="none" stroke="#e6e6e6" stroke-width="1.4"/><path d="M1161.3 36.7H1167V52.3H1161.3" fill="none" stroke="#e6e6e6" stroke-width="1.4"/><rect x="587" y="44" width="580" height="2" fill="#b4b4b4"/><path d="M596 33H611L603.5 38Z" fill="#f39428"/><path d="M597.2 40.8H609.2V52H605.5L603.2 56L600.9 52H597.2Z" fill="#000" stroke="#f39428" stroke-width="1.8"/><path d="M600.2 42.8H606.2V44.4H604V50H602.4V44.4H600.2Z" fill="#f39428"/><text x="20.3" y="19" font-size="16.2" fill="#f2f2f2" textLength="25.0" lengthAdjust="spacingAndGlyphs">File</text><text x="86.4" y="19" font-size="16.2" fill="#f2f2f2" textLength="28.4" lengthAdjust="spacingAndGlyphs">Edit</text><text x="155.5" y="19" font-size="16.2" fill="#f2f2f2" textLength="44.5" lengthAdjust="spacingAndGlyphs">Utility</text><text x="240.6" y="19" font-size="16.2" fill="#f2f2f2" textLength="34.4" lengthAdjust="spacingAndGlyphs">Help</text><circle cx="1762" cy="503.8" r="2.1" fill="#bdbdbd"/><circle cx="1762" cy="512" r="2.1" fill="#bdbdbd"/><circle cx="1762" cy="520.8" r="2.1" fill="#bdbdbd"/><path d="M1769.5 995V29.5H1920" fill="none" stroke="#6a625c" stroke-width="1"/><rect x="1769" y="995" width="151" height="1" fill="#6a625c"/><text x="1785.8" y="25.6" font-size="30" fill="#ffffff" font-weight="bold" textLength="117.0" lengthAdjust="spacingAndGlyphs" stroke="#ffffff" stroke-width="0.7">Tektronix</text><path d="M1815.2 26.2L1825 9.6H1830.6L1820.6 26.2Z" fill="#1fb6dc"/><text x="1845" y="43.9" font-size="15.2" fill="#e4e4e4" text-anchor="middle" font-weight="bold" textLength="84.0" lengthAdjust="spacingAndGlyphs">Add New...</text><rect x="1778.5" y="54.5" width="62" height="36" rx="6" fill="url(#gBtn)" stroke="#6e645c" stroke-width="1"/><rect x="1850.5" y="54.5" width="62" height="36" rx="6" fill="url(#gBtn)" stroke="#6e645c" stroke-width="1"/><rect x="1778.5" y="100.5" width="62" height="36" rx="6" fill="url(#gBtn)" stroke="#6e645c" stroke-width="1"/><rect x="1850.5" y="100.5" width="62" height="36" rx="6" fill="url(#gBtn)" stroke="#6e645c" stroke-width="1"/><rect x="1778.5" y="146.5" width="62" height="36" rx="6" fill="url(#gBtn)" stroke="#6e645c" stroke-width="1"/><rect x="1850.5" y="146.5" width="62" height="36" rx="6" fill="url(#gBtn)" stroke="#6e645c" stroke-width="1"/><rect x="1778.5" y="196.5" width="62" height="36" rx="6" fill="url(#gBtn)" stroke="#6e645c" stroke-width="1"/><rect x="1850.5" y="196.5" width="62" height="36" rx="6" fill="url(#gBtn)" stroke="#6e645c" stroke-width="1"/><text x="1809.5" y="76.7" font-size="15.2" fill="#f0f0f0" text-anchor="middle" textLength="50.0" lengthAdjust="spacingAndGlyphs">Cursors</text><text x="1881.5" y="76.7" font-size="15.2" fill="#f0f0f0" text-anchor="middle" textLength="49.0" lengthAdjust="spacingAndGlyphs">Callout</text><text x="1809.5" y="123.3" font-size="15.2" fill="#f0f0f0" text-anchor="middle" textLength="59.0" lengthAdjust="spacingAndGlyphs">Measure</text><text x="1881.5" y="123.3" font-size="15.2" fill="#f0f0f0" text-anchor="middle" textLength="46.0" lengthAdjust="spacingAndGlyphs">Search</text><text x="1809.5" y="160.4" font-size="15.2" fill="#f0f0f0" text-anchor="middle" textLength="47.0" lengthAdjust="spacingAndGlyphs">Results</text><text x="1809.5" y="175.9" font-size="15.2" fill="#f0f0f0" text-anchor="middle" textLength="36.0" lengthAdjust="spacingAndGlyphs">Table</text><text x="1881.5" y="168.5" font-size="15.2" fill="#f0f0f0" text-anchor="middle" textLength="28.0" lengthAdjust="spacingAndGlyphs">Plot</text><text x="1881.5" y="218.9" font-size="15.2" fill="#f0f0f0" text-anchor="middle" textLength="50.0" lengthAdjust="spacingAndGlyphs">More...</text><rect x="1773" y="189" width="144" height="1" fill="#6a625c"/><rect x="1773" y="241" width="144" height="1" fill="#6a625c"/><rect x="1798" y="203" width="22" height="19" fill="none" stroke="#a4a4a4" stroke-width="2" stroke-dasharray="3 2.6"/><circle cx="1811" cy="210.5" r="4.6" fill="none" stroke="#a4a4a4" stroke-width="1.8"/><path d="M1807.6 213.8L1803 218.3" stroke="#a4a4a4" stroke-width="2.4" stroke-linecap="round"/><path d="M1815 216L1823.5 223L1819.5 223.3L1821.6 227.3L1819.8 228.2L1817.7 224.2L1815 227Z" fill="#a4a4a4"/><rect x="0" y="996" width="1920" height="84" fill="#2d2d2d"/><path d="M3 1007Q3 1003 7 1003H89Q93 1003 93 1007V1022H3Z" fill="#4a4623"/><rect x="3" y="1022" width="90" height="2" fill="#a8a8a8"/><path d="M3 1024H93V1075Q93 1079 89 1079H7Q3 1079 3 1075Z" fill="#cdcdcd"/><text x="8.5" y="1017.2" font-size="16" fill="#f6f034" textLength="28" lengthAdjust="spacingAndGlyphs" stroke="#f6f034" stroke-width="0.35">Ch 1</text><text x="8.5" y="1036.4" font-size="15" fill="#0a0a0a" textLength="43.25" lengthAdjust="spacingAndGlyphs">5 V/div</text><text x="8.5" y="1055.6000000000001" font-size="15" fill="#0a0a0a" textLength="35.4" lengthAdjust="spacingAndGlyphs">1 MΩ</text><text x="8.5" y="1074.8000000000002" font-size="15" fill="#0a0a0a" textLength="52.6" lengthAdjust="spacingAndGlyphs">200 kHz</text><text x="75" y="1068.9" font-size="9.2" fill="#0a0a0a" textLength="5.2" lengthAdjust="spacingAndGlyphs" stroke="#0a0a0a" stroke-width="0.25">B</text><text x="78" y="1072.2" font-size="10" fill="#0a0a0a" textLength="6.4" lengthAdjust="spacingAndGlyphs" stroke="#0a0a0a" stroke-width="0.2">w</text><path d="M98 1007Q98 1003 102 1003H184Q188 1003 188 1007V1022H98Z" fill="#218080"/><rect x="98" y="1022" width="90" height="2" fill="#a8a8a8"/><path d="M98 1024H188V1075Q188 1079 184 1079H102Q98 1079 98 1075Z" fill="#868686"/><text x="103.5" y="1017.2" font-size="16" fill="#101818" textLength="29" lengthAdjust="spacingAndGlyphs" stroke="#101818" stroke-width="0.35">Ch 2</text><text x="103.5" y="1036.4" font-size="15" fill="#0a0a0a" textLength="73.0" lengthAdjust="spacingAndGlyphs">250 mV/div</text><text x="103.5" y="1055.6000000000001" font-size="15" fill="#0a0a0a" textLength="35.4" lengthAdjust="spacingAndGlyphs">1 MΩ</text><text x="103.5" y="1074.8000000000002" font-size="15" fill="#0a0a0a" textLength="52.6" lengthAdjust="spacingAndGlyphs">200 kHz</text><text x="170" y="1068.9" font-size="9.2" fill="#0a0a0a" textLength="5.2" lengthAdjust="spacingAndGlyphs" stroke="#0a0a0a" stroke-width="0.25">B</text><text x="173" y="1072.2" font-size="10" fill="#0a0a0a" textLength="6.4" lengthAdjust="spacingAndGlyphs" stroke="#0a0a0a" stroke-width="0.2">w</text><path d="M193 1007Q193 1003 197 1003H279Q283 1003 283 1007V1022H193Z" fill="#8e3246"/><rect x="193" y="1022" width="90" height="2" fill="#a8a8a8"/><path d="M193 1024H283V1075Q283 1079 279 1079H197Q193 1079 193 1075Z" fill="#868686"/><text x="198.5" y="1017.2" font-size="16" fill="#bdbdbd" textLength="29" lengthAdjust="spacingAndGlyphs" stroke="#bdbdbd" stroke-width="0.35">Ch 3</text><text x="198.5" y="1036.4" font-size="15" fill="#0a0a0a" textLength="73.0" lengthAdjust="spacingAndGlyphs">450 mV/div</text><text x="198.5" y="1055.6000000000001" font-size="15" fill="#0a0a0a" textLength="35.4" lengthAdjust="spacingAndGlyphs">1 MΩ</text><text x="198.5" y="1074.8000000000002" font-size="15" fill="#0a0a0a" textLength="52.6" lengthAdjust="spacingAndGlyphs">200 kHz</text><text x="265" y="1068.9" font-size="9.2" fill="#0a0a0a" textLength="5.2" lengthAdjust="spacingAndGlyphs" stroke="#0a0a0a" stroke-width="0.25">B</text><text x="268" y="1072.2" font-size="10" fill="#0a0a0a" textLength="6.4" lengthAdjust="spacingAndGlyphs" stroke="#0a0a0a" stroke-width="0.2">w</text><path d="M288 1007Q288 1003 292 1003H374Q378 1003 378 1007V1022H288Z" fill="#344420"/><rect x="288" y="1022" width="90" height="2" fill="#a8a8a8"/><path d="M288 1024H378V1075Q378 1079 374 1079H292Q288 1079 288 1075Z" fill="#cdcdcd"/><text x="293.5" y="1017.2" font-size="16" fill="#90d838" textLength="29" lengthAdjust="spacingAndGlyphs" stroke="#90d838" stroke-width="0.35">Ch 4</text><text x="293.5" y="1036.4" font-size="15" fill="#0a0a0a" textLength="73.0" lengthAdjust="spacingAndGlyphs">200 mV/div</text><text x="293.5" y="1055.6000000000001" font-size="15" fill="#0a0a0a" textLength="35.4" lengthAdjust="spacingAndGlyphs">1 MΩ</text><text x="293.5" y="1074.8000000000002" font-size="15" fill="#0a0a0a" textLength="52.6" lengthAdjust="spacingAndGlyphs">200 kHz</text><text x="360" y="1068.9" font-size="9.2" fill="#0a0a0a" textLength="5.2" lengthAdjust="spacingAndGlyphs" stroke="#0a0a0a" stroke-width="0.25">B</text><text x="363" y="1072.2" font-size="10" fill="#0a0a0a" textLength="6.4" lengthAdjust="spacingAndGlyphs" stroke="#0a0a0a" stroke-width="0.2">w</text><path d="M383 1007Q383 1003 387 1003H469Q473 1003 473 1007V1022H383Z" fill="#4a321c"/><rect x="383" y="1022" width="90" height="2" fill="#a8a8a8"/><path d="M383 1024H473V1075Q473 1079 469 1079H387Q383 1079 383 1075Z" fill="#cdcdcd"/><text x="388.5" y="1017.2" font-size="16" fill="#f7941d" textLength="47" lengthAdjust="spacingAndGlyphs" stroke="#f7941d" stroke-width="0.35">Math 1</text><text x="388.5" y="1036.4" font-size="15" fill="#0a0a0a" textLength="74.4" lengthAdjust="spacingAndGlyphs">72.9 mT/div</text><text x="388.5" y="1055.6000000000001" font-size="15" fill="#0a0a0a" textLength="73.2" lengthAdjust="spacingAndGlyphs">Intg(Ch2)...</text><path d="M478 1007Q478 1003 482 1003H564Q568 1003 568 1007V1022H478Z" fill="#6e2d8c"/><rect x="478" y="1022" width="90" height="2" fill="#a8a8a8"/><path d="M478 1024H568V1075Q568 1079 564 1079H482Q478 1079 478 1075Z" fill="#cdcdcd"/><text x="483.5" y="1017.2" font-size="16" fill="#ffffff" textLength="48.5" lengthAdjust="spacingAndGlyphs" stroke="#ffffff" stroke-width="0.35">Math 2</text><text x="483.5" y="1036.4" font-size="15" fill="#0a0a0a" textLength="82.3" lengthAdjust="spacingAndGlyphs">380.71 A/div</text><text x="483.5" y="1055.6000000000001" font-size="15" fill="#0a0a0a" textLength="74.5" lengthAdjust="spacingAndGlyphs">-Intg(Ch3...</text><rect x="1023.5" y="999.5" width="39" height="79" rx="6" fill="url(#gBtn2)" stroke="#6e645c" stroke-width="1"/><rect x="1027" y="1007" width="32" height="2.2" fill="#f7941d"/><text x="1043" y="1049.7" font-size="18" fill="#f0f0f0" text-anchor="middle">5</text><rect x="1068.5" y="999.5" width="39" height="79" rx="6" fill="url(#gBtn2)" stroke="#6e645c" stroke-width="1"/><rect x="1072" y="1007" width="32" height="2.2" fill="#2b2bd0"/><text x="1088" y="1049.7" font-size="18" fill="#f0f0f0" text-anchor="middle">6</text><rect x="1118" y="1000" width="1" height="78" fill="#6a625c"/><rect x="1129.5" y="999.5" width="39" height="79" rx="6" fill="url(#gBtn2)" stroke="#6e645c" stroke-width="1"/><rect x="1133" y="1007" width="32" height="2.2" fill="#b02228"/><text x="1149" y="1032.6" font-size="14.6" fill="#f0f0f0" text-anchor="middle">Add</text><text x="1149" y="1048.8" font-size="14.6" fill="#f0f0f0" text-anchor="middle">New</text><text x="1149" y="1064.8" font-size="14.6" fill="#f0f0f0" text-anchor="middle">Math</text><rect x="1174.5" y="999.5" width="39" height="79" rx="6" fill="url(#gBtn2)" stroke="#6e645c" stroke-width="1"/><rect x="1178" y="1007" width="32" height="2.2" fill="#c4c4d4"/><text x="1194" y="1032.6" font-size="14.6" fill="#f0f0f0" text-anchor="middle">Add</text><text x="1194" y="1048.8" font-size="14.6" fill="#f0f0f0" text-anchor="middle">New</text><text x="1194" y="1064.8" font-size="14.6" fill="#f0f0f0" text-anchor="middle">Ref</text><rect x="1219.5" y="999.5" width="39" height="79" rx="6" fill="url(#gBtn2)" stroke="#6e645c" stroke-width="1"/><rect x="1223" y="1007" width="32" height="2.2" fill="#c15ce8"/><text x="1239" y="1032.6" font-size="14.6" fill="#f0f0f0" text-anchor="middle">Add</text><text x="1239" y="1048.8" font-size="14.6" fill="#f0f0f0" text-anchor="middle">New</text><text x="1239" y="1064.8" font-size="14.6" fill="#f0f0f0" text-anchor="middle">Bus</text><rect x="1269" y="1000" width="1" height="78" fill="#6a625c"/><rect x="1281" y="1003.5" width="198" height="75" rx="4" fill="#141414"/><path d="M1282 1008Q1282 1004.5 1285.5 1004.5H1474.5Q1478 1004.5 1478 1008V1023H1282Z" fill="#5c5c60"/><rect x="1282" y="1023" width="196" height="1.5" fill="#a0a0a0"/><path d="M1282 1024.5H1478V1074.5Q1478 1077.5 1475 1077.5H1285Q1282 1077.5 1282 1074.5Z" fill="#cccccc"/><text x="1286.2" y="1017.8" font-size="15.6" fill="#f0f0f0" textLength="73" lengthAdjust="spacingAndGlyphs">Horizontal</text><text x="1285.3" y="1036.3" font-size="15" fill="#0a0a0a" textLength="65.2" lengthAdjust="spacingAndGlyphs">4.5 ms/div</text><text x="1391" y="1036.3" font-size="15" fill="#0a0a0a" textLength="39.0" lengthAdjust="spacingAndGlyphs">45 ms</text><text x="1285.3" y="1055.3999999999999" font-size="15" fill="#0a0a0a" textLength="66.7" lengthAdjust="spacingAndGlyphs">SR: 1 MS/s</text><text x="1391" y="1055.3999999999999" font-size="15" fill="#0a0a0a" textLength="43.1" lengthAdjust="spacingAndGlyphs">1 µs/pt</text><text x="1285.3" y="1074.5" font-size="15" fill="#0a0a0a" textLength="69.7" lengthAdjust="spacingAndGlyphs">RL: 45 kpts</text><path d="M1391.7 1063.5H1399.2V1071.6H1397L1395.45 1074.3L1393.9 1071.6H1391.7Z" fill="#000" stroke="#f39428" stroke-width="1.3"/><path d="M1393.4 1065.2H1397.5V1066.6H1396.1V1070.8H1394.8V1066.6H1393.4Z" fill="#fff"/><text x="1405.4" y="1074.3" font-size="15" fill="#0a0a0a" textLength="21.5" lengthAdjust="spacingAndGlyphs">3%</text><rect x="1486" y="1003.5" width="158" height="75" rx="4" fill="#141414"/><path d="M1487 1008Q1487 1004.5 1490.5 1004.5H1639.5Q1643 1004.5 1643 1008V1023H1487Z" fill="#5c5c60"/><rect x="1487" y="1023" width="156" height="1.5" fill="#a0a0a0"/><path d="M1487 1024.5H1643V1074.5Q1643 1077.5 1640 1077.5H1490Q1487 1077.5 1487 1074.5Z" fill="#cccccc"/><text x="1491.2" y="1017.8" font-size="15.6" fill="#f0f0f0" textLength="49" lengthAdjust="spacingAndGlyphs">Trigger</text><rect x="1490.8" y="1025.8" width="29" height="14.8" rx="5" fill="#2626c4" stroke="#101040" stroke-width="1"/><text x="1505.3" y="1037.8" font-size="14" fill="#ffffff" text-anchor="middle">6</text><path d="M1530 1036.7H1534L1541 1027.8H1546" fill="none" stroke="#303070" stroke-width="1.1"/><text x="1556" y="1036.3" font-size="15" fill="#0a0a0a" textLength="21.6" lengthAdjust="spacingAndGlyphs">3 V</text><rect x="1651" y="1003.5" width="148" height="75" rx="4" fill="#141414"/><path d="M1652 1008Q1652 1004.5 1655.5 1004.5H1794.5Q1798 1004.5 1798 1008V1023H1652Z" fill="#5c5c60"/><rect x="1652" y="1023" width="146" height="1.5" fill="#a0a0a0"/><path d="M1652 1024.5H1798V1074.5Q1798 1077.5 1795 1077.5H1655Q1652 1077.5 1652 1074.5Z" fill="#cccccc"/><text x="1656.2" y="1017.8" font-size="15.6" fill="#f0f0f0" textLength="77.4" lengthAdjust="spacingAndGlyphs">Acquisition</text><text x="1655.1" y="1036.3" font-size="15" fill="#0a0a0a" textLength="51.0" lengthAdjust="spacingAndGlyphs">Manual,</text><text x="1736" y="1036.3" font-size="15" fill="#0a0a0a" textLength="49.2" lengthAdjust="spacingAndGlyphs">Analyze</text><text x="1655.1" y="1055.4" font-size="15" fill="#0a0a0a" textLength="106.8" lengthAdjust="spacingAndGlyphs">High Res: 16 bits</text><text x="1655.1" y="1074.5" font-size="15" fill="#0a0a0a" textLength="69.6" lengthAdjust="spacingAndGlyphs">Single: 0 /1</text><rect x="1811" y="1000" width="1" height="78" fill="#6a625c"/><rect x="1822.5" y="999.5" width="89" height="35" rx="5.5" fill="#ff1e26" stroke="#7c7c7c" stroke-width="1"/><text x="1866.8" y="1020.2" font-size="13" fill="#ffffff" text-anchor="middle" font-weight="bold" textLength="53.0" lengthAdjust="spacingAndGlyphs">Preview</text><rect x="1822.5" y="1040.5" width="89" height="38" rx="5" fill="#cbcbcb"/><text x="1867" y="1054.3" font-size="15" fill="#0a0a0a" text-anchor="middle" textLength="84.4" lengthAdjust="spacingAndGlyphs">28 May 2025</text><text x="1867" y="1071.7" font-size="15" fill="#0a0a0a" text-anchor="middle" textLength="73.8" lengthAdjust="spacingAndGlyphs">4:23:47 PM</text></svg></body></html>
